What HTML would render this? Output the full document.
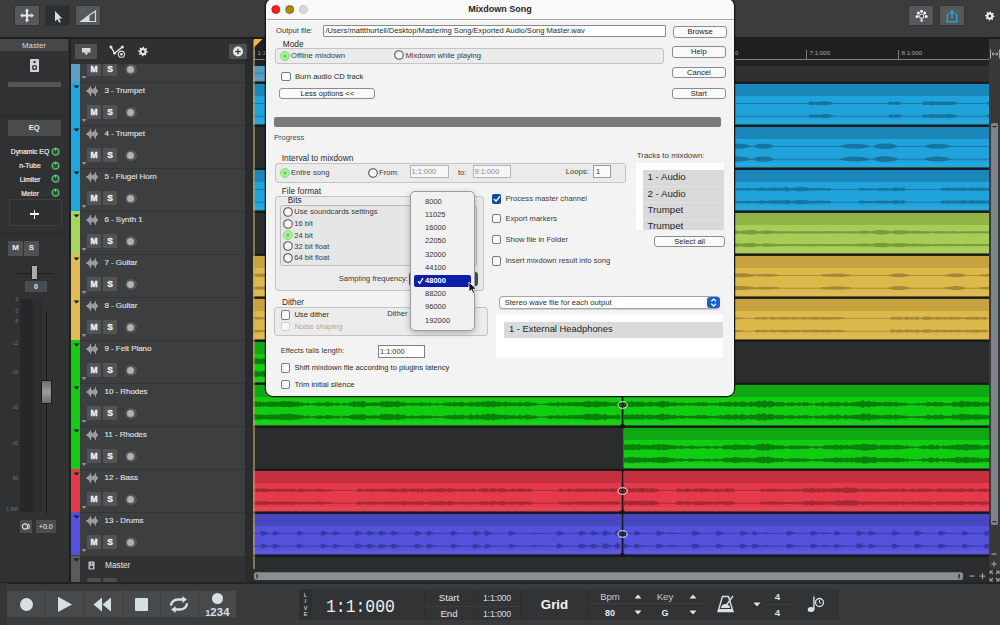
<!DOCTYPE html>
<html><head><meta charset="utf-8"><style>
*{margin:0;padding:0;box-sizing:border-box}
html,body{width:1000px;height:625px;overflow:hidden}
body{background:#2c2d2f;font-family:'Liberation Sans', sans-serif;position:relative}
.a{position:absolute}
</style></head><body>
<svg class="a" style="left:0;top:0" width="1000" height="625" viewBox="0 0 1000 625"><rect x="253" y="38" width="736" height="534" fill="#2b2c2e"/><rect x="253" y="66" width="736" height="16.5" fill="#2f3032"/><rect x="250" y="40.8" width="270" height="40.7" rx="1.8" fill="#4f9cc0"/><path d="M250 42.6 Q250 40.8 251.8 40.8 L518.2 40.8 Q520 40.8 520 42.6 L520 52.9 L250 52.9 Z" fill="#4f95b8"/><rect x="250" y="77" width="270" height="3.5" fill="#ffffff" opacity="0.05"/><rect x="250" y="59.9" width="270" height="1" fill="#3d7e9e" opacity="0.85"/><path d="M250 60.4 252 60.4 254 60.4 256 60.4 258 60.4 260 60.4 262 60.4 264 60.4 266 60.4 268 60.4 270 60.4 272 60.4 274 60.4 276 60.4 278 60.4 280 60.4 282 60.4 284 60.4 286 60.4 288 60.4 290 60.4 292 60.4 294 60.4 296 60.4 298 60.4 300 60.4 302 60.4 304 60.4 306 60.4 308 60.4 310 60.4 312 60.4 314 60.4 316 60.4 318 60.4 320 60.4 322 60.4 324 60.4 326 60.4 328 60.4 330 60.4 332 60.4 334 60.4 336 60.4 338 60.4 340 60.4 342 60.4 344 60.4 346 60.4 348 60.4 350 60.4 352 60.4 354 60.4 356 60.4 358 60.4 360 60.4 362 60.4 364 60.4 366 60.4 368 60.4 370 60.4 372 60.4 374 60.4 376 60.4 378 60.4 380 60.4 382 60.4 384 60.4 386 60.4 388 60.4 390 60.4 392 60.4 394 60.4 396 60.4 398 60.4 400 60.4 402 60.4 404 60.4 406 60.4 408 60.4 410 60.4 412 58.6 414 58.8 416 59.4 418 58.6 420 58.7 422 59.2 424 58.5 426 59.1 428 58.7 430 58.6 432 58.6 434 59.5 436 58.9 438 58.6 440 58.4 442 58.8 444 59.3 446 59.3 448 60.4 450 60.4 452 60.4 454 60.4 456 60.4 458 60.4 460 60.4 462 60.4 464 60.4 466 60.4 468 60.4 470 60.4 472 60.4 474 60.4 476 60.4 478 60.4 480 60.4 482 59.0 484 59.1 486 59.5 488 59.6 490 58.7 492 59.1 494 59.3 496 58.7 498 59.4 500 59.0 502 59.2 504 58.8 506 59.0 508 59.3 510 59.0 512 59.3 514 58.9 516 59.5 518 59.1 518 61.5 516 61.2 514 61.7 512 61.3 510 61.6 508 61.3 506 61.6 504 61.8 502 61.4 500 61.6 498 61.2 496 61.9 494 61.3 492 61.5 490 61.9 488 61.1 486 61.2 484 61.5 482 61.6 480 60.4 478 60.4 476 60.4 474 60.4 472 60.4 470 60.4 468 60.4 466 60.4 464 60.4 462 60.4 460 60.4 458 60.4 456 60.4 454 60.4 452 60.4 450 60.4 448 60.4 446 61.3 444 61.3 442 61.8 440 62.1 438 62.0 436 61.7 434 61.2 432 62.0 430 61.9 428 61.9 426 61.5 424 62.1 422 61.5 420 61.9 418 62.0 416 61.3 414 61.8 412 61.9 410 60.4 408 60.4 406 60.4 404 60.4 402 60.4 400 60.4 398 60.4 396 60.4 394 60.4 392 60.4 390 60.4 388 60.4 386 60.4 384 60.4 382 60.4 380 60.4 378 60.4 376 60.4 374 60.4 372 60.4 370 60.4 368 60.4 366 60.4 364 60.4 362 60.4 360 60.4 358 60.4 356 60.4 354 60.4 352 60.4 350 60.4 348 60.4 346 60.4 344 60.4 342 60.4 340 60.4 338 60.4 336 60.4 334 60.4 332 60.4 330 60.4 328 60.4 326 60.4 324 60.4 322 60.4 320 60.4 318 60.4 316 60.4 314 60.4 312 60.4 310 60.4 308 60.4 306 60.4 304 60.4 302 60.4 300 60.4 298 60.4 296 60.4 294 60.4 292 60.4 290 60.4 288 60.4 286 60.4 284 60.4 282 60.4 280 60.4 278 60.4 276 60.4 274 60.4 272 60.4 270 60.4 268 60.4 266 60.4 264 60.4 262 60.4 260 60.4 258 60.4 256 60.4 254 60.4 252 60.4 250 60.4Z" fill="#3d7e9e"/><rect x="250" y="72.7" width="270" height="1" fill="#3d7e9e" opacity="0.85"/><path d="M250 73.2 252 73.2 254 73.2 256 73.2 258 73.2 260 73.2 262 73.2 264 73.2 266 73.2 268 73.2 270 73.2 272 73.2 274 73.2 276 73.2 278 73.2 280 73.2 282 73.2 284 73.2 286 73.2 288 73.2 290 73.2 292 73.2 294 73.2 296 73.2 298 73.2 300 73.2 302 73.2 304 73.2 306 73.2 308 73.2 310 73.2 312 73.2 314 73.2 316 73.2 318 73.2 320 73.2 322 73.2 324 73.2 326 73.2 328 73.2 330 73.2 332 73.2 334 73.2 336 73.2 338 73.2 340 73.2 342 73.2 344 73.2 346 73.2 348 73.2 350 73.2 352 73.2 354 73.2 356 73.2 358 73.2 360 73.2 362 73.2 364 73.2 366 73.2 368 73.2 370 73.2 372 73.2 374 73.2 376 73.2 378 73.2 380 73.2 382 73.2 384 73.2 386 73.2 388 73.2 390 73.2 392 73.2 394 73.2 396 73.2 398 73.2 400 73.2 402 73.2 404 73.2 406 73.2 408 73.2 410 73.2 412 71.5 414 71.5 416 72.2 418 71.2 420 71.6 422 71.9 424 71.3 426 71.9 428 71.5 430 71.5 432 71.2 434 72.3 436 71.6 438 71.3 440 71.3 442 71.6 444 72.1 446 72.1 448 73.2 450 73.2 452 73.2 454 73.2 456 73.2 458 73.2 460 73.2 462 73.2 464 73.2 466 73.2 468 73.2 470 73.2 472 73.2 474 73.2 476 73.2 478 73.2 480 73.2 482 71.8 484 71.9 486 72.3 488 72.3 490 71.4 492 72.0 494 72.1 496 71.5 498 72.3 500 71.8 502 71.9 504 71.6 506 71.8 508 72.1 510 71.9 512 72.1 514 71.8 516 72.3 518 71.9 518 74.3 516 73.9 514 74.4 512 74.1 510 74.3 508 74.1 506 74.4 504 74.5 502 74.3 500 74.4 498 74.0 496 74.6 494 74.1 492 74.2 490 74.7 488 74.0 486 74.0 484 74.3 482 74.4 480 73.2 478 73.2 476 73.2 474 73.2 472 73.2 470 73.2 468 73.2 466 73.2 464 73.2 462 73.2 460 73.2 458 73.2 456 73.2 454 73.2 452 73.2 450 73.2 448 73.2 446 74.1 444 74.1 442 74.6 440 74.8 438 74.8 436 74.5 434 74.0 432 74.9 430 74.6 428 74.7 426 74.3 424 74.8 422 74.3 420 74.5 418 74.9 416 74.1 414 74.7 412 74.7 410 73.2 408 73.2 406 73.2 404 73.2 402 73.2 400 73.2 398 73.2 396 73.2 394 73.2 392 73.2 390 73.2 388 73.2 386 73.2 384 73.2 382 73.2 380 73.2 378 73.2 376 73.2 374 73.2 372 73.2 370 73.2 368 73.2 366 73.2 364 73.2 362 73.2 360 73.2 358 73.2 356 73.2 354 73.2 352 73.2 350 73.2 348 73.2 346 73.2 344 73.2 342 73.2 340 73.2 338 73.2 336 73.2 334 73.2 332 73.2 330 73.2 328 73.2 326 73.2 324 73.2 322 73.2 320 73.2 318 73.2 316 73.2 314 73.2 312 73.2 310 73.2 308 73.2 306 73.2 304 73.2 302 73.2 300 73.2 298 73.2 296 73.2 294 73.2 292 73.2 290 73.2 288 73.2 286 73.2 284 73.2 282 73.2 280 73.2 278 73.2 276 73.2 274 73.2 272 73.2 270 73.2 268 73.2 266 73.2 264 73.2 262 73.2 260 73.2 258 73.2 256 73.2 254 73.2 252 73.2 250 73.2Z" fill="#3d7e9e"/><rect x="250" y="83.8" width="743" height="40.7" rx="1.8" fill="#1fa3da"/><path d="M250 85.6 Q250 83.8 251.8 83.8 L991.2 83.8 Q993 83.8 993 85.6 L993 95.9 L250 95.9 Z" fill="#1a86b9"/><rect x="250" y="120" width="743" height="3.5" fill="#ffffff" opacity="0.05"/><rect x="250" y="102.9" width="743" height="1" fill="#1773a0" opacity="0.85"/><path d="M250 103.4 252 103.4 254 103.4 256 103.4 258 103.4 260 103.4 262 103.4 264 103.4 266 103.4 268 103.4 270 103.4 272 103.4 274 103.4 276 103.4 278 103.4 280 103.4 282 103.4 284 103.4 286 103.4 288 103.4 290 103.4 292 103.4 294 103.4 296 103.4 298 103.4 300 103.4 302 103.4 304 103.4 306 103.4 308 103.4 310 103.4 312 103.4 314 103.4 316 103.4 318 103.4 320 103.4 322 103.4 324 103.4 326 103.4 328 103.4 330 103.4 332 103.4 334 103.4 336 103.4 338 103.4 340 103.4 342 103.4 344 103.4 346 103.4 348 103.4 350 103.4 352 103.4 354 102.1 356 102.2 358 102.3 360 102.5 362 102.2 364 102.0 366 101.8 368 102.5 370 102.3 372 101.9 374 102.0 376 102.6 378 102.3 380 102.1 382 102.0 384 102.2 386 101.8 388 102.2 390 101.5 392 101.6 394 102.0 396 102.3 398 101.5 400 101.4 402 101.5 404 101.3 406 102.0 408 101.9 410 101.6 412 101.6 414 102.0 416 101.6 418 103.4 420 103.4 422 103.4 424 103.4 426 103.4 428 103.4 430 103.4 432 103.4 434 103.4 436 103.4 438 103.4 440 103.4 442 103.4 444 103.4 446 103.4 448 103.4 450 103.4 452 103.4 454 103.4 456 103.4 458 103.4 460 103.4 462 101.7 464 101.6 466 102.0 468 102.3 470 101.9 472 101.7 474 102.0 476 101.9 478 101.6 480 103.4 482 103.4 484 103.4 486 103.4 488 103.4 490 103.4 492 103.4 494 103.4 496 103.4 498 103.4 500 103.4 502 103.4 504 103.4 506 103.4 508 103.4 510 103.4 512 103.4 514 103.4 516 103.4 518 103.4 520 103.4 522 103.4 524 103.4 526 103.4 528 103.4 530 103.4 532 103.4 534 103.4 536 103.4 538 103.4 540 103.4 542 103.4 544 103.4 546 103.4 548 103.4 550 103.4 552 100.8 554 101.3 556 101.9 558 101.0 560 101.1 562 101.4 564 100.9 566 101.0 568 101.5 570 101.4 572 101.3 574 101.7 576 102.1 578 101.5 580 101.2 582 101.6 584 101.6 586 102.1 588 103.4 590 103.4 592 103.4 594 103.4 596 103.4 598 103.4 600 103.4 602 103.4 604 103.4 606 103.4 608 103.4 610 103.4 612 103.4 614 103.4 616 103.4 618 103.4 620 103.4 622 103.4 624 101.4 626 101.6 628 102.0 630 102.1 632 101.1 634 101.0 636 102.0 638 101.5 640 102.1 642 101.3 644 102.1 646 102.3 648 102.6 650 102.0 652 102.0 654 101.9 656 102.0 658 102.1 660 102.3 662 102.1 664 102.3 666 102.1 668 102.5 670 102.1 672 102.1 674 102.0 676 102.0 678 102.4 680 101.7 682 101.7 684 102.2 686 102.5 688 101.9 690 102.0 692 101.8 694 101.8 696 102.3 698 103.4 700 103.4 702 103.4 704 103.4 706 103.4 708 103.4 710 103.4 712 103.4 714 103.4 716 103.4 718 103.4 720 103.4 722 103.4 724 103.4 726 103.4 728 103.4 730 103.4 732 103.4 734 103.4 736 103.4 738 103.4 740 103.4 742 103.4 744 103.4 746 103.4 748 103.4 750 103.4 752 103.4 754 103.4 756 103.4 758 103.4 760 103.4 762 103.4 764 103.4 766 103.4 768 103.4 770 103.4 772 103.4 774 103.4 776 103.4 778 103.4 780 103.4 782 103.4 784 103.4 786 103.4 788 103.4 790 103.4 792 103.4 794 103.4 796 103.4 798 103.4 800 103.4 802 103.4 804 103.4 806 103.4 808 103.4 810 101.5 812 101.5 814 102.2 816 101.5 818 101.9 820 101.8 822 101.3 824 101.3 826 101.4 828 101.3 830 102.0 832 102.2 834 103.4 836 103.4 838 103.4 840 103.4 842 103.4 844 103.4 846 103.4 848 103.4 850 103.4 852 103.4 854 103.4 856 103.4 858 103.4 860 103.4 862 103.4 864 103.4 866 103.4 868 103.4 870 103.4 872 103.4 874 103.4 876 103.4 878 103.4 880 103.4 882 103.4 884 103.4 886 103.4 888 103.4 890 101.4 892 102.0 894 102.3 896 101.4 898 101.8 900 101.7 902 103.4 904 103.4 906 103.4 908 103.4 910 103.4 912 103.4 914 103.4 916 103.4 918 103.4 920 103.4 922 103.4 924 101.2 926 101.6 928 102.0 930 101.3 932 101.3 934 101.6 936 101.9 938 101.2 940 101.6 942 101.7 944 101.5 946 101.9 948 101.0 950 101.7 952 101.2 954 102.0 956 101.9 958 103.4 960 103.4 962 103.4 964 103.4 966 103.4 968 103.4 970 103.4 972 103.4 974 103.4 976 103.4 978 103.4 980 103.4 982 103.4 984 103.4 986 103.4 988 101.7 990 102.1 992 102.3 992 104.3 990 104.5 988 104.8 986 103.4 984 103.4 982 103.4 980 103.4 978 103.4 976 103.4 974 103.4 972 103.4 970 103.4 968 103.4 966 103.4 964 103.4 962 103.4 960 103.4 958 103.4 956 104.6 954 104.6 952 105.2 950 104.9 948 105.4 946 104.7 944 105.0 942 104.8 940 105.0 938 105.3 936 104.6 934 105.0 932 105.2 930 105.2 928 104.6 926 104.9 924 105.3 922 103.4 920 103.4 918 103.4 916 103.4 914 103.4 912 103.4 910 103.4 908 103.4 906 103.4 904 103.4 902 103.4 900 104.8 898 104.8 896 105.1 894 104.4 892 104.6 890 105.1 888 103.4 886 103.4 884 103.4 882 103.4 880 103.4 878 103.4 876 103.4 874 103.4 872 103.4 870 103.4 868 103.4 866 103.4 864 103.4 862 103.4 860 103.4 858 103.4 856 103.4 854 103.4 852 103.4 850 103.4 848 103.4 846 103.4 844 103.4 842 103.4 840 103.4 838 103.4 836 103.4 834 103.4 832 104.4 830 104.6 828 105.2 826 105.1 824 105.2 822 105.2 820 104.8 818 104.7 816 105.0 814 104.4 812 105.0 810 105.0 808 103.4 806 103.4 804 103.4 802 103.4 800 103.4 798 103.4 796 103.4 794 103.4 792 103.4 790 103.4 788 103.4 786 103.4 784 103.4 782 103.4 780 103.4 778 103.4 776 103.4 774 103.4 772 103.4 770 103.4 768 103.4 766 103.4 764 103.4 762 103.4 760 103.4 758 103.4 756 103.4 754 103.4 752 103.4 750 103.4 748 103.4 746 103.4 744 103.4 742 103.4 740 103.4 738 103.4 736 103.4 734 103.4 732 103.4 730 103.4 728 103.4 726 103.4 724 103.4 722 103.4 720 103.4 718 103.4 716 103.4 714 103.4 712 103.4 710 103.4 708 103.4 706 103.4 704 103.4 702 103.4 700 103.4 698 103.4 696 104.4 694 104.8 692 104.7 690 104.5 688 104.6 686 104.2 684 104.4 682 104.8 680 104.8 678 104.2 676 104.6 674 104.6 672 104.5 670 104.5 668 104.1 666 104.5 664 104.3 662 104.5 660 104.3 658 104.5 656 104.6 654 104.6 652 104.6 650 104.6 648 104.1 646 104.4 644 104.5 642 105.2 640 104.5 638 105.0 636 104.6 634 105.4 632 105.4 630 104.5 628 104.6 626 105.0 624 105.1 622 103.4 620 103.4 618 103.4 616 103.4 614 103.4 612 103.4 610 103.4 608 103.4 606 103.4 604 103.4 602 103.4 600 103.4 598 103.4 596 103.4 594 103.4 592 103.4 590 103.4 588 103.4 586 104.5 584 104.9 582 104.9 580 105.3 578 105.0 576 104.5 574 104.9 572 105.1 570 105.1 568 105.0 566 105.4 564 105.5 562 105.1 560 105.3 558 105.4 556 104.7 554 105.2 552 105.6 550 103.4 548 103.4 546 103.4 544 103.4 542 103.4 540 103.4 538 103.4 536 103.4 534 103.4 532 103.4 530 103.4 528 103.4 526 103.4 524 103.4 522 103.4 520 103.4 518 103.4 516 103.4 514 103.4 512 103.4 510 103.4 508 103.4 506 103.4 504 103.4 502 103.4 500 103.4 498 103.4 496 103.4 494 103.4 492 103.4 490 103.4 488 103.4 486 103.4 484 103.4 482 103.4 480 103.4 478 104.9 476 104.7 474 104.6 472 104.9 470 104.7 468 104.3 466 104.6 464 104.9 462 104.9 460 103.4 458 103.4 456 103.4 454 103.4 452 103.4 450 103.4 448 103.4 446 103.4 444 103.4 442 103.4 440 103.4 438 103.4 436 103.4 434 103.4 432 103.4 430 103.4 428 103.4 426 103.4 424 103.4 422 103.4 420 103.4 418 103.4 416 104.9 414 104.6 412 104.9 410 105.0 408 104.7 406 104.6 404 105.2 402 105.0 400 105.1 398 105.0 396 104.3 394 104.6 392 104.9 390 105.0 388 104.4 386 104.7 384 104.4 382 104.6 380 104.5 378 104.3 376 104.1 374 104.6 372 104.7 370 104.3 368 104.1 366 104.8 364 104.6 362 104.4 360 104.1 358 104.3 356 104.4 354 104.5 352 103.4 350 103.4 348 103.4 346 103.4 344 103.4 342 103.4 340 103.4 338 103.4 336 103.4 334 103.4 332 103.4 330 103.4 328 103.4 326 103.4 324 103.4 322 103.4 320 103.4 318 103.4 316 103.4 314 103.4 312 103.4 310 103.4 308 103.4 306 103.4 304 103.4 302 103.4 300 103.4 298 103.4 296 103.4 294 103.4 292 103.4 290 103.4 288 103.4 286 103.4 284 103.4 282 103.4 280 103.4 278 103.4 276 103.4 274 103.4 272 103.4 270 103.4 268 103.4 266 103.4 264 103.4 262 103.4 260 103.4 258 103.4 256 103.4 254 103.4 252 103.4 250 103.4Z" fill="#1773a0"/><rect x="250" y="115.7" width="743" height="1" fill="#1773a0" opacity="0.85"/><path d="M250 116.2 252 116.2 254 116.2 256 116.2 258 116.2 260 116.2 262 116.2 264 116.2 266 116.2 268 116.2 270 116.2 272 116.2 274 116.2 276 116.2 278 116.2 280 116.2 282 116.2 284 116.2 286 116.2 288 116.2 290 116.2 292 116.2 294 116.2 296 116.2 298 116.2 300 116.2 302 116.2 304 116.2 306 116.2 308 116.2 310 116.2 312 116.2 314 116.2 316 116.2 318 116.2 320 116.2 322 116.2 324 116.2 326 116.2 328 116.2 330 116.2 332 116.2 334 116.2 336 116.2 338 116.2 340 116.2 342 116.2 344 116.2 346 116.2 348 116.2 350 116.2 352 116.2 354 114.9 356 115.0 358 115.1 360 115.3 362 115.1 364 114.7 366 114.6 368 115.4 370 115.1 372 114.7 374 114.8 376 115.3 378 115.0 380 114.9 382 114.7 384 114.9 386 114.5 388 115.0 390 114.2 392 114.3 394 114.7 396 115.1 398 114.2 400 114.1 402 114.3 404 114.3 406 114.8 408 114.7 410 114.4 412 114.5 414 114.7 416 114.3 418 116.2 420 116.2 422 116.2 424 116.2 426 116.2 428 116.2 430 116.2 432 116.2 434 116.2 436 116.2 438 116.2 440 116.2 442 116.2 444 116.2 446 116.2 448 116.2 450 116.2 452 116.2 454 116.2 456 116.2 458 116.2 460 116.2 462 114.5 464 114.3 466 114.8 468 115.1 470 114.8 472 114.5 474 114.7 476 114.7 478 114.4 480 116.2 482 116.2 484 116.2 486 116.2 488 116.2 490 116.2 492 116.2 494 116.2 496 116.2 498 116.2 500 116.2 502 116.2 504 116.2 506 116.2 508 116.2 510 116.2 512 116.2 514 116.2 516 116.2 518 116.2 520 116.2 522 116.2 524 116.2 526 116.2 528 116.2 530 116.2 532 116.2 534 116.2 536 116.2 538 116.2 540 116.2 542 116.2 544 116.2 546 116.2 548 116.2 550 116.2 552 113.8 554 114.1 556 114.7 558 113.8 560 113.9 562 114.2 564 113.7 566 114.0 568 114.5 570 114.2 572 114.1 574 114.6 576 114.9 578 114.4 580 113.9 582 114.3 584 114.4 586 115.0 588 116.2 590 116.2 592 116.2 594 116.2 596 116.2 598 116.2 600 116.2 602 116.2 604 116.2 606 116.2 608 116.2 610 116.2 612 116.2 614 116.2 616 116.2 618 116.2 620 116.2 622 116.2 624 114.1 626 114.4 628 114.8 630 115.0 632 113.9 634 113.8 636 114.9 638 114.2 640 114.8 642 114.2 644 115.0 646 115.0 648 115.4 650 114.9 652 114.8 654 114.7 656 114.8 658 114.9 660 115.1 662 114.9 664 115.1 666 115.0 668 115.3 670 114.9 672 114.9 674 114.9 676 114.9 678 115.2 680 114.5 682 114.6 684 114.9 686 115.2 688 114.8 690 114.9 692 114.8 694 114.5 696 115.1 698 116.2 700 116.2 702 116.2 704 116.2 706 116.2 708 116.2 710 116.2 712 116.2 714 116.2 716 116.2 718 116.2 720 116.2 722 116.2 724 116.2 726 116.2 728 116.2 730 116.2 732 116.2 734 116.2 736 116.2 738 116.2 740 116.2 742 116.2 744 116.2 746 116.2 748 116.2 750 116.2 752 116.2 754 116.2 756 116.2 758 116.2 760 116.2 762 116.2 764 116.2 766 116.2 768 116.2 770 116.2 772 116.2 774 116.2 776 116.2 778 116.2 780 116.2 782 116.2 784 116.2 786 116.2 788 116.2 790 116.2 792 116.2 794 116.2 796 116.2 798 116.2 800 116.2 802 116.2 804 116.2 806 116.2 808 116.2 810 114.3 812 114.4 814 114.9 816 114.2 818 114.7 820 114.7 822 114.3 824 114.1 826 114.2 828 114.1 830 114.8 832 115.1 834 116.2 836 116.2 838 116.2 840 116.2 842 116.2 844 116.2 846 116.2 848 116.2 850 116.2 852 116.2 854 116.2 856 116.2 858 116.2 860 116.2 862 116.2 864 116.2 866 116.2 868 116.2 870 116.2 872 116.2 874 116.2 876 116.2 878 116.2 880 116.2 882 116.2 884 116.2 886 116.2 888 116.2 890 114.2 892 114.7 894 115.0 896 114.2 898 114.6 900 114.6 902 116.2 904 116.2 906 116.2 908 116.2 910 116.2 912 116.2 914 116.2 916 116.2 918 116.2 920 116.2 922 116.2 924 114.1 926 114.4 928 114.8 930 114.2 932 114.1 934 114.3 936 114.7 938 114.1 940 114.4 942 114.5 944 114.4 946 114.6 948 113.8 950 114.4 952 114.0 954 114.8 956 114.7 958 116.2 960 116.2 962 116.2 964 116.2 966 116.2 968 116.2 970 116.2 972 116.2 974 116.2 976 116.2 978 116.2 980 116.2 982 116.2 984 116.2 986 116.2 988 114.6 990 114.9 992 115.2 992 117.1 990 117.3 988 117.5 986 116.2 984 116.2 982 116.2 980 116.2 978 116.2 976 116.2 974 116.2 972 116.2 970 116.2 968 116.2 966 116.2 964 116.2 962 116.2 960 116.2 958 116.2 956 117.5 954 117.4 952 118.1 950 117.7 948 118.2 946 117.6 944 117.7 942 117.7 940 117.7 938 118.0 936 117.4 934 117.8 932 118.0 930 117.9 928 117.4 926 117.7 924 118.0 922 116.2 920 116.2 918 116.2 916 116.2 914 116.2 912 116.2 910 116.2 908 116.2 906 116.2 904 116.2 902 116.2 900 117.6 898 117.6 896 117.9 894 117.2 892 117.5 890 117.9 888 116.2 886 116.2 884 116.2 882 116.2 880 116.2 878 116.2 876 116.2 874 116.2 872 116.2 870 116.2 868 116.2 866 116.2 864 116.2 862 116.2 860 116.2 858 116.2 856 116.2 854 116.2 852 116.2 850 116.2 848 116.2 846 116.2 844 116.2 842 116.2 840 116.2 838 116.2 836 116.2 834 116.2 832 117.1 830 117.4 828 118.0 826 117.9 824 118.0 822 117.8 820 117.5 818 117.5 816 117.9 814 117.3 812 117.7 810 117.8 808 116.2 806 116.2 804 116.2 802 116.2 800 116.2 798 116.2 796 116.2 794 116.2 792 116.2 790 116.2 788 116.2 786 116.2 784 116.2 782 116.2 780 116.2 778 116.2 776 116.2 774 116.2 772 116.2 770 116.2 768 116.2 766 116.2 764 116.2 762 116.2 760 116.2 758 116.2 756 116.2 754 116.2 752 116.2 750 116.2 748 116.2 746 116.2 744 116.2 742 116.2 740 116.2 738 116.2 736 116.2 734 116.2 732 116.2 730 116.2 728 116.2 726 116.2 724 116.2 722 116.2 720 116.2 718 116.2 716 116.2 714 116.2 712 116.2 710 116.2 708 116.2 706 116.2 704 116.2 702 116.2 700 116.2 698 116.2 696 117.2 694 117.7 692 117.4 690 117.3 688 117.4 686 117.0 684 117.3 682 117.5 680 117.7 678 117.0 676 117.3 674 117.3 672 117.3 670 117.3 668 117.0 666 117.2 664 117.1 662 117.3 660 117.2 658 117.3 656 117.4 654 117.4 652 117.4 650 117.3 648 116.9 646 117.2 644 117.2 642 117.9 640 117.4 638 117.9 636 117.3 634 118.3 632 118.2 630 117.2 628 117.4 626 117.8 624 118.0 622 116.2 620 116.2 618 116.2 616 116.2 614 116.2 612 116.2 610 116.2 608 116.2 606 116.2 604 116.2 602 116.2 600 116.2 598 116.2 596 116.2 594 116.2 592 116.2 590 116.2 588 116.2 586 117.2 584 117.7 582 117.8 580 118.1 578 117.8 576 117.3 574 117.6 572 118.0 570 117.9 568 117.7 566 118.1 564 118.3 562 117.9 560 118.1 558 118.2 556 117.5 554 118.0 552 118.3 550 116.2 548 116.2 546 116.2 544 116.2 542 116.2 540 116.2 538 116.2 536 116.2 534 116.2 532 116.2 530 116.2 528 116.2 526 116.2 524 116.2 522 116.2 520 116.2 518 116.2 516 116.2 514 116.2 512 116.2 510 116.2 508 116.2 506 116.2 504 116.2 502 116.2 500 116.2 498 116.2 496 116.2 494 116.2 492 116.2 490 116.2 488 116.2 486 116.2 484 116.2 482 116.2 480 116.2 478 117.7 476 117.5 474 117.5 472 117.6 470 117.4 468 117.1 466 117.4 464 117.8 462 117.6 460 116.2 458 116.2 456 116.2 454 116.2 452 116.2 450 116.2 448 116.2 446 116.2 444 116.2 442 116.2 440 116.2 438 116.2 436 116.2 434 116.2 432 116.2 430 116.2 428 116.2 426 116.2 424 116.2 422 116.2 420 116.2 418 116.2 416 117.8 414 117.5 412 117.7 410 117.7 408 117.5 406 117.4 404 117.9 402 117.8 400 118.0 398 117.9 396 117.1 394 117.5 392 117.8 390 117.9 388 117.2 386 117.6 384 117.3 382 117.4 380 117.3 378 117.2 376 116.9 374 117.4 372 117.5 370 117.1 368 116.9 366 117.6 364 117.5 362 117.2 360 116.9 358 117.2 356 117.2 354 117.3 352 116.2 350 116.2 348 116.2 346 116.2 344 116.2 342 116.2 340 116.2 338 116.2 336 116.2 334 116.2 332 116.2 330 116.2 328 116.2 326 116.2 324 116.2 322 116.2 320 116.2 318 116.2 316 116.2 314 116.2 312 116.2 310 116.2 308 116.2 306 116.2 304 116.2 302 116.2 300 116.2 298 116.2 296 116.2 294 116.2 292 116.2 290 116.2 288 116.2 286 116.2 284 116.2 282 116.2 280 116.2 278 116.2 276 116.2 274 116.2 272 116.2 270 116.2 268 116.2 266 116.2 264 116.2 262 116.2 260 116.2 258 116.2 256 116.2 254 116.2 252 116.2 250 116.2Z" fill="#1773a0"/><rect x="300" y="126.8" width="693" height="40.7" rx="1.8" fill="#1fa3da"/><path d="M300 128.6 Q300 126.8 301.8 126.8 L991.2 126.8 Q993 126.8 993 128.6 L993 138.9 L300 138.9 Z" fill="#1a86b9"/><rect x="300" y="163" width="693" height="3.5" fill="#ffffff" opacity="0.05"/><rect x="300" y="145.9" width="693" height="1" fill="#1773a0" opacity="0.85"/><path d="M300 146.4 302 146.4 304 146.4 306 146.4 308 146.4 310 146.4 312 146.4 314 146.4 316 146.4 318 146.4 320 146.4 322 146.4 324 146.4 326 146.4 328 146.4 330 146.4 332 145.4 334 144.9 336 144.5 338 144.4 340 144.0 342 143.9 344 143.8 346 144.1 348 144.1 350 144.2 352 144.5 354 144.9 356 145.4 358 146.4 360 145.6 362 144.9 364 144.4 366 144.1 368 143.9 370 143.6 372 143.6 374 143.4 376 143.7 378 143.8 380 144.1 382 144.4 384 144.9 386 145.6 388 146.4 390 145.4 392 144.9 394 144.5 396 144.3 398 143.9 400 143.9 402 143.9 404 143.9 406 143.9 408 144.0 410 144.4 412 144.8 414 145.2 416 145.7 418 145.2 420 144.6 422 144.3 424 143.9 426 143.9 428 143.8 430 143.7 432 143.6 434 143.9 436 144.1 438 144.7 440 145.2 442 146.4 444 146.4 446 145.5 448 144.9 450 144.7 452 144.4 454 144.1 456 143.9 458 143.8 460 143.9 462 143.9 464 143.9 466 144.1 468 144.3 470 144.5 472 144.8 474 145.2 476 145.8 478 146.4 480 146.4 482 146.4 484 146.4 486 146.4 488 146.4 490 146.4 492 146.4 494 146.4 496 146.4 498 146.4 500 146.4 502 146.4 504 146.4 506 146.4 508 146.4 510 146.4 512 146.4 514 146.4 516 146.4 518 146.4 520 146.4 522 146.4 524 146.4 526 146.4 528 146.4 530 146.4 532 146.4 534 146.4 536 146.4 538 146.4 540 146.4 542 146.4 544 146.4 546 145.7 548 145.0 550 144.5 552 144.2 554 143.9 556 144.0 558 143.9 560 144.2 562 144.5 564 144.9 566 145.7 568 146.4 570 145.6 572 144.9 574 144.4 576 143.9 578 143.7 580 143.6 582 143.8 584 143.6 586 144.0 588 144.1 590 144.6 592 145.1 594 146.4 596 146.4 598 146.4 600 146.4 602 146.4 604 146.4 606 146.4 608 146.4 610 146.4 612 146.4 614 146.4 616 146.4 618 146.4 620 145.4 622 144.9 624 144.5 626 144.2 628 144.0 630 143.9 632 143.8 634 143.6 636 143.8 638 143.8 640 143.7 642 143.9 644 144.2 646 144.6 648 145.0 650 145.4 652 146.4 654 146.4 656 146.4 658 146.4 660 146.4 662 146.4 664 146.4 666 146.4 668 146.4 670 146.4 672 146.4 674 146.4 676 146.4 678 146.4 680 146.4 682 146.4 684 146.4 686 146.4 688 145.2 690 144.8 692 144.3 694 144.1 696 143.8 698 143.8 700 143.8 702 143.9 704 144.0 706 144.1 708 144.5 710 145.0 712 145.6 714 146.4 716 146.4 718 146.4 720 145.3 722 144.7 724 144.4 726 144.0 728 143.9 730 143.7 732 143.4 734 143.5 736 143.6 738 143.7 740 143.6 742 143.9 744 144.1 746 144.5 748 145.0 750 145.7 752 146.4 754 145.5 756 144.7 758 144.2 760 144.0 762 143.7 764 143.8 766 143.8 768 143.9 770 144.5 772 145.0 774 146.4 776 146.4 778 146.4 780 146.4 782 146.4 784 146.4 786 146.4 788 146.4 790 146.4 792 146.4 794 146.4 796 146.4 798 146.4 800 146.4 802 146.4 804 146.4 806 146.4 808 146.4 810 146.4 812 146.4 814 146.4 816 146.4 818 146.4 820 146.4 822 146.4 824 146.4 826 146.4 828 146.4 830 146.4 832 146.4 834 146.4 836 146.4 838 146.4 840 146.4 842 145.4 844 144.9 846 144.6 848 144.2 850 144.0 852 144.0 854 143.8 856 143.8 858 143.9 860 144.0 862 144.2 864 144.5 866 144.9 868 145.3 870 146.4 872 146.4 874 145.6 876 144.7 878 144.3 880 143.8 882 143.7 884 143.5 886 143.5 888 143.5 890 143.6 892 144.0 894 144.5 896 145.1 898 146.4 900 146.4 902 146.4 904 146.4 906 146.4 908 146.4 910 146.4 912 146.4 914 146.4 916 146.4 918 146.4 920 146.4 922 146.4 924 146.4 926 145.3 928 144.8 930 144.5 932 144.1 934 143.8 936 143.8 938 143.7 940 143.8 942 144.0 944 144.3 946 144.6 948 145.1 950 145.7 952 146.4 954 146.4 956 146.4 958 146.4 960 146.4 962 146.4 964 146.4 966 146.4 968 146.4 970 146.4 972 146.4 974 146.4 976 146.4 978 146.4 980 146.4 982 146.4 984 146.4 986 146.4 988 146.4 990 146.4 992 146.4 992 146.4 990 146.4 988 146.4 986 146.4 984 146.4 982 146.4 980 146.4 978 146.4 976 146.4 974 146.4 972 146.4 970 146.4 968 146.4 966 146.4 964 146.4 962 146.4 960 146.4 958 146.4 956 146.4 954 146.4 952 146.4 950 147.0 948 147.5 946 148.0 944 148.2 942 148.4 940 148.6 938 148.7 936 148.6 934 148.6 932 148.4 930 148.0 928 147.7 926 147.3 924 146.4 922 146.4 920 146.4 918 146.4 916 146.4 914 146.4 912 146.4 910 146.4 908 146.4 906 146.4 904 146.4 902 146.4 900 146.4 898 146.4 896 147.5 894 148.0 892 148.4 890 148.8 888 148.9 886 148.9 884 148.9 882 148.7 880 148.6 878 148.2 876 147.9 874 147.1 872 146.4 870 146.4 868 147.3 866 147.7 864 148.0 862 148.3 860 148.4 858 148.5 856 148.6 854 148.6 852 148.4 850 148.5 848 148.2 846 148.0 844 147.7 842 147.2 840 146.4 838 146.4 836 146.4 834 146.4 832 146.4 830 146.4 828 146.4 826 146.4 824 146.4 822 146.4 820 146.4 818 146.4 816 146.4 814 146.4 812 146.4 810 146.4 808 146.4 806 146.4 804 146.4 802 146.4 800 146.4 798 146.4 796 146.4 794 146.4 792 146.4 790 146.4 788 146.4 786 146.4 784 146.4 782 146.4 780 146.4 778 146.4 776 146.4 774 146.4 772 147.6 770 148.0 768 148.5 766 148.6 764 148.6 762 148.7 760 148.5 758 148.3 756 147.8 754 147.2 752 146.4 750 147.0 748 147.6 746 148.0 744 148.3 742 148.5 740 148.8 738 148.7 736 148.8 734 148.9 732 148.9 730 148.7 728 148.6 726 148.5 724 148.1 722 147.9 720 147.3 718 146.4 716 146.4 714 146.4 712 147.0 710 147.6 708 148.0 706 148.3 704 148.5 702 148.6 700 148.6 698 148.6 696 148.6 694 148.4 692 148.2 690 147.8 688 147.4 686 146.4 684 146.4 682 146.4 680 146.4 678 146.4 676 146.4 674 146.4 672 146.4 670 146.4 668 146.4 666 146.4 664 146.4 662 146.4 660 146.4 658 146.4 656 146.4 654 146.4 652 146.4 650 147.2 648 147.6 646 147.9 644 148.3 642 148.5 640 148.7 638 148.6 636 148.6 634 148.8 632 148.6 630 148.5 628 148.4 626 148.2 624 148.0 622 147.7 620 147.2 618 146.4 616 146.4 614 146.4 612 146.4 610 146.4 608 146.4 606 146.4 604 146.4 602 146.4 600 146.4 598 146.4 596 146.4 594 146.4 592 147.5 590 148.0 588 148.3 586 148.4 584 148.8 582 148.6 580 148.8 578 148.7 576 148.5 574 148.1 572 147.7 570 147.1 568 146.4 566 147.0 564 147.7 562 148.0 560 148.3 558 148.5 556 148.5 554 148.5 552 148.3 550 148.0 548 147.6 546 147.0 544 146.4 542 146.4 540 146.4 538 146.4 536 146.4 534 146.4 532 146.4 530 146.4 528 146.4 526 146.4 524 146.4 522 146.4 520 146.4 518 146.4 516 146.4 514 146.4 512 146.4 510 146.4 508 146.4 506 146.4 504 146.4 502 146.4 500 146.4 498 146.4 496 146.4 494 146.4 492 146.4 490 146.4 488 146.4 486 146.4 484 146.4 482 146.4 480 146.4 478 146.4 476 146.9 474 147.4 472 147.7 470 148.1 468 148.2 466 148.3 464 148.6 462 148.5 460 148.5 458 148.6 456 148.5 454 148.3 452 148.1 450 147.9 448 147.6 446 147.2 444 146.4 442 146.4 440 147.4 438 147.8 436 148.3 434 148.5 432 148.8 430 148.7 428 148.6 426 148.5 424 148.5 422 148.2 420 147.9 418 147.4 416 147.0 414 147.5 412 147.8 410 148.1 408 148.4 406 148.5 404 148.5 402 148.5 400 148.5 398 148.5 396 148.2 394 148.1 392 147.6 390 147.3 388 146.4 386 147.1 384 147.7 382 148.1 380 148.3 378 148.6 376 148.7 374 148.9 372 148.8 370 148.8 368 148.6 366 148.4 364 148.1 362 147.6 360 147.1 358 146.4 356 147.3 354 147.6 352 148.0 350 148.2 348 148.4 346 148.4 344 148.6 342 148.6 340 148.5 338 148.1 336 148.0 334 147.6 332 147.3 330 146.4 328 146.4 326 146.4 324 146.4 322 146.4 320 146.4 318 146.4 316 146.4 314 146.4 312 146.4 310 146.4 308 146.4 306 146.4 304 146.4 302 146.4 300 146.4Z" fill="#1773a0"/><rect x="300" y="158.7" width="693" height="1" fill="#1773a0" opacity="0.85"/><path d="M300 159.2 302 159.2 304 159.2 306 159.2 308 159.2 310 159.2 312 159.2 314 159.2 316 159.2 318 159.2 320 159.2 322 159.2 324 159.2 326 159.2 328 159.2 330 159.2 332 158.1 334 157.7 336 157.3 338 157.0 340 156.8 342 156.7 344 156.9 346 156.9 348 156.8 350 156.9 352 157.3 354 157.7 356 158.2 358 159.2 360 158.4 362 157.6 364 157.2 366 156.8 368 156.5 370 156.4 372 156.3 374 156.3 376 156.5 378 156.4 380 156.9 382 157.3 384 157.7 386 158.4 388 159.2 390 158.2 392 157.7 394 157.3 396 157.1 398 156.8 400 156.8 402 156.6 404 156.8 406 156.9 408 157.0 410 157.2 412 157.5 414 157.9 416 158.5 418 158.0 420 157.5 422 157.0 424 156.8 426 156.6 428 156.5 430 156.3 432 156.6 434 156.8 436 156.9 438 157.3 440 158.0 442 159.2 444 159.2 446 158.2 448 157.8 450 157.4 452 157.2 454 157.0 456 156.8 458 156.7 460 156.7 462 156.6 464 156.9 466 156.9 468 157.1 470 157.4 472 157.5 474 158.1 476 158.6 478 159.2 480 159.2 482 159.2 484 159.2 486 159.2 488 159.2 490 159.2 492 159.2 494 159.2 496 159.2 498 159.2 500 159.2 502 159.2 504 159.2 506 159.2 508 159.2 510 159.2 512 159.2 514 159.2 516 159.2 518 159.2 520 159.2 522 159.2 524 159.2 526 159.2 528 159.2 530 159.2 532 159.2 534 159.2 536 159.2 538 159.2 540 159.2 542 159.2 544 159.2 546 158.5 548 157.7 550 157.2 552 156.9 554 156.8 556 156.8 558 156.8 560 156.9 562 157.3 564 157.7 566 158.4 568 159.2 570 158.4 572 157.6 574 157.2 576 156.9 578 156.5 580 156.3 582 156.6 584 156.4 586 156.7 588 157.1 590 157.4 592 158.0 594 159.2 596 159.2 598 159.2 600 159.2 602 159.2 604 159.2 606 159.2 608 159.2 610 159.2 612 159.2 614 159.2 616 159.2 618 159.2 620 158.2 622 157.7 624 157.3 626 157.0 628 156.8 630 156.7 632 156.4 634 156.5 636 156.5 638 156.5 640 156.6 642 156.8 644 156.9 646 157.4 648 157.6 650 158.2 652 159.2 654 159.2 656 159.2 658 159.2 660 159.2 662 159.2 664 159.2 666 159.2 668 159.2 670 159.2 672 159.2 674 159.2 676 159.2 678 159.2 680 159.2 682 159.2 684 159.2 686 159.2 688 158.1 690 157.5 692 157.2 694 156.8 696 156.7 698 156.5 700 156.5 702 156.6 704 156.8 706 157.0 708 157.3 710 157.7 712 158.4 714 159.2 716 159.2 718 159.2 720 158.1 722 157.6 724 157.1 726 156.8 728 156.6 730 156.3 732 156.3 734 156.3 736 156.3 738 156.2 740 156.5 742 156.7 744 157.0 746 157.3 748 157.8 750 158.5 752 159.2 754 158.3 756 157.5 758 156.9 760 156.6 762 156.4 764 156.5 766 156.5 768 156.8 770 157.2 772 157.8 774 159.2 776 159.2 778 159.2 780 159.2 782 159.2 784 159.2 786 159.2 788 159.2 790 159.2 792 159.2 794 159.2 796 159.2 798 159.2 800 159.2 802 159.2 804 159.2 806 159.2 808 159.2 810 159.2 812 159.2 814 159.2 816 159.2 818 159.2 820 159.2 822 159.2 824 159.2 826 159.2 828 159.2 830 159.2 832 159.2 834 159.2 836 159.2 838 159.2 840 159.2 842 158.2 844 157.7 846 157.4 848 157.1 850 156.9 852 156.6 854 156.7 856 156.6 858 156.7 860 156.8 862 157.0 864 157.4 866 157.7 868 158.2 870 159.2 872 159.2 874 158.3 876 157.6 878 156.9 880 156.6 882 156.5 884 156.2 886 156.2 888 156.2 890 156.4 892 156.9 894 157.3 896 157.9 898 159.2 900 159.2 902 159.2 904 159.2 906 159.2 908 159.2 910 159.2 912 159.2 914 159.2 916 159.2 918 159.2 920 159.2 922 159.2 924 159.2 926 158.1 928 157.5 930 157.2 932 156.9 934 156.7 936 156.7 938 156.6 940 156.5 942 156.9 944 157.0 946 157.3 948 157.8 950 158.5 952 159.2 954 159.2 956 159.2 958 159.2 960 159.2 962 159.2 964 159.2 966 159.2 968 159.2 970 159.2 972 159.2 974 159.2 976 159.2 978 159.2 980 159.2 982 159.2 984 159.2 986 159.2 988 159.2 990 159.2 992 159.2 992 159.2 990 159.2 988 159.2 986 159.2 984 159.2 982 159.2 980 159.2 978 159.2 976 159.2 974 159.2 972 159.2 970 159.2 968 159.2 966 159.2 964 159.2 962 159.2 960 159.2 958 159.2 956 159.2 954 159.2 952 159.2 950 159.8 948 160.4 946 160.8 944 161.0 942 161.2 940 161.5 938 161.4 936 161.3 934 161.3 932 161.1 930 160.9 928 160.6 926 160.1 924 159.2 922 159.2 920 159.2 918 159.2 916 159.2 914 159.2 912 159.2 910 159.2 908 159.2 906 159.2 904 159.2 902 159.2 900 159.2 898 159.2 896 160.3 894 160.8 892 161.2 890 161.5 888 161.7 886 161.7 884 161.8 882 161.5 880 161.5 878 161.1 876 160.6 874 160.0 872 159.2 870 159.2 868 160.0 866 160.5 864 160.8 862 161.0 860 161.2 858 161.4 856 161.4 854 161.3 852 161.4 850 161.1 848 160.9 846 160.8 844 160.5 842 160.1 840 159.2 838 159.2 836 159.2 834 159.2 832 159.2 830 159.2 828 159.2 826 159.2 824 159.2 822 159.2 820 159.2 818 159.2 816 159.2 814 159.2 812 159.2 810 159.2 808 159.2 806 159.2 804 159.2 802 159.2 800 159.2 798 159.2 796 159.2 794 159.2 792 159.2 790 159.2 788 159.2 786 159.2 784 159.2 782 159.2 780 159.2 778 159.2 776 159.2 774 159.2 772 160.4 770 160.9 768 161.3 766 161.5 764 161.5 762 161.6 760 161.4 758 161.1 756 160.7 754 159.9 752 159.2 750 159.8 748 160.4 746 160.8 744 161.1 742 161.3 740 161.5 738 161.7 736 161.7 734 161.7 732 161.7 730 161.7 728 161.4 726 161.3 724 161.0 722 160.6 720 160.2 718 159.2 716 159.2 714 159.2 712 159.9 710 160.4 708 160.8 706 161.1 704 161.2 702 161.4 700 161.5 698 161.5 696 161.3 694 161.2 692 160.9 690 160.6 688 160.2 686 159.2 684 159.2 682 159.2 680 159.2 678 159.2 676 159.2 674 159.2 672 159.2 670 159.2 668 159.2 666 159.2 664 159.2 662 159.2 660 159.2 658 159.2 656 159.2 654 159.2 652 159.2 650 160.1 648 160.5 646 160.8 644 161.1 642 161.2 640 161.4 638 161.5 636 161.5 634 161.5 632 161.6 630 161.4 628 161.2 626 161.1 624 160.8 622 160.5 620 160.1 618 159.2 616 159.2 614 159.2 612 159.2 610 159.2 608 159.2 606 159.2 604 159.2 602 159.2 600 159.2 598 159.2 596 159.2 594 159.2 592 160.2 590 160.7 588 161.0 586 161.3 584 161.6 582 161.4 580 161.6 578 161.5 576 161.2 574 160.9 572 160.6 570 159.9 568 159.2 566 159.9 564 160.5 562 160.8 560 161.1 558 161.2 556 161.2 554 161.3 552 161.2 550 160.9 548 160.4 546 159.8 544 159.2 542 159.2 540 159.2 538 159.2 536 159.2 534 159.2 532 159.2 530 159.2 528 159.2 526 159.2 524 159.2 522 159.2 520 159.2 518 159.2 516 159.2 514 159.2 512 159.2 510 159.2 508 159.2 506 159.2 504 159.2 502 159.2 500 159.2 498 159.2 496 159.2 494 159.2 492 159.2 490 159.2 488 159.2 486 159.2 484 159.2 482 159.2 480 159.2 478 159.2 476 159.7 474 160.2 472 160.6 470 160.7 468 161.0 466 161.2 464 161.2 462 161.4 460 161.3 458 161.3 456 161.2 454 161.1 452 160.9 450 160.7 448 160.4 446 160.0 444 159.2 442 159.2 440 160.2 438 160.8 436 161.1 434 161.3 432 161.4 430 161.6 428 161.5 426 161.4 424 161.2 422 161.1 420 160.6 418 160.2 416 159.8 414 160.3 412 160.7 410 160.9 408 161.1 406 161.2 404 161.2 402 161.4 400 161.2 398 161.2 396 161.0 394 160.8 392 160.5 390 160.0 388 159.2 386 159.9 384 160.5 382 160.9 380 161.2 378 161.5 376 161.5 374 161.6 372 161.7 370 161.6 368 161.5 366 161.2 364 160.9 362 160.5 360 159.8 358 159.2 356 160.1 354 160.5 352 160.9 350 161.1 348 161.2 346 161.2 344 161.2 342 161.3 340 161.2 338 161.0 336 160.8 334 160.5 332 160.1 330 159.2 328 159.2 326 159.2 324 159.2 322 159.2 320 159.2 318 159.2 316 159.2 314 159.2 312 159.2 310 159.2 308 159.2 306 159.2 304 159.2 302 159.2 300 159.2Z" fill="#1773a0"/><rect x="250" y="169.8" width="743" height="40.7" rx="1.8" fill="#1fa3da"/><path d="M250 171.6 Q250 169.8 251.8 169.8 L991.2 169.8 Q993 169.8 993 171.6 L993 181.9 L250 181.9 Z" fill="#1a86b9"/><rect x="250" y="206" width="743" height="3.5" fill="#ffffff" opacity="0.05"/><rect x="250" y="188.9" width="743" height="1" fill="#1773a0" opacity="0.85"/><path d="M250 189.4 252 189.4 254 189.4 256 189.4 258 189.4 260 189.4 262 189.4 264 189.4 266 189.4 268 189.4 270 189.4 272 189.4 274 189.4 276 189.4 278 189.4 280 189.4 282 189.4 284 189.4 286 189.4 288 189.4 290 189.4 292 189.4 294 189.4 296 189.4 298 189.4 300 189.4 302 189.4 304 189.4 306 189.4 308 189.4 310 189.4 312 189.4 314 189.4 316 187.6 318 187.9 320 188.1 322 188.5 324 188.4 326 188.2 328 187.9 330 187.9 332 188.1 334 187.8 336 188.0 338 188.3 340 188.4 342 188.4 344 189.4 346 189.4 348 189.4 350 189.4 352 189.4 354 189.4 356 187.5 358 187.7 360 188.2 362 188.4 364 187.7 366 187.8 368 188.1 370 188.3 372 187.5 374 187.3 376 187.2 378 187.7 380 188.1 382 187.6 384 187.2 386 187.9 388 187.2 390 187.2 392 187.1 394 187.2 396 187.6 398 187.7 400 187.3 402 187.4 404 187.9 406 188.2 408 188.4 410 187.6 412 187.6 414 187.4 416 187.7 418 188.1 420 187.7 422 187.8 424 188.4 426 187.8 428 187.9 430 187.6 432 187.5 434 188.1 436 189.4 438 189.4 440 189.4 442 189.4 444 189.4 446 189.4 448 189.4 450 189.4 452 189.4 454 189.4 456 189.4 458 189.4 460 189.4 462 189.4 464 189.4 466 189.4 468 189.4 470 189.4 472 189.4 474 189.4 476 189.4 478 189.4 480 189.4 482 189.4 484 189.4 486 189.4 488 189.4 490 189.4 492 189.4 494 189.4 496 189.4 498 189.4 500 189.4 502 189.4 504 189.4 506 189.4 508 189.4 510 187.3 512 187.7 514 188.1 516 187.3 518 187.2 520 187.7 522 188.2 524 188.2 526 187.4 528 187.6 530 187.7 532 187.9 534 187.9 536 187.6 538 187.3 540 188.3 542 189.4 544 189.4 546 189.4 548 189.4 550 189.4 552 189.4 554 189.4 556 189.4 558 189.4 560 189.4 562 189.4 564 189.4 566 189.4 568 189.4 570 189.4 572 189.4 574 189.4 576 189.4 578 189.4 580 189.4 582 189.4 584 189.4 586 189.4 588 189.4 590 189.4 592 187.1 594 187.5 596 188.0 598 187.3 600 187.5 602 187.6 604 187.3 606 187.1 608 187.3 610 187.8 612 188.4 614 187.2 616 187.5 618 188.3 620 189.4 622 189.4 624 189.4 626 189.4 628 189.4 630 189.4 632 189.4 634 189.4 636 189.4 638 189.4 640 189.4 642 189.4 644 189.4 646 189.4 648 189.4 650 189.4 652 188.0 654 188.1 656 188.3 658 188.0 660 187.7 662 188.0 664 187.8 666 187.8 668 188.3 670 187.8 672 188.1 674 188.3 676 188.5 678 187.8 680 188.1 682 187.2 684 187.4 686 187.8 688 188.1 690 187.7 692 187.3 694 188.1 696 188.1 698 187.2 700 187.7 702 189.4 704 189.4 706 189.4 708 189.4 710 189.4 712 189.4 714 189.4 716 189.4 718 189.4 720 189.4 722 189.4 724 189.4 726 189.4 728 188.0 730 188.2 732 188.3 734 188.6 736 188.6 738 188.1 740 188.3 742 187.9 744 188.5 746 188.2 748 188.0 750 188.4 752 188.3 754 188.5 756 188.3 758 188.1 760 188.0 762 187.6 764 187.9 766 188.2 768 188.3 770 187.5 772 188.1 774 187.3 776 187.7 778 187.8 780 187.7 782 187.7 784 188.1 786 186.8 788 187.3 790 187.9 792 188.2 794 187.7 796 187.5 798 187.2 800 187.2 802 186.9 804 187.4 806 187.2 808 187.9 810 187.9 812 187.9 814 188.4 816 187.6 818 188.3 820 188.1 822 187.9 824 188.0 826 188.4 828 187.9 830 188.2 832 189.4 834 189.4 836 189.4 838 189.4 840 189.4 842 189.4 844 189.4 846 189.4 848 189.4 850 189.4 852 189.4 854 189.4 856 189.4 858 189.4 860 187.8 862 187.9 864 188.2 866 188.4 868 188.3 870 188.4 872 188.4 874 188.4 876 188.5 878 187.9 880 187.9 882 187.7 884 188.2 886 187.9 888 188.2 890 188.3 892 188.4 894 187.3 896 187.4 898 187.8 900 188.3 902 187.5 904 187.6 906 189.4 908 189.4 910 189.4 912 189.4 914 189.4 916 189.4 918 189.4 920 189.4 922 189.4 924 189.4 926 189.4 928 189.4 930 189.4 932 189.4 934 189.4 936 189.4 938 189.4 940 189.4 942 187.8 944 188.0 946 188.0 948 187.8 950 187.8 952 188.2 954 187.7 956 187.8 958 188.1 960 187.8 962 187.8 964 187.4 966 187.8 968 188.3 970 187.7 972 187.4 974 187.9 976 187.8 978 187.8 980 187.5 982 187.6 984 187.7 986 188.2 988 187.8 990 188.0 992 188.2 992 190.4 990 190.6 988 190.8 986 190.4 984 190.9 982 191.0 980 191.0 978 190.7 976 190.8 974 190.6 972 191.1 970 190.9 968 190.3 966 190.8 964 191.1 962 190.7 960 190.7 958 190.5 956 190.8 954 190.9 952 190.4 950 190.8 948 190.8 946 190.6 944 190.6 942 190.8 940 189.4 938 189.4 936 189.4 934 189.4 932 189.4 930 189.4 928 189.4 926 189.4 924 189.4 922 189.4 920 189.4 918 189.4 916 189.4 914 189.4 912 189.4 910 189.4 908 189.4 906 189.4 904 190.9 902 191.0 900 190.4 898 190.8 896 191.1 894 191.2 892 190.3 890 190.4 888 190.4 886 190.7 884 190.4 882 190.8 880 190.7 878 190.7 876 190.1 874 190.2 872 190.3 870 190.3 868 190.4 866 190.2 864 190.4 862 190.7 860 190.8 858 189.4 856 189.4 854 189.4 852 189.4 850 189.4 848 189.4 846 189.4 844 189.4 842 189.4 840 189.4 838 189.4 836 189.4 834 189.4 832 189.4 830 190.4 828 190.7 826 190.3 824 190.6 822 190.6 820 190.5 818 190.3 816 190.9 814 190.2 812 190.7 810 190.6 808 190.6 806 191.2 804 191.1 802 191.6 800 191.3 798 191.3 796 191.0 794 190.8 792 190.4 790 190.7 788 191.2 786 191.6 784 190.5 782 190.8 780 190.9 778 190.8 776 190.9 774 191.2 772 190.5 770 191.0 768 190.4 766 190.4 764 190.7 762 191.0 760 190.6 758 190.5 756 190.3 754 190.1 752 190.3 750 190.3 748 190.6 746 190.4 744 190.2 742 190.7 740 190.3 738 190.5 736 190.1 734 190.1 732 190.3 730 190.5 728 190.6 726 189.4 724 189.4 722 189.4 720 189.4 718 189.4 716 189.4 714 189.4 712 189.4 710 189.4 708 189.4 706 189.4 704 189.4 702 189.4 700 190.8 698 191.3 696 190.5 694 190.5 692 191.1 690 190.9 688 190.5 686 190.8 684 191.1 682 191.3 680 190.5 678 190.8 676 190.2 674 190.3 672 190.5 670 190.8 668 190.4 666 190.7 664 190.8 662 190.6 660 190.8 658 190.6 656 190.4 654 190.5 652 190.6 650 189.4 648 189.4 646 189.4 644 189.4 642 189.4 640 189.4 638 189.4 636 189.4 634 189.4 632 189.4 630 189.4 628 189.4 626 189.4 624 189.4 622 189.4 620 189.4 618 190.3 616 191.0 614 191.2 612 190.3 610 190.7 608 191.2 606 191.4 604 191.2 602 190.9 600 191.1 598 191.2 596 190.6 594 191.0 592 191.4 590 189.4 588 189.4 586 189.4 584 189.4 582 189.4 580 189.4 578 189.4 576 189.4 574 189.4 572 189.4 570 189.4 568 189.4 566 189.4 564 189.4 562 189.4 560 189.4 558 189.4 556 189.4 554 189.4 552 189.4 550 189.4 548 189.4 546 189.4 544 189.4 542 189.4 540 190.3 538 191.2 536 191.0 534 190.7 532 190.7 530 190.8 528 190.9 526 191.1 524 190.4 522 190.4 520 190.9 518 191.3 516 191.2 514 190.5 512 190.9 510 191.2 508 189.4 506 189.4 504 189.4 502 189.4 500 189.4 498 189.4 496 189.4 494 189.4 492 189.4 490 189.4 488 189.4 486 189.4 484 189.4 482 189.4 480 189.4 478 189.4 476 189.4 474 189.4 472 189.4 470 189.4 468 189.4 466 189.4 464 189.4 462 189.4 460 189.4 458 189.4 456 189.4 454 189.4 452 189.4 450 189.4 448 189.4 446 189.4 444 189.4 442 189.4 440 189.4 438 189.4 436 189.4 434 190.5 432 191.0 430 190.9 428 190.7 426 190.7 424 190.2 422 190.8 420 190.9 418 190.5 416 190.8 414 191.1 412 191.0 410 190.9 408 190.3 406 190.4 404 190.7 402 191.1 400 191.2 398 190.9 396 190.9 394 191.3 392 191.4 390 191.2 388 191.3 386 190.7 384 191.3 382 190.9 380 190.5 378 190.9 376 191.2 374 191.2 372 191.0 370 190.3 368 190.5 366 190.7 364 190.8 362 190.2 360 190.4 358 190.8 356 191.0 354 189.4 352 189.4 350 189.4 348 189.4 346 189.4 344 189.4 342 190.3 340 190.2 338 190.4 336 190.6 334 190.8 332 190.5 330 190.7 328 190.6 326 190.5 324 190.2 322 190.1 320 190.5 318 190.7 316 191.0 314 189.4 312 189.4 310 189.4 308 189.4 306 189.4 304 189.4 302 189.4 300 189.4 298 189.4 296 189.4 294 189.4 292 189.4 290 189.4 288 189.4 286 189.4 284 189.4 282 189.4 280 189.4 278 189.4 276 189.4 274 189.4 272 189.4 270 189.4 268 189.4 266 189.4 264 189.4 262 189.4 260 189.4 258 189.4 256 189.4 254 189.4 252 189.4 250 189.4Z" fill="#1773a0"/><rect x="250" y="201.7" width="743" height="1" fill="#1773a0" opacity="0.85"/><path d="M250 202.2 252 202.2 254 202.2 256 202.2 258 202.2 260 202.2 262 202.2 264 202.2 266 202.2 268 202.2 270 202.2 272 202.2 274 202.2 276 202.2 278 202.2 280 202.2 282 202.2 284 202.2 286 202.2 288 202.2 290 202.2 292 202.2 294 202.2 296 202.2 298 202.2 300 202.2 302 202.2 304 202.2 306 202.2 308 202.2 310 202.2 312 202.2 314 202.2 316 200.4 318 200.6 320 201.0 322 201.3 324 201.2 326 200.8 328 200.7 330 200.7 332 200.9 334 200.7 336 200.8 338 201.1 340 201.2 342 201.2 344 202.2 346 202.2 348 202.2 350 202.2 352 202.2 354 202.2 356 200.3 358 200.5 360 201.0 362 201.1 364 200.5 366 200.6 368 201.0 370 201.1 372 200.3 374 200.1 376 200.1 378 200.5 380 201.0 382 200.6 384 200.2 386 200.8 388 200.2 390 199.9 392 199.8 394 199.9 396 200.4 398 200.5 400 200.1 402 200.3 404 200.6 406 200.9 408 201.1 410 200.5 412 200.5 414 200.3 416 200.4 418 200.8 420 200.4 422 200.7 424 201.3 426 200.6 428 200.6 430 200.4 432 200.4 434 201.0 436 202.2 438 202.2 440 202.2 442 202.2 444 202.2 446 202.2 448 202.2 450 202.2 452 202.2 454 202.2 456 202.2 458 202.2 460 202.2 462 202.2 464 202.2 466 202.2 468 202.2 470 202.2 472 202.2 474 202.2 476 202.2 478 202.2 480 202.2 482 202.2 484 202.2 486 202.2 488 202.2 490 202.2 492 202.2 494 202.2 496 202.2 498 202.2 500 202.2 502 202.2 504 202.2 506 202.2 508 202.2 510 200.1 512 200.4 514 200.9 516 200.0 518 199.9 520 200.5 522 201.1 524 201.1 526 200.1 528 200.4 530 200.5 532 200.6 534 200.6 536 200.4 538 200.2 540 201.2 542 202.2 544 202.2 546 202.2 548 202.2 550 202.2 552 202.2 554 202.2 556 202.2 558 202.2 560 202.2 562 202.2 564 202.2 566 202.2 568 202.2 570 202.2 572 202.2 574 202.2 576 202.2 578 202.2 580 202.2 582 202.2 584 202.2 586 202.2 588 202.2 590 202.2 592 200.0 594 200.3 596 200.8 598 200.1 600 200.3 602 200.4 604 200.2 606 199.9 608 200.2 610 200.7 612 201.1 614 200.2 616 200.3 618 201.1 620 202.2 622 202.2 624 202.2 626 202.2 628 202.2 630 202.2 632 202.2 634 202.2 636 202.2 638 202.2 640 202.2 642 202.2 644 202.2 646 202.2 648 202.2 650 202.2 652 200.8 654 200.9 656 201.0 658 200.7 660 200.6 662 200.7 664 200.6 666 200.6 668 201.0 670 200.6 672 200.8 674 201.1 676 201.2 678 200.7 680 200.9 682 200.0 684 200.2 686 200.6 688 200.9 690 200.4 692 200.1 694 201.0 696 201.0 698 200.0 700 200.6 702 202.2 704 202.2 706 202.2 708 202.2 710 202.2 712 202.2 714 202.2 716 202.2 718 202.2 720 202.2 722 202.2 724 202.2 726 202.2 728 200.8 730 200.9 732 201.1 734 201.4 736 201.4 738 200.9 740 201.2 742 200.7 744 201.3 746 201.0 748 200.8 750 201.1 752 201.1 754 201.3 756 201.0 758 201.0 760 200.7 762 200.4 764 200.7 766 201.0 768 201.1 770 200.3 772 200.9 774 200.2 776 200.5 778 200.6 780 200.4 782 200.5 784 200.8 786 199.7 788 200.1 790 200.7 792 201.0 794 200.6 796 200.3 798 200.0 800 200.0 802 199.7 804 200.2 806 200.1 808 200.7 810 200.7 812 200.8 814 201.2 816 200.5 818 201.1 820 200.8 822 200.6 824 200.8 826 201.2 828 200.7 830 201.1 832 202.2 834 202.2 836 202.2 838 202.2 840 202.2 842 202.2 844 202.2 846 202.2 848 202.2 850 202.2 852 202.2 854 202.2 856 202.2 858 202.2 860 200.6 862 200.6 864 201.0 866 201.2 868 201.0 870 201.2 872 201.2 874 201.2 876 201.3 878 200.6 880 200.7 882 200.6 884 201.1 886 200.7 888 201.0 890 201.0 892 201.2 894 200.2 896 200.4 898 200.6 900 201.0 902 200.3 904 200.5 906 202.2 908 202.2 910 202.2 912 202.2 914 202.2 916 202.2 918 202.2 920 202.2 922 202.2 924 202.2 926 202.2 928 202.2 930 202.2 932 202.2 934 202.2 936 202.2 938 202.2 940 202.2 942 200.6 944 200.7 946 200.8 948 200.5 950 200.6 952 201.0 954 200.5 956 200.6 958 200.9 960 200.6 962 200.6 964 200.3 966 200.6 968 201.1 970 200.5 972 200.2 974 200.8 976 200.4 978 200.6 980 200.3 982 200.4 984 200.6 986 200.9 988 200.6 990 200.8 992 201.1 992 203.2 990 203.4 988 203.5 986 203.3 984 203.6 982 203.8 980 203.8 978 203.6 976 203.7 974 203.4 972 203.9 970 203.7 968 203.1 966 203.6 964 203.9 962 203.6 960 203.5 958 203.3 956 203.5 954 203.7 952 203.2 950 203.6 948 203.7 946 203.4 944 203.5 942 203.6 940 202.2 938 202.2 936 202.2 934 202.2 932 202.2 930 202.2 928 202.2 926 202.2 924 202.2 922 202.2 920 202.2 918 202.2 916 202.2 914 202.2 912 202.2 910 202.2 908 202.2 906 202.2 904 203.7 902 203.8 900 203.2 898 203.6 896 203.7 894 203.9 892 203.0 890 203.2 888 203.2 886 203.5 884 203.2 882 203.6 880 203.5 878 203.5 876 202.9 874 203.0 872 203.0 870 203.1 868 203.2 866 203.1 864 203.2 862 203.6 860 203.5 858 202.2 856 202.2 854 202.2 852 202.2 850 202.2 848 202.2 846 202.2 844 202.2 842 202.2 840 202.2 838 202.2 836 202.2 834 202.2 832 202.2 830 203.2 828 203.5 826 203.0 824 203.4 822 203.6 820 203.3 818 203.2 816 203.7 814 203.1 812 203.4 810 203.5 808 203.5 806 204.0 804 203.9 802 204.3 800 204.0 798 204.1 796 203.8 794 203.6 792 203.3 790 203.5 788 204.0 786 204.3 784 203.4 782 203.7 780 203.7 778 203.6 776 203.7 774 203.9 772 203.3 770 203.9 768 203.1 766 203.3 764 203.5 762 203.7 760 203.4 758 203.2 756 203.2 754 203.0 752 203.1 750 203.1 748 203.4 746 203.2 744 202.9 742 203.4 740 203.1 738 203.3 736 202.9 734 202.9 732 203.2 730 203.3 728 203.4 726 202.2 724 202.2 722 202.2 720 202.2 718 202.2 716 202.2 714 202.2 712 202.2 710 202.2 708 202.2 706 202.2 704 202.2 702 202.2 700 203.5 698 204.1 696 203.2 694 203.3 692 204.0 690 203.7 688 203.3 686 203.6 684 203.9 682 204.1 680 203.3 678 203.5 676 203.0 674 203.1 672 203.4 670 203.6 668 203.2 666 203.6 664 203.6 662 203.5 660 203.6 658 203.5 656 203.2 654 203.3 652 203.4 650 202.2 648 202.2 646 202.2 644 202.2 642 202.2 640 202.2 638 202.2 636 202.2 634 202.2 632 202.2 630 202.2 628 202.2 626 202.2 624 202.2 622 202.2 620 202.2 618 203.2 616 203.8 614 203.9 612 203.1 610 203.5 608 203.9 606 204.1 604 203.9 602 203.7 600 203.8 598 203.9 596 203.4 594 203.8 592 204.1 590 202.2 588 202.2 586 202.2 584 202.2 582 202.2 580 202.2 578 202.2 576 202.2 574 202.2 572 202.2 570 202.2 568 202.2 566 202.2 564 202.2 562 202.2 560 202.2 558 202.2 556 202.2 554 202.2 552 202.2 550 202.2 548 202.2 546 202.2 544 202.2 542 202.2 540 203.1 538 203.9 536 203.8 534 203.6 532 203.6 530 203.7 528 203.7 526 204.0 524 203.2 522 203.2 520 203.7 518 204.1 516 204.1 514 203.3 512 203.7 510 204.0 508 202.2 506 202.2 504 202.2 502 202.2 500 202.2 498 202.2 496 202.2 494 202.2 492 202.2 490 202.2 488 202.2 486 202.2 484 202.2 482 202.2 480 202.2 478 202.2 476 202.2 474 202.2 472 202.2 470 202.2 468 202.2 466 202.2 464 202.2 462 202.2 460 202.2 458 202.2 456 202.2 454 202.2 452 202.2 450 202.2 448 202.2 446 202.2 444 202.2 442 202.2 440 202.2 438 202.2 436 202.2 434 203.2 432 203.7 430 203.7 428 203.5 426 203.6 424 203.0 422 203.5 420 203.7 418 203.4 416 203.7 414 203.9 412 203.7 410 203.7 408 203.1 406 203.3 404 203.5 402 203.8 400 204.0 398 203.6 396 203.7 394 204.1 392 204.2 390 204.2 388 203.9 386 203.4 384 203.9 382 203.6 380 203.2 378 203.7 376 204.0 374 204.0 372 203.8 370 203.2 368 203.3 366 203.6 364 203.6 362 203.1 360 203.2 358 203.6 356 203.8 354 202.2 352 202.2 350 202.2 348 202.2 346 202.2 344 202.2 342 203.1 340 203.0 338 203.2 336 203.4 334 203.5 332 203.3 330 203.5 328 203.5 326 203.4 324 203.0 322 203.0 320 203.2 318 203.5 316 203.7 314 202.2 312 202.2 310 202.2 308 202.2 306 202.2 304 202.2 302 202.2 300 202.2 298 202.2 296 202.2 294 202.2 292 202.2 290 202.2 288 202.2 286 202.2 284 202.2 282 202.2 280 202.2 278 202.2 276 202.2 274 202.2 272 202.2 270 202.2 268 202.2 266 202.2 264 202.2 262 202.2 260 202.2 258 202.2 256 202.2 254 202.2 252 202.2 250 202.2Z" fill="#1773a0"/><rect x="420" y="212.8" width="573" height="40.7" rx="1.8" fill="#a6cd56"/><path d="M420 214.6 Q420 212.8 421.8 212.8 L991.2 212.8 Q993 212.8 993 214.6 L993 224.9 L420 224.9 Z" fill="#92b449"/><rect x="420" y="249" width="573" height="3.5" fill="#ffffff" opacity="0.05"/><rect x="420" y="231.9" width="573" height="1" fill="#7b9a3e" opacity="0.85"/><path d="M420 231.1 422 231.2 424 231.2 426 230.9 428 230.8 430 230.8 432 230.6 434 230.9 436 231.0 438 231.2 440 231.0 442 230.7 444 230.5 446 230.1 448 229.9 450 230.0 452 230.5 454 230.5 456 230.7 458 231.0 460 230.8 462 230.4 464 230.1 466 230.2 468 230.2 470 230.4 472 230.8 474 231.1 476 231.3 478 231.0 480 230.9 482 230.7 484 230.7 486 230.9 488 231.0 490 231.3 492 231.3 494 231.3 496 231.3 498 231.5 500 231.2 502 231.5 504 231.4 506 231.3 508 231.2 510 231.1 512 231.4 514 231.2 516 231.2 518 231.3 520 231.4 522 231.3 524 231.1 526 231.1 528 231.2 530 231.2 532 231.4 534 231.1 536 231.2 538 231.4 540 231.4 542 231.2 544 231.2 546 231.5 548 231.4 550 231.3 552 231.1 554 231.3 556 231.1 558 231.3 560 231.2 562 231.2 564 231.1 566 231.2 568 231.1 570 231.3 572 231.2 574 230.9 576 230.9 578 230.8 580 230.3 582 230.3 584 230.4 586 230.7 588 231.0 590 230.8 592 230.9 594 230.5 596 230.3 598 230.0 600 230.1 602 230.2 604 230.5 606 230.7 608 231.0 610 230.7 612 230.4 614 230.4 616 230.5 618 230.2 620 230.4 622 230.8 624 230.8 626 231.3 628 231.2 630 230.9 632 231.2 634 231.0 636 231.4 638 231.3 640 231.1 642 231.2 644 231.2 646 231.3 648 231.5 650 231.5 652 231.5 654 231.3 656 231.2 658 231.3 660 231.6 662 231.3 664 231.2 666 231.4 668 231.2 670 231.1 672 231.4 674 231.3 676 231.1 678 231.2 680 231.2 682 231.3 684 231.3 686 231.3 688 231.5 690 231.2 692 231.4 694 231.3 696 231.4 698 231.5 700 231.2 702 231.2 704 231.1 706 231.2 708 231.3 710 231.1 712 231.1 714 231.1 716 231.0 718 231.2 720 231.1 722 231.0 724 230.8 726 230.4 728 230.5 730 230.3 732 230.4 734 230.3 736 230.3 738 230.7 740 231.0 742 230.9 744 230.5 746 230.4 748 229.9 750 230.0 752 230.0 754 230.3 756 230.8 758 231.2 760 231.2 762 231.1 764 230.6 766 230.5 768 230.6 770 230.6 772 231.0 774 230.9 776 231.2 778 231.2 780 231.2 782 231.3 784 231.3 786 231.4 788 231.3 790 231.4 792 231.2 794 231.5 796 231.2 798 231.3 800 231.2 802 231.4 804 231.1 806 231.2 808 231.2 810 231.2 812 231.2 814 231.3 816 231.2 818 231.2 820 231.2 822 231.4 824 231.2 826 231.1 828 231.1 830 231.2 832 231.3 834 231.2 836 231.2 838 231.2 840 231.3 842 231.5 844 231.3 846 231.3 848 231.2 850 231.2 852 231.2 854 231.4 856 231.1 858 231.4 860 231.1 862 230.7 864 230.7 866 230.7 868 230.9 870 231.2 872 231.3 874 230.8 876 230.5 878 230.1 880 230.0 882 230.1 884 230.2 886 230.2 888 230.8 890 231.1 892 231.2 894 230.7 896 230.1 898 230.3 900 230.3 902 230.2 904 230.5 906 230.6 908 230.9 910 231.1 912 231.0 914 230.6 916 230.8 918 231.1 920 231.0 922 230.9 924 231.2 926 231.2 928 231.2 930 231.4 932 231.5 934 231.4 936 231.1 938 231.2 940 231.1 942 231.3 944 231.3 946 231.4 948 231.3 950 231.2 952 231.3 954 231.1 956 231.3 958 231.4 960 231.4 962 231.3 964 231.4 966 231.3 968 231.2 970 231.2 972 231.5 974 231.2 976 231.1 978 231.4 980 231.1 982 231.5 984 231.3 986 231.5 988 231.3 990 231.3 992 231.2 992 233.4 990 233.4 988 233.3 986 233.2 984 233.3 982 233.1 980 233.5 978 233.2 976 233.5 974 233.4 972 233.2 970 233.4 968 233.4 966 233.4 964 233.3 962 233.3 960 233.3 958 233.3 956 233.4 954 233.5 952 233.3 950 233.4 948 233.3 946 233.2 944 233.4 942 233.3 940 233.5 938 233.5 936 233.5 934 233.3 932 233.1 930 233.3 928 233.4 926 233.4 924 233.4 922 233.7 920 233.6 918 233.5 916 233.8 914 233.9 912 233.6 910 233.5 908 233.7 906 234.0 904 234.0 902 234.2 900 234.2 898 234.2 896 234.4 894 233.8 892 233.4 890 233.5 888 233.8 886 234.3 884 234.3 882 234.4 880 234.4 878 234.3 876 234.0 874 233.7 872 233.3 870 233.4 868 233.7 866 233.8 864 233.8 862 233.8 860 233.5 858 233.3 856 233.5 854 233.3 852 233.4 850 233.4 848 233.4 846 233.3 844 233.4 842 233.2 840 233.3 838 233.4 836 233.4 834 233.5 832 233.3 830 233.5 828 233.5 826 233.5 824 233.4 822 233.3 820 233.5 818 233.4 816 233.4 814 233.3 812 233.5 810 233.4 808 233.4 806 233.4 804 233.5 802 233.2 800 233.4 798 233.4 796 233.4 794 233.2 792 233.4 790 233.3 788 233.4 786 233.3 784 233.4 782 233.4 780 233.4 778 233.4 776 233.4 774 233.7 772 233.6 770 234.0 768 233.9 766 234.1 764 234.0 762 233.5 760 233.4 758 233.4 756 233.7 754 234.2 752 234.4 750 234.4 748 234.5 746 234.1 744 234.0 742 233.7 740 233.6 738 233.8 736 234.2 734 234.2 732 234.1 730 234.2 728 234.0 726 234.1 724 233.7 722 233.6 720 233.5 718 233.4 716 233.6 714 233.5 712 233.5 710 233.5 708 233.3 706 233.4 704 233.5 702 233.4 700 233.5 698 233.1 696 233.3 694 233.4 692 233.2 690 233.4 688 233.2 686 233.4 684 233.4 682 233.4 680 233.4 678 233.5 676 233.5 674 233.3 672 233.3 670 233.5 668 233.4 666 233.3 664 233.4 662 233.3 660 233.1 658 233.4 656 233.4 654 233.3 652 233.2 650 233.2 648 233.1 646 233.3 644 233.4 642 233.4 640 233.5 638 233.4 636 233.2 634 233.6 632 233.5 630 233.7 628 233.4 626 233.4 624 233.8 622 233.8 620 234.1 618 234.2 616 234.0 614 234.1 612 234.1 610 233.9 608 233.6 606 233.8 604 234.0 602 234.2 600 234.4 598 234.4 596 234.2 594 234.0 592 233.7 590 233.8 588 233.6 586 233.9 584 234.1 582 234.2 580 234.2 578 233.8 576 233.7 574 233.6 572 233.4 570 233.4 568 233.5 566 233.4 564 233.5 562 233.4 560 233.4 558 233.3 556 233.5 554 233.4 552 233.5 550 233.4 548 233.3 546 233.2 544 233.4 542 233.4 540 233.2 538 233.3 536 233.4 534 233.5 532 233.2 530 233.5 528 233.4 526 233.5 524 233.5 522 233.3 520 233.3 518 233.3 516 233.5 514 233.4 512 233.3 510 233.5 508 233.4 506 233.4 504 233.3 502 233.2 500 233.4 498 233.2 496 233.3 494 233.4 492 233.4 490 233.3 488 233.6 486 233.7 484 233.9 482 233.8 480 233.7 478 233.6 476 233.4 474 233.5 472 233.7 470 234.1 468 234.3 466 234.3 464 234.3 462 234.1 460 233.8 458 233.6 456 233.8 454 234.0 452 234.0 450 234.5 448 234.5 446 234.3 444 234.1 442 233.8 440 233.6 438 233.5 436 233.6 434 233.7 432 233.9 430 233.8 428 233.7 426 233.7 424 233.4 422 233.4 420 233.5Z" fill="#7b9a3e"/><rect x="420" y="244.7" width="573" height="1" fill="#7b9a3e" opacity="0.85"/><path d="M420 243.9 422 244.0 424 244.0 426 243.7 428 243.7 430 243.6 432 243.5 434 243.7 436 243.7 438 243.9 440 243.8 442 243.5 444 243.3 446 242.8 448 242.8 450 242.8 452 243.3 454 243.3 456 243.6 458 243.7 460 243.6 462 243.3 464 242.8 466 242.8 468 243.0 470 243.1 472 243.5 474 243.9 476 244.0 478 243.8 480 243.7 482 243.6 484 243.5 486 243.6 488 243.8 490 244.1 492 244.1 494 244.1 496 244.1 498 244.3 500 244.0 502 244.2 504 244.1 506 244.0 508 244.0 510 243.9 512 244.1 514 244.1 516 244.0 518 244.1 520 244.2 522 244.1 524 243.9 526 243.9 528 244.0 530 244.0 532 244.3 534 243.9 536 244.0 538 244.1 540 244.2 542 243.9 544 244.0 546 244.3 548 244.1 550 244.1 552 243.9 554 244.0 556 244.0 558 244.1 560 243.9 562 244.1 564 244.0 566 243.9 568 243.9 570 244.0 572 244.0 574 243.8 576 243.7 578 243.7 580 243.1 582 243.1 584 243.3 586 243.5 588 243.9 590 243.6 592 243.7 594 243.3 596 242.9 598 243.0 600 243.0 602 243.0 604 243.4 606 243.6 608 243.9 610 243.5 612 243.3 614 243.3 616 243.2 618 243.2 620 243.2 622 243.6 624 243.6 626 244.0 628 244.0 630 243.7 632 244.0 634 243.8 636 244.1 638 244.1 640 244.0 642 244.0 644 244.1 646 244.1 648 244.3 650 244.2 652 244.2 654 244.1 656 244.0 658 244.0 660 244.3 662 244.2 664 244.0 666 244.1 668 243.9 670 244.0 672 244.2 674 244.1 676 244.0 678 243.9 680 244.1 682 244.1 684 244.1 686 244.0 688 244.2 690 244.1 692 244.2 694 244.1 696 244.2 698 244.3 700 243.9 702 243.9 704 244.0 706 244.1 708 244.1 710 244.0 712 243.8 714 243.8 716 243.8 718 244.1 720 243.9 722 243.7 724 243.6 726 243.2 728 243.2 730 243.0 732 243.0 734 243.1 736 243.1 738 243.6 740 243.8 742 243.7 744 243.4 746 243.1 748 242.9 750 242.9 752 242.8 754 243.0 756 243.7 758 243.9 760 244.0 762 243.9 764 243.4 766 243.3 768 243.5 770 243.4 772 243.7 774 243.8 776 244.0 778 244.0 780 244.1 782 244.1 784 244.1 786 244.2 788 244.0 790 244.2 792 244.0 794 244.3 796 243.9 798 244.1 800 244.1 802 244.2 804 243.9 806 244.0 808 244.0 810 244.0 812 243.9 814 244.1 816 244.0 818 243.9 820 243.9 822 244.1 824 244.0 826 243.9 828 243.9 830 243.9 832 244.1 834 244.0 836 244.0 838 244.0 840 244.0 842 244.3 844 244.0 846 244.1 848 244.0 850 244.0 852 244.0 854 244.2 856 243.8 858 244.1 860 243.8 862 243.7 864 243.6 866 243.6 868 243.7 870 243.9 872 244.1 874 243.6 876 243.2 878 243.1 880 243.0 882 242.8 884 242.8 886 242.9 888 243.5 890 243.8 892 244.0 894 243.4 896 242.9 898 243.0 900 243.0 902 242.9 904 243.3 906 243.4 908 243.8 910 243.9 912 243.7 914 243.6 916 243.6 918 243.9 920 243.8 922 243.8 924 244.0 926 244.0 928 244.0 930 244.1 932 244.4 934 244.2 936 243.9 938 244.1 940 243.9 942 244.1 944 244.1 946 244.2 948 244.1 950 244.0 952 244.2 954 244.0 956 244.0 958 244.2 960 244.1 962 244.2 964 244.1 966 244.1 968 244.1 970 244.0 972 244.3 974 244.1 976 243.9 978 244.2 980 243.9 982 244.3 984 244.1 986 244.3 988 244.1 990 244.1 992 244.0 992 246.2 990 246.1 988 246.2 986 246.0 984 246.1 982 245.9 980 246.3 978 246.1 976 246.3 974 246.1 972 246.0 970 246.2 968 246.2 966 246.2 964 246.1 962 246.1 960 246.1 958 246.0 956 246.2 954 246.3 952 246.1 950 246.2 948 246.2 946 246.0 944 246.2 942 246.1 940 246.3 938 246.2 936 246.3 934 246.1 932 245.9 930 246.2 928 246.2 926 246.2 924 246.2 922 246.4 920 246.4 918 246.3 916 246.6 914 246.6 912 246.5 910 246.3 908 246.4 906 246.8 904 246.8 902 247.2 900 247.0 898 247.0 896 247.1 894 246.7 892 246.2 890 246.4 888 246.7 886 247.2 884 247.3 882 247.2 880 247.1 878 247.0 876 246.9 874 246.6 872 246.2 870 246.3 868 246.5 866 246.6 864 246.6 862 246.5 860 246.4 858 246.1 856 246.4 854 246.0 852 246.3 850 246.3 848 246.2 846 246.1 844 246.2 842 246.0 840 246.2 838 246.2 836 246.2 834 246.2 832 246.1 830 246.3 828 246.3 826 246.3 824 246.2 822 246.1 820 246.3 818 246.3 816 246.2 814 246.2 812 246.3 810 246.2 808 246.2 806 246.2 804 246.3 802 246.0 800 246.2 798 246.1 796 246.3 794 246.0 792 246.2 790 246.1 788 246.2 786 246.1 784 246.1 782 246.2 780 246.2 778 246.2 776 246.2 774 246.4 772 246.4 770 246.7 768 246.7 766 246.8 764 246.7 762 246.3 760 246.2 758 246.3 756 246.5 754 247.0 752 247.2 750 247.1 748 247.2 746 247.0 744 246.8 742 246.5 740 246.3 738 246.6 736 247.0 734 247.0 732 247.0 730 247.1 728 246.9 726 246.9 724 246.6 722 246.5 720 246.3 718 246.1 716 246.4 714 246.4 712 246.4 710 246.2 708 246.2 706 246.2 704 246.2 702 246.3 700 246.3 698 245.9 696 246.0 694 246.2 692 246.1 690 246.2 688 246.0 686 246.2 684 246.2 682 246.1 680 246.2 678 246.3 676 246.2 674 246.1 672 246.1 670 246.2 668 246.3 666 246.1 664 246.2 662 246.1 660 246.0 658 246.2 656 246.2 654 246.1 652 246.0 650 246.0 648 245.9 646 246.1 644 246.1 642 246.2 640 246.2 638 246.1 636 246.1 634 246.4 632 246.2 630 246.4 628 246.3 626 246.2 624 246.5 622 246.5 620 246.9 618 246.9 616 246.9 614 246.8 612 246.8 610 246.7 608 246.3 606 246.6 604 246.7 602 247.1 600 247.1 598 247.1 596 247.1 594 246.8 592 246.5 590 246.6 588 246.3 586 246.7 584 246.8 582 247.0 580 246.9 578 246.5 576 246.4 574 246.4 572 246.2 570 246.2 568 246.3 566 246.3 564 246.2 562 246.1 560 246.3 558 246.2 556 246.2 554 246.2 552 246.3 550 246.1 548 246.1 546 246.0 544 246.2 542 246.3 540 246.1 538 246.1 536 246.3 534 246.3 532 246.0 530 246.2 528 246.2 526 246.3 524 246.3 522 246.1 520 246.0 518 246.1 516 246.3 514 246.1 512 246.1 510 246.3 508 246.2 506 246.2 504 246.1 502 246.0 500 246.2 498 246.0 496 246.2 494 246.1 492 246.1 490 246.1 488 246.4 486 246.6 484 246.6 482 246.6 480 246.5 478 246.4 476 246.2 474 246.3 472 246.6 470 247.0 468 247.0 466 247.3 464 247.2 462 246.9 460 246.6 458 246.5 456 246.5 454 246.8 452 246.8 450 247.3 448 247.2 446 247.3 444 246.9 442 246.7 440 246.4 438 246.3 436 246.4 434 246.5 432 246.7 430 246.6 428 246.5 426 246.5 424 246.2 422 246.2 420 246.3Z" fill="#7b9a3e"/><rect x="250" y="255.8" width="743" height="40.7" rx="1.8" fill="#ddb84b"/><path d="M250 257.6 Q250 255.8 251.8 255.8 L991.2 255.8 Q993 255.8 993 257.6 L993 267.9 L250 267.9 Z" fill="#c7a23f"/><rect x="250" y="292" width="743" height="3.5" fill="#ffffff" opacity="0.05"/><rect x="250" y="274.9" width="743" height="1" fill="#a68839" opacity="0.85"/><path d="M250 274.5 252 274.2 254 274.2 256 274.1 258 273.8 260 273.8 262 273.5 264 273.7 266 273.7 268 273.7 270 273.4 272 273.6 274 273.5 276 273.7 278 273.7 280 273.8 282 273.9 284 274.2 286 274.3 288 274.4 290 273.7 292 273.4 294 273.5 296 273.5 298 273.4 300 273.4 302 273.8 304 274.3 306 275.4 308 275.4 310 275.4 312 275.4 314 275.4 316 275.4 318 275.4 320 275.4 322 275.4 324 275.4 326 275.4 328 275.4 330 275.4 332 275.4 334 275.4 336 275.4 338 275.4 340 275.4 342 275.4 344 275.4 346 275.4 348 275.4 350 275.4 352 275.4 354 275.4 356 275.4 358 275.4 360 275.4 362 275.4 364 275.4 366 275.4 368 275.4 370 275.4 372 275.4 374 275.4 376 275.4 378 275.4 380 275.4 382 275.4 384 275.4 386 275.4 388 275.4 390 275.4 392 275.4 394 275.4 396 275.4 398 275.4 400 275.4 402 275.4 404 275.4 406 275.4 408 275.4 410 275.4 412 275.4 414 275.4 416 275.4 418 275.4 420 275.4 422 275.4 424 275.4 426 275.4 428 275.4 430 275.4 432 275.4 434 275.4 436 275.4 438 275.4 440 275.4 442 275.4 444 275.4 446 274.4 448 274.0 450 273.8 452 273.8 454 273.6 456 273.9 458 274.1 460 274.3 462 275.4 464 275.4 466 275.4 468 275.4 470 275.4 472 275.4 474 275.4 476 275.4 478 275.4 480 275.4 482 275.4 484 275.4 486 275.4 488 275.4 490 275.4 492 275.4 494 275.4 496 275.4 498 275.4 500 275.4 502 275.4 504 275.4 506 275.4 508 275.4 510 274.5 512 274.1 514 273.9 516 273.7 518 273.7 520 273.6 522 274.0 524 274.3 526 275.4 528 275.4 530 275.4 532 275.4 534 275.4 536 275.4 538 275.4 540 275.4 542 275.4 544 275.4 546 275.4 548 275.4 550 275.4 552 275.4 554 275.4 556 275.4 558 275.4 560 275.4 562 275.4 564 275.4 566 275.4 568 275.4 570 275.4 572 275.4 574 275.4 576 275.4 578 275.4 580 275.4 582 275.4 584 275.4 586 275.4 588 275.4 590 275.4 592 275.4 594 275.4 596 275.4 598 275.4 600 275.4 602 275.4 604 275.4 606 275.4 608 275.4 610 275.4 612 274.7 614 274.3 616 274.2 618 274.1 620 273.9 622 273.7 624 273.8 626 273.9 628 273.7 630 274.0 632 274.3 634 274.2 636 274.6 638 274.6 640 274.5 642 274.4 644 274.3 646 274.2 648 274.0 650 274.0 652 273.9 654 274.0 656 273.9 658 274.1 660 274.2 662 274.1 664 274.4 666 274.4 668 274.6 670 275.4 672 275.4 674 275.4 676 275.4 678 275.4 680 275.4 682 275.4 684 275.4 686 275.4 688 275.4 690 275.4 692 275.4 694 275.4 696 275.4 698 275.4 700 275.4 702 275.4 704 274.7 706 274.4 708 274.1 710 274.2 712 273.9 714 274.0 716 274.0 718 274.1 720 274.3 722 274.4 724 274.6 726 274.1 728 274.1 730 273.8 732 273.8 734 273.6 736 273.6 738 273.4 740 273.2 742 273.3 744 273.2 746 273.2 748 273.8 750 273.9 752 273.9 754 274.2 756 274.5 758 274.2 760 274.1 762 274.2 764 274.1 766 274.0 768 273.8 770 274.1 772 274.0 774 274.3 776 274.4 778 274.6 780 275.4 782 275.4 784 275.4 786 275.4 788 275.4 790 275.4 792 275.4 794 275.4 796 275.4 798 275.4 800 275.4 802 275.4 804 275.4 806 275.4 808 275.4 810 275.4 812 275.4 814 275.4 816 275.4 818 275.4 820 275.4 822 274.3 824 274.1 826 274.2 828 273.9 830 273.7 832 273.7 834 273.6 836 273.7 838 273.6 840 273.7 842 273.6 844 273.9 846 274.1 848 274.4 850 274.4 852 275.4 854 275.4 856 275.4 858 275.4 860 275.4 862 275.4 864 275.4 866 275.4 868 275.4 870 275.4 872 275.4 874 275.4 876 275.4 878 275.4 880 275.4 882 275.4 884 275.4 886 275.4 888 275.4 890 274.4 892 274.0 894 273.6 896 273.4 898 273.3 900 273.4 902 273.3 904 273.7 906 274.0 908 274.2 910 275.4 912 275.4 914 275.4 916 275.4 918 275.4 920 275.4 922 275.4 924 275.4 926 275.4 928 275.4 930 275.4 932 275.4 934 275.4 936 275.4 938 275.4 940 275.4 942 275.4 944 275.4 946 274.4 948 274.2 950 274.0 952 273.6 954 273.3 956 273.4 958 273.3 960 273.7 962 273.8 964 274.1 966 275.4 968 275.4 970 275.4 972 275.4 974 275.4 976 275.4 978 275.4 980 274.5 982 274.5 984 274.3 986 274.2 988 274.0 990 274.0 992 274.1 992 276.5 990 276.6 988 276.6 986 276.4 984 276.4 982 276.2 980 276.2 978 275.4 976 275.4 974 275.4 972 275.4 970 275.4 968 275.4 966 275.4 964 276.5 962 276.8 960 276.9 958 277.2 956 277.1 954 277.1 952 276.9 950 276.6 948 276.4 946 276.3 944 275.4 942 275.4 940 275.4 938 275.4 936 275.4 934 275.4 932 275.4 930 275.4 928 275.4 926 275.4 924 275.4 922 275.4 920 275.4 918 275.4 916 275.4 914 275.4 912 275.4 910 275.4 908 276.4 906 276.6 904 276.9 902 277.2 900 277.1 898 277.1 896 277.1 894 276.9 892 276.6 890 276.3 888 275.4 886 275.4 884 275.4 882 275.4 880 275.4 878 275.4 876 275.4 874 275.4 872 275.4 870 275.4 868 275.4 866 275.4 864 275.4 862 275.4 860 275.4 858 275.4 856 275.4 854 275.4 852 275.4 850 276.3 848 276.3 846 276.5 844 276.7 842 276.9 840 276.8 838 276.9 836 276.8 834 277.0 832 276.8 830 276.8 828 276.7 826 276.4 824 276.5 822 276.3 820 275.4 818 275.4 816 275.4 814 275.4 812 275.4 810 275.4 808 275.4 806 275.4 804 275.4 802 275.4 800 275.4 798 275.4 796 275.4 794 275.4 792 275.4 790 275.4 788 275.4 786 275.4 784 275.4 782 275.4 780 275.4 778 276.1 776 276.3 774 276.3 772 276.5 770 276.5 768 276.8 766 276.6 764 276.5 762 276.5 760 276.5 758 276.4 756 276.1 754 276.4 752 276.7 750 276.7 748 276.8 746 277.3 744 277.3 742 277.2 740 277.2 738 277.1 736 276.9 734 277.0 732 276.8 730 276.7 728 276.5 726 276.5 724 276.1 722 276.3 720 276.4 718 276.5 716 276.6 714 276.6 712 276.6 710 276.4 708 276.5 706 276.3 704 276.0 702 275.4 700 275.4 698 275.4 696 275.4 694 275.4 692 275.4 690 275.4 688 275.4 686 275.4 684 275.4 682 275.4 680 275.4 678 275.4 676 275.4 674 275.4 672 275.4 670 275.4 668 276.1 666 276.3 664 276.3 662 276.5 660 276.5 658 276.5 656 276.7 654 276.6 652 276.7 650 276.6 648 276.6 646 276.4 644 276.3 642 276.2 640 276.1 638 276.1 636 276.1 634 276.4 632 276.4 630 276.6 628 276.9 626 276.7 624 276.8 622 276.8 620 276.7 618 276.5 616 276.4 614 276.3 612 276.0 610 275.4 608 275.4 606 275.4 604 275.4 602 275.4 600 275.4 598 275.4 596 275.4 594 275.4 592 275.4 590 275.4 588 275.4 586 275.4 584 275.4 582 275.4 580 275.4 578 275.4 576 275.4 574 275.4 572 275.4 570 275.4 568 275.4 566 275.4 564 275.4 562 275.4 560 275.4 558 275.4 556 275.4 554 275.4 552 275.4 550 275.4 548 275.4 546 275.4 544 275.4 542 275.4 540 275.4 538 275.4 536 275.4 534 275.4 532 275.4 530 275.4 528 275.4 526 275.4 524 276.3 522 276.6 520 276.9 518 276.8 516 276.8 514 276.6 512 276.5 510 276.2 508 275.4 506 275.4 504 275.4 502 275.4 500 275.4 498 275.4 496 275.4 494 275.4 492 275.4 490 275.4 488 275.4 486 275.4 484 275.4 482 275.4 480 275.4 478 275.4 476 275.4 474 275.4 472 275.4 470 275.4 468 275.4 466 275.4 464 275.4 462 275.4 460 276.3 458 276.5 456 276.6 454 276.9 452 276.8 450 276.8 448 276.6 446 276.3 444 275.4 442 275.4 440 275.4 438 275.4 436 275.4 434 275.4 432 275.4 430 275.4 428 275.4 426 275.4 424 275.4 422 275.4 420 275.4 418 275.4 416 275.4 414 275.4 412 275.4 410 275.4 408 275.4 406 275.4 404 275.4 402 275.4 400 275.4 398 275.4 396 275.4 394 275.4 392 275.4 390 275.4 388 275.4 386 275.4 384 275.4 382 275.4 380 275.4 378 275.4 376 275.4 374 275.4 372 275.4 370 275.4 368 275.4 366 275.4 364 275.4 362 275.4 360 275.4 358 275.4 356 275.4 354 275.4 352 275.4 350 275.4 348 275.4 346 275.4 344 275.4 342 275.4 340 275.4 338 275.4 336 275.4 334 275.4 332 275.4 330 275.4 328 275.4 326 275.4 324 275.4 322 275.4 320 275.4 318 275.4 316 275.4 314 275.4 312 275.4 310 275.4 308 275.4 306 275.4 304 276.3 302 276.7 300 277.1 298 277.1 296 277.0 294 277.0 292 277.1 290 276.8 288 276.3 286 276.3 284 276.4 282 276.6 280 276.8 278 276.9 276 276.8 274 277.0 272 276.9 270 277.1 268 276.8 266 276.8 264 276.8 262 277.0 260 276.8 258 276.7 256 276.5 254 276.5 252 276.4 250 276.2Z" fill="#a68839"/><rect x="250" y="287.7" width="743" height="1" fill="#a68839" opacity="0.85"/><path d="M250 287.3 252 287.1 254 287.0 256 286.9 258 286.6 260 286.6 262 286.4 264 286.5 266 286.5 268 286.5 270 286.2 272 286.4 274 286.2 276 286.5 278 286.4 280 286.5 282 286.7 284 287.0 286 287.1 288 287.1 290 286.6 292 286.3 294 286.3 296 286.2 298 286.3 300 286.3 302 286.6 304 287.0 306 288.2 308 288.2 310 288.2 312 288.2 314 288.2 316 288.2 318 288.2 320 288.2 322 288.2 324 288.2 326 288.2 328 288.2 330 288.2 332 288.2 334 288.2 336 288.2 338 288.2 340 288.2 342 288.2 344 288.2 346 288.2 348 288.2 350 288.2 352 288.2 354 288.2 356 288.2 358 288.2 360 288.2 362 288.2 364 288.2 366 288.2 368 288.2 370 288.2 372 288.2 374 288.2 376 288.2 378 288.2 380 288.2 382 288.2 384 288.2 386 288.2 388 288.2 390 288.2 392 288.2 394 288.2 396 288.2 398 288.2 400 288.2 402 288.2 404 288.2 406 288.2 408 288.2 410 288.2 412 288.2 414 288.2 416 288.2 418 288.2 420 288.2 422 288.2 424 288.2 426 288.2 428 288.2 430 288.2 432 288.2 434 288.2 436 288.2 438 288.2 440 288.2 442 288.2 444 288.2 446 287.2 448 286.7 450 286.5 452 286.5 454 286.4 456 286.7 458 286.8 460 287.1 462 288.2 464 288.2 466 288.2 468 288.2 470 288.2 472 288.2 474 288.2 476 288.2 478 288.2 480 288.2 482 288.2 484 288.2 486 288.2 488 288.2 490 288.2 492 288.2 494 288.2 496 288.2 498 288.2 500 288.2 502 288.2 504 288.2 506 288.2 508 288.2 510 287.3 512 286.8 514 286.6 516 286.4 518 286.4 520 286.4 522 286.8 524 287.1 526 288.2 528 288.2 530 288.2 532 288.2 534 288.2 536 288.2 538 288.2 540 288.2 542 288.2 544 288.2 546 288.2 548 288.2 550 288.2 552 288.2 554 288.2 556 288.2 558 288.2 560 288.2 562 288.2 564 288.2 566 288.2 568 288.2 570 288.2 572 288.2 574 288.2 576 288.2 578 288.2 580 288.2 582 288.2 584 288.2 586 288.2 588 288.2 590 288.2 592 288.2 594 288.2 596 288.2 598 288.2 600 288.2 602 288.2 604 288.2 606 288.2 608 288.2 610 288.2 612 287.5 614 287.2 616 287.1 618 287.0 620 286.7 622 286.5 624 286.7 626 286.7 628 286.5 630 286.8 632 287.0 634 287.1 636 287.3 638 287.4 640 287.3 642 287.2 644 287.1 646 287.0 648 286.8 650 286.8 652 286.8 654 286.8 656 286.8 658 286.9 660 286.9 662 286.9 664 287.2 666 287.1 668 287.3 670 288.2 672 288.2 674 288.2 676 288.2 678 288.2 680 288.2 682 288.2 684 288.2 686 288.2 688 288.2 690 288.2 692 288.2 694 288.2 696 288.2 698 288.2 700 288.2 702 288.2 704 287.5 706 287.2 708 287.0 710 287.1 712 286.9 714 286.8 716 286.7 718 286.8 720 287.0 722 287.2 724 287.4 726 287.0 728 287.0 730 286.6 732 286.7 734 286.4 736 286.3 738 286.1 740 286.1 742 286.1 744 286.0 746 286.2 748 286.6 750 286.6 752 286.7 754 287.1 756 287.4 758 287.1 760 286.9 762 287.0 764 286.8 766 286.8 768 286.7 770 287.0 772 286.8 774 287.2 776 287.1 778 287.4 780 288.2 782 288.2 784 288.2 786 288.2 788 288.2 790 288.2 792 288.2 794 288.2 796 288.2 798 288.2 800 288.2 802 288.2 804 288.2 806 288.2 808 288.2 810 288.2 812 288.2 814 288.2 816 288.2 818 288.2 820 288.2 822 287.1 824 287.0 826 287.0 828 286.8 830 286.7 832 286.5 834 286.4 836 286.5 838 286.3 840 286.4 842 286.4 844 286.8 846 287.0 848 287.1 850 287.2 852 288.2 854 288.2 856 288.2 858 288.2 860 288.2 862 288.2 864 288.2 866 288.2 868 288.2 870 288.2 872 288.2 874 288.2 876 288.2 878 288.2 880 288.2 882 288.2 884 288.2 886 288.2 888 288.2 890 287.2 892 286.7 894 286.4 896 286.1 898 286.1 900 286.2 902 286.1 904 286.5 906 286.7 908 287.0 910 288.2 912 288.2 914 288.2 916 288.2 918 288.2 920 288.2 922 288.2 924 288.2 926 288.2 928 288.2 930 288.2 932 288.2 934 288.2 936 288.2 938 288.2 940 288.2 942 288.2 944 288.2 946 287.1 948 287.1 950 286.7 952 286.4 954 286.1 956 286.1 958 286.1 960 286.5 962 286.6 964 287.0 966 288.2 968 288.2 970 288.2 972 288.2 974 288.2 976 288.2 978 288.2 980 287.3 982 287.3 984 287.0 986 287.0 988 286.9 990 286.8 992 287.0 992 289.2 990 289.4 988 289.3 986 289.2 984 289.2 982 289.0 980 288.9 978 288.2 976 288.2 974 288.2 972 288.2 970 288.2 968 288.2 966 288.2 964 289.2 962 289.6 960 289.7 958 290.0 956 290.0 954 289.9 952 289.7 950 289.5 948 289.2 946 289.1 944 288.2 942 288.2 940 288.2 938 288.2 936 288.2 934 288.2 932 288.2 930 288.2 928 288.2 926 288.2 924 288.2 922 288.2 920 288.2 918 288.2 916 288.2 914 288.2 912 288.2 910 288.2 908 289.2 906 289.5 904 289.6 902 290.0 900 289.9 898 290.0 896 290.0 894 289.7 892 289.5 890 289.1 888 288.2 886 288.2 884 288.2 882 288.2 880 288.2 878 288.2 876 288.2 874 288.2 872 288.2 870 288.2 868 288.2 866 288.2 864 288.2 862 288.2 860 288.2 858 288.2 856 288.2 854 288.2 852 288.2 850 289.1 848 289.1 846 289.2 844 289.4 842 289.7 840 289.7 838 289.8 836 289.7 834 289.8 832 289.6 830 289.5 828 289.4 826 289.2 824 289.2 822 289.2 820 288.2 818 288.2 816 288.2 814 288.2 812 288.2 810 288.2 808 288.2 806 288.2 804 288.2 802 288.2 800 288.2 798 288.2 796 288.2 794 288.2 792 288.2 790 288.2 788 288.2 786 288.2 784 288.2 782 288.2 780 288.2 778 288.9 776 289.1 774 289.1 772 289.4 770 289.2 768 289.5 766 289.4 764 289.4 762 289.2 760 289.3 758 289.1 756 288.9 754 289.2 752 289.4 750 289.6 748 289.6 746 289.9 744 290.1 742 290.0 740 290.0 738 289.9 736 289.8 734 289.8 732 289.5 730 289.5 728 289.2 726 289.2 724 288.9 722 289.1 720 289.2 718 289.4 716 289.5 714 289.4 712 289.3 710 289.2 708 289.2 706 289.1 704 288.8 702 288.2 700 288.2 698 288.2 696 288.2 694 288.2 692 288.2 690 288.2 688 288.2 686 288.2 684 288.2 682 288.2 680 288.2 678 288.2 676 288.2 674 288.2 672 288.2 670 288.2 668 288.9 666 289.1 664 289.0 662 289.3 660 289.3 658 289.3 656 289.4 654 289.4 652 289.4 650 289.4 648 289.4 646 289.2 644 289.1 642 289.1 640 288.9 638 288.9 636 289.0 634 289.2 632 289.2 630 289.4 628 289.7 626 289.5 624 289.5 622 289.7 620 289.5 618 289.3 616 289.2 614 289.1 612 288.8 610 288.2 608 288.2 606 288.2 604 288.2 602 288.2 600 288.2 598 288.2 596 288.2 594 288.2 592 288.2 590 288.2 588 288.2 586 288.2 584 288.2 582 288.2 580 288.2 578 288.2 576 288.2 574 288.2 572 288.2 570 288.2 568 288.2 566 288.2 564 288.2 562 288.2 560 288.2 558 288.2 556 288.2 554 288.2 552 288.2 550 288.2 548 288.2 546 288.2 544 288.2 542 288.2 540 288.2 538 288.2 536 288.2 534 288.2 532 288.2 530 288.2 528 288.2 526 288.2 524 289.1 522 289.3 520 289.7 518 289.7 516 289.7 514 289.6 512 289.4 510 289.0 508 288.2 506 288.2 504 288.2 502 288.2 500 288.2 498 288.2 496 288.2 494 288.2 492 288.2 490 288.2 488 288.2 486 288.2 484 288.2 482 288.2 480 288.2 478 288.2 476 288.2 474 288.2 472 288.2 470 288.2 468 288.2 466 288.2 464 288.2 462 288.2 460 289.1 458 289.4 456 289.4 454 289.7 452 289.6 450 289.7 448 289.5 446 289.0 444 288.2 442 288.2 440 288.2 438 288.2 436 288.2 434 288.2 432 288.2 430 288.2 428 288.2 426 288.2 424 288.2 422 288.2 420 288.2 418 288.2 416 288.2 414 288.2 412 288.2 410 288.2 408 288.2 406 288.2 404 288.2 402 288.2 400 288.2 398 288.2 396 288.2 394 288.2 392 288.2 390 288.2 388 288.2 386 288.2 384 288.2 382 288.2 380 288.2 378 288.2 376 288.2 374 288.2 372 288.2 370 288.2 368 288.2 366 288.2 364 288.2 362 288.2 360 288.2 358 288.2 356 288.2 354 288.2 352 288.2 350 288.2 348 288.2 346 288.2 344 288.2 342 288.2 340 288.2 338 288.2 336 288.2 334 288.2 332 288.2 330 288.2 328 288.2 326 288.2 324 288.2 322 288.2 320 288.2 318 288.2 316 288.2 314 288.2 312 288.2 310 288.2 308 288.2 306 288.2 304 289.2 302 289.6 300 289.8 298 289.8 296 289.9 294 289.8 292 289.8 290 289.6 288 289.1 286 289.2 284 289.2 282 289.4 280 289.6 278 289.7 276 289.7 274 289.9 272 289.7 270 289.9 268 289.6 266 289.6 264 289.6 262 289.8 260 289.5 258 289.5 256 289.3 254 289.2 252 289.1 250 289.0Z" fill="#a68839"/><rect x="250" y="298.8" width="743" height="40.7" rx="1.8" fill="#ddb84b"/><path d="M250 300.6 Q250 298.8 251.8 298.8 L991.2 298.8 Q993 298.8 993 300.6 L993 310.9 L250 310.9 Z" fill="#c7a23f"/><rect x="250" y="335" width="743" height="3.5" fill="#ffffff" opacity="0.05"/><rect x="250" y="317.9" width="743" height="1" fill="#a68839" opacity="0.85"/><path d="M250 316.9 252 317.2 254 317.5 256 317.0 258 317.2 260 317.2 262 317.5 264 317.6 266 317.3 268 317.4 270 317.5 272 317.7 274 317.6 276 317.2 278 317.0 280 317.5 282 317.6 284 317.2 286 317.0 288 317.1 290 317.3 292 317.6 294 317.0 296 317.4 298 317.3 300 317.1 302 317.0 304 317.0 306 317.1 308 317.5 310 317.5 312 317.3 314 317.2 316 317.1 318 317.5 320 317.5 322 318.4 324 318.4 326 318.4 328 318.4 330 318.4 332 318.4 334 318.4 336 318.4 338 318.4 340 318.4 342 318.4 344 318.4 346 318.4 348 317.0 350 317.4 352 317.5 354 317.7 356 317.4 358 317.4 360 317.4 362 317.1 364 317.1 366 317.2 368 317.5 370 317.7 372 317.4 374 317.3 376 317.7 378 317.2 380 317.7 382 317.1 384 317.3 386 317.2 388 317.3 390 317.5 392 317.2 394 317.4 396 317.0 398 317.3 400 317.6 402 317.2 404 317.2 406 317.4 408 317.2 410 317.3 412 317.2 414 317.2 416 316.4 418 316.9 420 317.3 422 316.8 424 316.8 426 317.1 428 316.9 430 317.4 432 317.0 434 316.8 436 317.0 438 317.2 440 316.8 442 316.8 444 317.0 446 316.9 448 316.9 450 317.4 452 316.6 454 316.9 456 318.4 458 318.4 460 318.4 462 318.4 464 318.4 466 318.4 468 318.4 470 318.4 472 318.4 474 318.4 476 318.4 478 318.4 480 318.4 482 318.4 484 318.4 486 318.4 488 318.4 490 316.7 492 316.8 494 317.1 496 317.3 498 316.8 500 317.2 502 316.9 504 316.5 506 316.8 508 316.7 510 317.4 512 318.4 514 318.4 516 318.4 518 318.4 520 318.4 522 318.4 524 318.4 526 318.4 528 318.4 530 318.4 532 318.4 534 318.4 536 318.4 538 318.4 540 318.4 542 318.4 544 318.4 546 318.4 548 317.1 550 317.3 552 317.6 554 317.2 556 317.4 558 317.5 560 317.6 562 317.7 564 317.1 566 317.1 568 317.4 570 317.8 572 317.5 574 317.2 576 317.6 578 317.3 580 316.8 582 317.3 584 317.5 586 317.0 588 316.9 590 317.3 592 317.4 594 317.0 596 316.9 598 316.8 600 317.3 602 317.4 604 317.1 606 317.5 608 317.7 610 317.7 612 317.3 614 317.2 616 317.2 618 317.3 620 317.6 622 317.3 624 317.5 626 317.2 628 317.2 630 317.5 632 317.5 634 317.4 636 317.2 638 317.2 640 317.6 642 316.6 644 317.1 646 317.2 648 316.8 650 316.7 652 317.1 654 316.8 656 316.9 658 316.9 660 316.6 662 317.1 664 317.3 666 316.8 668 316.7 670 316.5 672 317.4 674 317.0 676 317.0 678 317.1 680 317.3 682 317.6 684 317.6 686 317.2 688 316.8 690 318.4 692 318.4 694 318.4 696 318.4 698 318.4 700 318.4 702 318.4 704 318.4 706 318.4 708 318.4 710 318.4 712 318.4 714 318.4 716 318.4 718 318.4 720 318.4 722 318.4 724 316.9 726 317.3 728 317.6 730 316.9 732 317.2 734 317.4 736 317.3 738 317.4 740 317.6 742 317.4 744 318.4 746 318.4 748 318.4 750 318.4 752 318.4 754 318.4 756 317.0 758 317.0 760 317.2 762 317.6 764 316.9 766 317.2 768 317.5 770 317.5 772 316.8 774 316.9 776 317.4 778 317.5 780 317.1 782 317.2 784 316.9 786 316.9 788 317.2 790 317.5 792 317.1 794 317.1 796 317.2 798 317.2 800 317.6 802 317.3 804 317.1 806 317.0 808 317.5 810 317.0 812 317.3 814 316.8 816 316.9 818 317.1 820 317.4 822 316.9 824 317.2 826 316.9 828 316.9 830 317.2 832 317.1 834 317.3 836 317.2 838 317.1 840 317.0 842 317.6 844 317.3 846 318.4 848 318.4 850 318.4 852 318.4 854 318.4 856 318.4 858 318.4 860 318.4 862 318.4 864 318.4 866 318.4 868 318.4 870 318.4 872 318.4 874 318.4 876 318.4 878 318.4 880 318.4 882 318.4 884 318.4 886 318.4 888 318.4 890 318.4 892 316.7 894 317.1 896 317.3 898 316.6 900 316.8 902 317.2 904 317.4 906 316.6 908 316.8 910 317.3 912 316.8 914 317.4 916 316.6 918 316.7 920 317.4 922 317.4 924 316.5 926 316.8 928 316.5 930 316.8 932 317.2 934 317.5 936 317.0 938 316.8 940 317.0 942 317.3 944 317.0 946 317.2 948 317.4 950 316.8 952 317.2 954 317.1 956 317.0 958 316.9 960 317.1 962 317.5 964 317.3 966 317.2 968 316.9 970 317.2 972 316.9 974 317.0 976 316.8 978 316.9 980 317.3 982 317.3 984 316.9 986 316.9 988 318.4 990 318.4 992 318.4 992 318.4 990 318.4 988 318.4 986 319.7 984 319.7 982 319.3 980 319.3 978 319.7 976 319.8 974 319.6 972 319.6 970 319.4 968 319.7 966 319.4 964 319.3 962 319.1 960 319.5 958 319.7 956 319.6 954 319.5 952 319.4 950 319.8 948 319.2 946 319.4 944 319.6 942 319.3 940 319.6 938 319.7 936 319.6 934 319.2 932 319.5 930 319.8 928 320.0 926 319.8 924 320.1 922 319.2 920 319.3 918 319.8 916 319.9 914 319.3 912 319.8 910 319.3 908 319.8 906 319.9 904 319.3 902 319.4 900 319.7 898 319.9 896 319.3 894 319.5 892 319.9 890 318.4 888 318.4 886 318.4 884 318.4 882 318.4 880 318.4 878 318.4 876 318.4 874 318.4 872 318.4 870 318.4 868 318.4 866 318.4 864 318.4 862 318.4 860 318.4 858 318.4 856 318.4 854 318.4 852 318.4 850 318.4 848 318.4 846 318.4 844 319.3 842 319.1 840 319.6 838 319.5 836 319.4 834 319.3 832 319.5 830 319.4 828 319.7 826 319.7 824 319.4 822 319.7 820 319.2 818 319.5 816 319.7 814 319.7 812 319.3 810 319.6 808 319.2 806 319.6 804 319.5 802 319.4 800 319.1 798 319.4 796 319.4 794 319.5 792 319.5 790 319.1 788 319.5 786 319.6 784 319.6 782 319.4 780 319.5 778 319.1 776 319.2 774 319.7 772 319.7 770 319.1 768 319.1 766 319.4 764 319.7 762 319.1 760 319.4 758 319.6 756 319.6 754 318.4 752 318.4 750 318.4 748 318.4 746 318.4 744 318.4 742 319.3 740 319.1 738 319.3 736 319.3 734 319.2 732 319.4 730 319.6 728 319.1 726 319.3 724 319.7 722 318.4 720 318.4 718 318.4 716 318.4 714 318.4 712 318.4 710 318.4 708 318.4 706 318.4 704 318.4 702 318.4 700 318.4 698 318.4 696 318.4 694 318.4 692 318.4 690 318.4 688 319.7 686 319.4 684 319.1 682 319.1 680 319.4 678 319.5 676 319.6 674 319.6 672 319.3 670 320.0 668 319.9 666 319.8 664 319.3 662 319.5 660 319.9 658 319.6 656 319.7 654 319.8 652 319.5 650 319.8 648 319.8 646 319.4 644 319.5 642 320.0 640 319.0 638 319.4 636 319.4 634 319.3 632 319.1 630 319.2 628 319.4 626 319.4 624 319.2 622 319.4 620 319.1 618 319.3 616 319.4 614 319.4 612 319.4 610 319.0 608 319.0 606 319.2 604 319.5 602 319.3 600 319.3 598 319.7 596 319.7 594 319.6 592 319.3 590 319.3 588 319.7 586 319.6 584 319.2 582 319.4 580 319.8 578 319.3 576 319.1 574 319.5 572 319.2 570 318.9 568 319.3 566 319.5 564 319.5 562 319.0 560 319.1 558 319.2 556 319.2 554 319.5 552 319.1 550 319.3 548 319.5 546 318.4 544 318.4 542 318.4 540 318.4 538 318.4 536 318.4 534 318.4 532 318.4 530 318.4 528 318.4 526 318.4 524 318.4 522 318.4 520 318.4 518 318.4 516 318.4 514 318.4 512 318.4 510 319.2 508 319.8 506 319.8 504 320.0 502 319.7 500 319.4 498 319.8 496 319.3 494 319.5 492 319.8 490 319.9 488 318.4 486 318.4 484 318.4 482 318.4 480 318.4 478 318.4 476 318.4 474 318.4 472 318.4 470 318.4 468 318.4 466 318.4 464 318.4 462 318.4 460 318.4 458 318.4 456 318.4 454 319.7 452 320.0 450 319.2 448 319.7 446 319.7 444 319.6 442 319.7 440 319.7 438 319.4 436 319.6 434 319.7 432 319.6 430 319.2 428 319.7 426 319.5 424 319.7 422 319.8 420 319.3 418 319.7 416 320.1 414 319.4 412 319.4 410 319.3 408 319.4 406 319.2 404 319.4 402 319.4 400 319.1 398 319.4 396 319.6 394 319.2 392 319.4 390 319.2 388 319.4 386 319.4 384 319.4 382 319.5 380 319.0 378 319.4 376 319.0 374 319.3 372 319.3 370 319.0 368 319.1 366 319.4 364 319.5 362 319.5 360 319.2 358 319.2 356 319.3 354 319.0 352 319.2 350 319.3 348 319.6 346 318.4 344 318.4 342 318.4 340 318.4 338 318.4 336 318.4 334 318.4 332 318.4 330 318.4 328 318.4 326 318.4 324 318.4 322 318.4 320 319.2 318 319.2 316 319.5 314 319.4 312 319.4 310 319.1 308 319.2 306 319.5 304 319.6 302 319.6 300 319.5 298 319.3 296 319.3 294 319.6 292 319.0 290 319.3 288 319.5 286 319.6 284 319.4 282 319.1 280 319.1 278 319.6 276 319.5 274 319.1 272 319.0 270 319.2 268 319.3 266 319.4 264 319.0 262 319.2 260 319.4 258 319.4 256 319.6 254 319.1 252 319.4 250 319.7Z" fill="#a68839"/><rect x="250" y="330.7" width="743" height="1" fill="#a68839" opacity="0.85"/><path d="M250 329.6 252 330.1 254 330.3 256 329.8 258 329.9 260 330.0 262 330.2 264 330.4 266 330.0 268 330.2 270 330.4 272 330.5 274 330.4 276 329.9 278 329.9 280 330.4 282 330.4 284 330.1 286 329.8 288 329.9 290 330.2 292 330.4 294 329.8 296 330.1 298 330.2 300 329.9 302 329.8 304 329.8 306 329.9 308 330.3 310 330.4 312 330.0 314 330.1 316 329.9 318 330.3 320 330.2 322 331.2 324 331.2 326 331.2 328 331.2 330 331.2 332 331.2 334 331.2 336 331.2 338 331.2 340 331.2 342 331.2 344 331.2 346 331.2 348 329.8 350 330.2 352 330.2 354 330.5 356 330.1 358 330.2 360 330.3 362 329.9 364 329.9 366 330.0 368 330.4 370 330.5 372 330.1 374 330.1 376 330.5 378 330.0 380 330.5 382 329.9 384 330.1 386 330.1 388 330.1 390 330.3 392 330.0 394 330.2 396 329.8 398 330.1 400 330.3 402 330.0 404 329.9 406 330.2 408 330.1 410 330.2 412 330.0 414 330.0 416 329.4 418 329.8 420 330.1 422 329.6 424 329.6 426 329.9 428 329.7 430 330.2 432 329.8 434 329.6 436 329.8 438 330.0 440 329.7 442 329.6 444 329.7 446 329.7 448 329.7 450 330.1 452 329.3 454 329.6 456 331.2 458 331.2 460 331.2 462 331.2 464 331.2 466 331.2 468 331.2 470 331.2 472 331.2 474 331.2 476 331.2 478 331.2 480 331.2 482 331.2 484 331.2 486 331.2 488 331.2 490 329.4 492 329.6 494 329.9 496 330.1 498 329.6 500 330.0 502 329.7 504 329.3 506 329.6 508 329.4 510 330.2 512 331.2 514 331.2 516 331.2 518 331.2 520 331.2 522 331.2 524 331.2 526 331.2 528 331.2 530 331.2 532 331.2 534 331.2 536 331.2 538 331.2 540 331.2 542 331.2 544 331.2 546 331.2 548 330.0 550 330.2 552 330.3 554 330.0 556 330.2 558 330.3 560 330.3 562 330.5 564 330.0 566 329.9 568 330.2 570 330.5 572 330.3 574 330.0 576 330.4 578 330.1 580 329.5 582 330.0 584 330.3 586 329.8 588 329.7 590 330.1 592 330.1 594 329.8 596 329.7 598 329.6 600 330.1 602 330.2 604 329.9 606 330.3 608 330.5 610 330.5 612 330.1 614 330.1 616 330.0 618 330.2 620 330.4 622 330.0 624 330.3 626 330.0 628 330.1 630 330.3 632 330.4 634 330.2 636 330.1 638 330.1 640 330.4 642 329.5 644 329.8 646 329.9 648 329.6 650 329.5 652 329.9 654 329.5 656 329.7 658 329.7 660 329.5 662 329.8 664 330.2 666 329.6 668 329.6 670 329.3 672 330.1 674 329.7 676 329.7 678 329.9 680 330.0 682 330.4 684 330.3 686 330.0 688 329.6 690 331.2 692 331.2 694 331.2 696 331.2 698 331.2 700 331.2 702 331.2 704 331.2 706 331.2 708 331.2 710 331.2 712 331.2 714 331.2 716 331.2 718 331.2 720 331.2 722 331.2 724 329.7 726 330.1 728 330.3 730 329.8 732 330.0 734 330.3 736 330.1 738 330.2 740 330.4 742 330.2 744 331.2 746 331.2 748 331.2 750 331.2 752 331.2 754 331.2 756 329.8 758 329.8 760 330.1 762 330.4 764 329.8 766 330.1 768 330.4 770 330.3 772 329.6 774 329.7 776 330.2 778 330.3 780 329.9 782 330.0 784 329.8 786 329.7 788 329.9 790 330.3 792 330.0 794 330.0 796 330.1 798 330.0 800 330.4 802 330.1 804 329.8 806 329.8 808 330.3 810 329.8 812 330.1 814 329.7 816 329.7 818 329.9 820 330.2 822 329.6 824 330.0 826 329.7 828 329.8 830 329.9 832 329.9 834 330.1 836 330.0 838 329.9 840 329.8 842 330.4 844 330.2 846 331.2 848 331.2 850 331.2 852 331.2 854 331.2 856 331.2 858 331.2 860 331.2 862 331.2 864 331.2 866 331.2 868 331.2 870 331.2 872 331.2 874 331.2 876 331.2 878 331.2 880 331.2 882 331.2 884 331.2 886 331.2 888 331.2 890 331.2 892 329.3 894 329.9 896 330.2 898 329.5 900 329.6 902 330.0 904 330.2 906 329.3 908 329.6 910 330.1 912 329.6 914 330.2 916 329.5 918 329.5 920 330.2 922 330.2 924 329.2 926 329.7 928 329.4 930 329.6 932 329.9 934 330.3 936 329.8 938 329.6 940 329.9 942 330.1 944 329.8 946 330.0 948 330.2 950 329.6 952 330.0 954 330.0 956 329.9 958 329.6 960 329.9 962 330.4 964 330.1 966 330.0 968 329.7 970 330.0 972 329.7 974 329.7 976 329.4 978 329.8 980 330.1 982 330.2 984 329.7 986 329.7 988 331.2 990 331.2 992 331.2 992 331.2 990 331.2 988 331.2 986 332.5 984 332.5 982 332.1 980 332.1 978 332.4 976 332.7 974 332.5 972 332.5 970 332.2 968 332.5 966 332.2 964 332.1 962 331.9 960 332.3 958 332.5 956 332.3 954 332.3 952 332.2 950 332.5 948 332.0 946 332.3 944 332.4 942 332.1 940 332.3 938 332.6 936 332.4 934 332.0 932 332.3 930 332.5 928 332.8 926 332.5 924 332.9 922 332.1 920 332.1 918 332.7 916 332.7 914 332.0 912 332.6 910 332.1 908 332.5 906 332.8 904 332.1 902 332.2 900 332.6 898 332.7 896 332.1 894 332.3 892 332.8 890 331.2 888 331.2 886 331.2 884 331.2 882 331.2 880 331.2 878 331.2 876 331.2 874 331.2 872 331.2 870 331.2 868 331.2 866 331.2 864 331.2 862 331.2 860 331.2 858 331.2 856 331.2 854 331.2 852 331.2 850 331.2 848 331.2 846 331.2 844 332.1 842 331.9 840 332.4 838 332.3 836 332.2 834 332.1 832 332.3 830 332.3 828 332.4 826 332.5 824 332.2 822 332.5 820 332.0 818 332.3 816 332.4 814 332.5 812 332.1 810 332.4 808 332.0 806 332.4 804 332.4 802 332.1 800 331.9 798 332.2 796 332.2 794 332.2 792 332.3 790 332.0 788 332.3 786 332.5 784 332.4 782 332.2 780 332.3 778 331.9 776 332.0 774 332.5 772 332.5 770 332.0 768 331.9 766 332.2 764 332.4 762 331.9 760 332.1 758 332.4 756 332.4 754 331.2 752 331.2 750 331.2 748 331.2 746 331.2 744 331.2 742 332.1 740 331.9 738 332.1 736 332.2 734 332.0 732 332.2 730 332.4 728 331.9 726 332.2 724 332.5 722 331.2 720 331.2 718 331.2 716 331.2 714 331.2 712 331.2 710 331.2 708 331.2 706 331.2 704 331.2 702 331.2 700 331.2 698 331.2 696 331.2 694 331.2 692 331.2 690 331.2 688 332.6 686 332.2 684 331.9 682 331.9 680 332.2 678 332.3 676 332.4 674 332.5 672 332.1 670 332.8 668 332.6 666 332.5 664 332.1 662 332.4 660 332.6 658 332.5 656 332.5 654 332.7 652 332.3 650 332.6 648 332.6 646 332.3 644 332.4 642 332.7 640 331.8 638 332.1 636 332.1 634 332.1 632 331.9 630 332.0 628 332.2 626 332.2 624 331.9 622 332.2 620 331.9 618 332.1 616 332.3 614 332.1 612 332.1 610 331.8 608 331.8 606 332.0 604 332.3 602 332.1 600 332.1 598 332.6 596 332.4 594 332.4 592 332.1 590 332.1 588 332.5 586 332.4 584 332.0 582 332.2 580 332.6 578 332.1 576 331.9 574 332.2 572 332.0 570 331.8 568 332.1 566 332.3 564 332.2 562 331.8 560 331.9 558 331.9 556 332.0 554 332.2 552 331.9 550 332.1 548 332.2 546 331.2 544 331.2 542 331.2 540 331.2 538 331.2 536 331.2 534 331.2 532 331.2 530 331.2 528 331.2 526 331.2 524 331.2 522 331.2 520 331.2 518 331.2 516 331.2 514 331.2 512 331.2 510 332.1 508 332.7 506 332.6 504 332.8 502 332.5 500 332.2 498 332.5 496 332.1 494 332.3 492 332.6 490 332.7 488 331.2 486 331.2 484 331.2 482 331.2 480 331.2 478 331.2 476 331.2 474 331.2 472 331.2 470 331.2 468 331.2 466 331.2 464 331.2 462 331.2 460 331.2 458 331.2 456 331.2 454 332.5 452 332.8 450 332.1 448 332.5 446 332.4 444 332.5 442 332.6 440 332.5 438 332.2 436 332.4 434 332.6 432 332.4 430 332.0 428 332.5 426 332.3 424 332.6 422 332.6 420 332.2 418 332.4 416 332.8 414 332.3 412 332.3 410 332.1 408 332.1 406 332.1 404 332.3 402 332.2 400 331.9 398 332.1 396 332.4 394 332.0 392 332.2 390 332.0 388 332.2 386 332.2 384 332.1 382 332.3 380 331.8 378 332.2 376 331.8 374 332.1 372 332.2 370 331.8 368 331.9 366 332.2 364 332.3 362 332.3 360 332.0 358 332.1 356 332.1 354 331.8 352 332.0 350 332.0 348 332.4 346 331.2 344 331.2 342 331.2 340 331.2 338 331.2 336 331.2 334 331.2 332 331.2 330 331.2 328 331.2 326 331.2 324 331.2 322 331.2 320 332.0 318 332.0 316 332.3 314 332.2 312 332.2 310 331.9 308 332.0 306 332.3 304 332.4 302 332.4 300 332.3 298 332.1 296 332.1 294 332.4 292 331.9 290 332.1 288 332.3 286 332.4 284 332.2 282 331.9 280 331.9 278 332.3 276 332.3 274 331.8 272 331.8 270 331.9 268 332.1 266 332.2 264 331.8 262 332.0 260 332.2 258 332.3 256 332.4 254 332.0 252 332.2 250 332.5Z" fill="#a68839"/><rect x="250" y="341.8" width="390" height="40.7" rx="1.8" fill="#11cd11"/><path d="M250 343.6 Q250 341.8 251.8 341.8 L638.2 341.8 Q640 341.8 640 343.6 L640 353.9 L250 353.9 Z" fill="#10a810"/><rect x="250" y="378" width="390" height="3.5" fill="#ffffff" opacity="0.05"/><rect x="250" y="360.9" width="390" height="1" fill="#0a7e0a" opacity="0.85"/><path d="M250 359.5 252 359.0 254 358.6 256 357.7 258 359.1 260 358.4 262 358.5 264 358.2 266 359.0 268 358.4 270 359.1 272 358.3 274 359.8 276 358.6 278 359.4 280 359.4 282 358.6 284 358.8 286 358.7 288 358.2 290 358.0 292 358.0 294 357.9 296 358.0 298 359.2 300 360.0 302 359.9 304 359.4 306 359.2 308 359.8 310 360.5 312 359.4 314 359.5 316 360.0 318 359.9 320 360.0 322 359.3 324 358.9 326 359.7 328 359.3 330 358.9 332 360.7 334 360.9 336 360.0 338 360.0 340 360.4 342 359.7 344 359.6 346 359.5 348 359.9 350 359.8 352 359.3 354 358.5 356 358.0 358 359.3 360 358.2 362 358.2 364 358.5 366 359.0 368 359.6 370 359.0 372 359.5 374 359.1 376 359.2 378 359.3 380 359.0 382 358.5 384 357.9 386 357.5 388 358.2 390 358.5 392 358.5 394 358.8 396 359.0 398 359.3 400 359.2 402 358.7 404 360.0 406 358.8 408 359.3 410 360.0 412 359.1 414 360.2 416 359.8 418 360.1 420 358.9 422 359.1 424 359.3 426 359.3 428 359.1 430 360.4 432 359.3 434 360.8 436 360.9 438 360.9 440 360.7 442 360.2 444 359.8 446 359.4 448 359.5 450 359.4 452 359.2 454 358.6 456 359.6 458 359.8 460 359.3 462 359.7 464 358.9 466 359.0 468 359.0 470 360.1 472 359.3 474 358.6 476 360.0 478 358.7 480 358.8 482 358.3 484 359.1 486 359.0 488 357.8 490 357.2 492 358.8 494 357.5 496 358.5 498 359.1 500 358.7 502 359.0 504 359.3 506 358.7 508 359.4 510 359.5 512 360.0 514 358.8 516 359.7 518 358.9 520 358.6 522 359.5 524 358.7 526 359.3 528 359.2 530 360.2 532 359.5 534 359.9 536 359.7 538 360.0 540 360.1 542 360.1 544 359.9 546 360.0 548 360.4 550 359.3 552 359.9 554 359.1 556 359.1 558 358.7 560 359.0 562 359.1 564 359.1 566 359.1 568 359.3 570 360.1 572 359.2 574 359.3 576 358.7 578 359.6 580 359.6 582 359.0 584 359.0 586 358.7 588 357.6 590 358.1 592 357.3 594 357.7 596 358.3 598 358.3 600 358.8 602 358.4 604 359.5 606 359.0 608 359.5 610 360.0 612 359.3 614 358.6 616 358.3 618 358.3 620 358.6 622 358.2 624 359.5 626 358.1 628 359.0 630 359.8 632 359.8 634 360.2 636 359.4 638 360.8 638 361.9 636 363.1 634 362.4 632 362.8 630 362.8 628 363.4 626 364.2 624 363.0 622 364.1 620 363.8 618 364.1 616 364.0 614 363.8 612 363.2 610 362.6 608 363.0 606 363.4 604 363.0 602 364.0 600 363.6 598 364.0 596 364.0 594 364.5 592 364.8 590 364.2 588 364.6 586 363.7 584 363.4 582 363.4 580 362.9 578 363.0 576 363.7 574 363.2 572 363.3 570 362.5 568 363.1 566 363.3 564 363.4 562 363.4 560 363.4 558 363.7 556 363.3 554 363.4 552 362.7 550 363.2 548 362.3 546 362.6 544 362.7 542 362.5 540 362.5 538 362.6 536 362.9 534 362.7 532 363.0 530 362.5 528 363.3 526 363.2 524 363.7 522 363.0 520 363.8 518 363.5 516 362.9 514 363.6 512 362.6 510 363.0 508 363.1 506 363.7 504 363.2 502 363.4 500 363.7 498 363.3 496 363.9 494 364.7 492 363.6 490 365.0 488 364.5 486 363.4 484 363.3 482 364.0 480 363.6 478 363.7 476 362.5 474 363.8 472 363.1 470 362.5 468 363.5 466 363.4 464 363.5 462 362.8 460 363.2 458 362.7 456 362.9 454 363.8 452 363.3 450 363.1 448 363.0 446 363.1 444 362.8 442 362.4 440 362.0 438 361.8 436 361.8 434 361.9 432 363.2 430 362.2 428 363.4 426 363.2 424 363.2 422 363.4 420 363.5 418 362.5 416 362.7 414 362.4 412 363.4 410 362.6 408 363.2 406 363.6 404 362.6 402 363.7 400 363.3 398 363.2 396 363.4 394 363.6 392 363.9 390 363.8 388 364.1 386 364.7 384 364.4 382 363.8 380 363.4 378 363.2 376 363.3 374 363.3 372 363.0 370 363.4 368 362.9 366 363.5 364 363.8 362 364.1 360 364.1 358 363.2 356 364.3 354 363.9 352 363.2 350 362.8 348 362.7 346 363.0 344 362.9 342 362.9 340 362.2 338 362.6 336 362.6 334 361.9 332 362.0 330 363.5 328 363.2 326 362.8 324 363.5 322 363.2 320 362.6 318 362.6 316 362.6 314 363.0 312 363.1 310 362.1 308 362.8 306 363.3 304 363.1 302 362.7 300 362.6 298 363.3 296 364.3 294 364.4 292 364.3 290 364.3 288 364.1 286 363.7 284 363.6 282 363.8 280 363.1 278 363.1 276 363.8 274 362.8 272 364.0 270 363.4 268 364.0 266 363.4 264 364.1 262 363.8 260 364.0 258 363.4 256 364.5 254 363.8 252 363.5 250 363.0Z" fill="#0a7e0a"/><rect x="250" y="373.7" width="390" height="1" fill="#0a7e0a" opacity="0.85"/><path d="M250 372.2 252 371.7 254 371.4 256 370.5 258 372.0 260 371.4 262 371.3 264 370.8 266 371.7 268 371.1 270 372.0 272 371.1 274 372.6 276 371.4 278 372.2 280 372.2 282 371.2 284 371.6 286 371.5 288 371.2 290 370.7 292 370.6 294 370.7 296 370.9 298 371.9 300 372.8 302 372.7 304 372.2 306 372.0 308 372.5 310 373.4 312 372.1 314 372.3 316 372.7 318 372.8 320 372.9 322 372.1 324 371.5 326 372.7 328 372.1 330 371.7 332 373.5 334 373.6 336 372.9 338 372.8 340 373.2 342 372.6 344 372.4 346 372.4 348 372.6 350 372.6 352 372.0 354 371.2 356 371.0 358 372.2 360 371.0 362 371.1 364 371.6 366 371.8 368 372.4 370 372.0 372 372.3 374 372.0 376 372.1 378 372.2 380 371.9 382 371.3 384 370.9 386 370.4 388 371.0 390 371.4 392 371.4 394 371.4 396 371.7 398 371.9 400 371.9 402 371.4 404 372.7 406 371.7 408 372.1 410 372.9 412 371.9 414 373.0 416 372.7 418 372.9 420 371.6 422 372.0 424 372.0 426 372.2 428 371.8 430 373.3 432 372.2 434 373.6 436 373.7 438 373.7 440 373.6 442 373.0 444 372.6 446 372.2 448 372.2 450 372.2 452 371.8 454 371.3 456 372.2 458 372.5 460 372.2 462 372.4 464 371.5 466 372.0 468 371.8 470 372.9 472 372.2 474 371.4 476 372.8 478 371.7 480 371.8 482 371.0 484 371.9 486 371.8 488 370.7 490 370.2 492 371.7 494 370.4 496 371.1 498 371.8 500 371.5 502 371.7 504 372.2 506 371.6 508 372.1 510 372.4 512 372.8 514 371.6 516 372.4 518 371.7 520 371.2 522 372.2 524 371.4 526 372.0 528 371.9 530 373.0 532 372.4 534 372.7 536 372.5 538 372.9 540 372.9 542 372.9 544 372.7 546 372.8 548 373.2 550 372.0 552 372.6 554 371.8 556 371.9 558 371.5 560 371.8 562 372.0 564 371.7 566 371.8 568 372.1 570 372.9 572 372.0 574 372.2 576 371.7 578 372.3 580 372.4 582 371.8 584 371.8 586 371.7 588 370.6 590 370.8 592 370.2 594 370.6 596 371.1 598 370.8 600 371.6 602 371.2 604 372.3 606 371.8 608 372.2 610 372.7 612 372.2 614 371.4 616 371.1 618 371.1 620 371.5 622 371.0 624 372.2 626 370.9 628 371.9 630 372.6 632 372.5 634 373.1 636 372.0 638 373.5 638 374.8 636 376.1 634 375.2 632 375.6 630 375.6 628 376.1 626 377.0 624 375.9 622 376.9 620 376.5 618 376.8 616 376.8 614 376.6 612 375.9 610 375.5 608 375.9 606 376.2 604 375.8 602 376.7 600 376.4 598 377.1 596 376.8 594 377.3 592 377.6 590 377.1 588 377.3 586 376.4 584 376.2 582 376.3 580 375.7 578 375.8 576 376.4 574 375.9 572 376.1 570 375.3 568 376.0 566 376.2 564 376.3 562 376.1 560 376.2 558 376.5 556 376.1 554 376.2 552 375.5 550 376.1 548 375.1 546 375.4 544 375.5 542 375.3 540 375.3 538 375.3 536 375.7 534 375.5 532 375.8 530 375.2 528 376.2 526 376.1 524 376.6 522 375.9 520 376.7 518 376.3 516 375.7 514 376.4 512 375.4 510 375.8 508 376.0 506 376.4 504 375.9 502 376.3 500 376.5 498 376.2 496 376.8 494 377.4 492 376.4 490 377.6 488 377.2 486 376.3 484 376.2 482 377.0 480 376.3 478 376.3 476 375.4 474 376.6 472 375.9 470 375.3 468 376.2 466 376.1 464 376.5 462 375.7 460 375.9 458 375.6 456 375.9 454 376.6 452 376.2 450 375.9 448 375.9 446 375.9 444 375.6 442 375.2 440 374.7 438 374.6 436 374.6 434 374.7 432 375.9 430 375.0 428 376.2 426 375.9 424 376.0 422 376.1 420 376.4 418 375.3 416 375.5 414 375.2 412 376.1 410 375.3 408 376.0 406 376.3 404 375.5 402 376.6 400 376.2 398 376.1 396 376.3 394 376.6 392 376.5 390 376.6 388 377.0 386 377.5 384 377.0 382 376.7 380 376.2 378 375.9 376 376.0 374 376.1 372 375.8 370 376.1 368 375.8 366 376.2 364 376.4 362 376.8 360 376.9 358 375.9 356 377.0 354 376.7 352 376.1 350 375.6 348 375.6 346 375.8 344 375.7 342 375.5 340 375.0 338 375.4 336 375.3 334 374.7 332 374.8 330 376.3 328 375.9 326 375.5 324 376.5 322 376.0 320 375.3 318 375.4 316 375.5 314 375.8 312 376.0 310 374.9 308 375.6 306 376.1 304 375.9 302 375.5 300 375.4 298 376.1 296 377.0 294 377.2 292 377.2 290 377.2 288 376.8 286 376.5 284 376.4 282 376.7 280 375.9 278 375.9 276 376.6 274 375.5 272 376.9 270 376.1 268 376.8 266 376.3 264 377.1 262 376.6 260 376.6 258 376.1 256 377.3 254 376.5 252 376.3 250 375.9Z" fill="#0a7e0a"/><rect x="250" y="384.8" width="371.5" height="40.7" rx="1.8" fill="#11cd11"/><path d="M250 386.6 Q250 384.8 251.8 384.8 L619.7 384.8 Q621.5 384.8 621.5 386.6 L621.5 396.9 L250 396.9 Z" fill="#10a810"/><rect x="250" y="421" width="371.5" height="3.5" fill="#ffffff" opacity="0.05"/><rect x="250" y="403.9" width="371.5" height="1" fill="#0a7e0a" opacity="0.85"/><path d="M250 402.4 252 401.6 254 401.4 256 401.3 258 402.1 260 401.4 262 402.2 264 402.0 266 402.3 268 401.8 270 401.7 272 401.3 274 402.0 276 401.6 278 402.0 280 401.7 282 401.3 284 400.9 286 401.5 288 401.3 290 400.9 292 401.6 294 401.4 296 402.3 298 401.5 300 402.8 302 402.3 304 403.1 306 403.6 308 402.4 310 403.8 312 403.6 314 403.0 316 403.1 318 402.3 320 402.3 322 402.8 324 403.1 326 402.1 328 402.0 330 402.7 332 402.4 334 403.5 336 403.1 338 402.6 340 403.6 342 403.9 344 402.6 346 403.4 348 403.2 350 402.2 352 402.3 354 401.1 356 402.0 358 401.6 360 401.7 362 401.3 364 401.1 366 402.7 368 402.7 370 402.7 372 402.8 374 402.3 376 402.6 378 402.7 380 402.5 382 401.1 384 401.9 386 400.9 388 401.5 390 401.3 392 401.5 394 402.0 396 401.5 398 400.8 400 402.2 402 402.2 404 401.8 406 403.0 408 403.2 410 403.1 412 402.8 414 402.7 416 403.1 418 403.0 420 402.8 422 402.3 424 403.0 426 402.8 428 403.2 430 402.3 432 403.3 434 403.8 436 402.7 438 403.2 440 403.6 442 403.7 444 402.8 446 402.6 448 402.5 450 402.1 452 402.9 454 401.7 456 402.5 458 402.4 460 402.1 462 401.5 464 402.8 466 403.0 468 402.7 470 401.9 472 401.6 474 402.9 476 401.9 478 401.5 480 402.5 482 402.0 484 401.2 486 401.8 488 400.6 490 401.8 492 401.1 494 401.0 496 402.0 498 401.8 500 401.6 502 402.7 504 401.8 506 401.6 508 402.8 510 402.0 512 402.9 514 402.3 516 402.9 518 402.5 520 401.8 522 402.7 524 402.8 526 401.8 528 401.9 530 402.1 532 403.0 534 402.6 536 402.9 538 403.9 540 403.9 542 403.9 544 403.7 546 403.7 548 403.1 550 402.5 552 402.7 554 402.7 556 403.0 558 401.7 560 403.0 562 402.8 564 402.2 566 403.2 568 402.4 570 402.1 572 402.7 574 402.3 576 401.9 578 402.3 580 402.2 582 402.5 584 401.5 586 401.4 588 401.0 590 401.0 592 402.0 594 401.4 596 400.9 598 401.3 600 401.5 602 402.1 604 401.4 606 401.5 608 402.6 610 402.2 612 402.8 614 402.7 616 402.4 618 401.0 620 402.5 620 406.0 618 407.3 616 406.1 614 405.8 612 405.8 610 406.3 608 405.9 606 406.8 604 407.0 602 406.3 600 406.9 598 407.1 596 407.4 594 407.0 592 406.5 590 407.3 588 407.3 586 407.0 584 406.9 582 406.0 580 406.3 578 406.2 576 406.5 574 406.2 572 405.8 570 406.3 568 406.1 566 405.4 564 406.3 562 405.7 560 405.6 558 406.7 556 405.6 554 405.9 552 405.9 550 406.0 548 405.5 546 405.0 544 405.0 542 404.8 540 404.8 538 404.8 536 405.7 534 405.9 532 405.6 530 406.3 528 406.5 526 406.6 524 405.8 522 405.9 520 406.6 518 406.0 516 405.7 514 406.2 512 405.7 510 406.4 508 405.8 506 406.7 504 406.6 502 405.8 500 406.8 498 406.6 496 406.4 494 407.3 492 407.2 490 406.6 488 407.7 486 406.6 484 407.1 482 406.5 480 406.0 478 406.9 476 406.5 474 405.7 472 406.8 470 406.5 468 405.9 466 405.6 464 405.8 462 406.9 460 406.4 458 406.1 456 406.0 454 406.7 452 405.7 450 406.3 448 406.0 446 406.0 444 405.8 442 405.0 440 405.1 438 405.4 436 405.8 434 404.9 432 405.3 430 406.2 428 405.4 426 405.7 424 405.6 422 406.2 420 405.8 418 405.6 416 405.5 414 405.8 412 405.8 410 405.5 408 405.4 406 405.6 404 406.6 402 406.3 400 406.2 398 407.5 396 406.8 394 406.4 392 406.8 390 407.0 388 406.9 386 407.4 384 406.5 382 407.2 380 406.0 378 405.8 376 405.9 374 406.2 372 405.8 370 405.9 368 405.9 366 405.9 364 407.2 362 407.1 360 406.7 358 406.8 356 406.4 354 407.2 352 406.2 350 406.3 348 405.4 346 405.2 344 406.0 342 404.8 340 405.0 338 405.9 336 405.5 334 405.1 332 406.1 330 405.9 328 406.4 326 406.3 324 405.5 322 405.7 320 406.2 318 406.2 316 405.5 314 405.6 312 405.1 310 404.9 308 406.1 306 405.1 304 405.5 302 406.2 300 405.8 298 406.9 296 406.2 294 406.9 292 406.8 290 407.4 288 407.0 286 406.9 284 407.3 282 407.1 280 406.7 278 406.5 276 406.8 274 406.4 272 407.0 270 406.7 268 406.6 266 406.2 264 406.4 262 406.3 260 406.9 258 406.4 256 407.0 254 407.0 252 406.8 250 406.1Z" fill="#0a7e0a"/><rect x="250" y="416.7" width="371.5" height="1" fill="#0a7e0a" opacity="0.85"/><path d="M250 415.2 252 414.5 254 414.1 256 414.1 258 414.9 260 414.0 262 415.0 264 414.8 266 415.0 268 414.6 270 414.7 272 414.1 274 414.9 276 414.5 278 414.7 280 414.3 282 414.2 284 413.8 286 414.2 288 414.1 290 413.6 292 414.5 294 414.0 296 415.0 298 414.2 300 415.6 302 415.1 304 415.9 306 416.4 308 415.1 310 416.6 312 416.4 314 415.9 316 415.9 318 415.2 320 415.2 322 415.6 324 415.9 326 415.0 328 414.9 330 415.5 332 415.2 334 416.3 336 415.9 338 415.4 340 416.4 342 416.7 344 415.3 346 416.2 348 416.1 350 415.1 352 415.1 354 413.9 356 414.9 358 414.4 360 414.5 362 413.9 364 413.9 366 415.5 368 415.6 370 415.5 372 415.6 374 415.1 376 415.6 378 415.6 380 415.3 382 413.6 384 414.5 386 413.5 388 414.2 390 414.2 392 414.2 394 414.8 396 414.4 398 413.6 400 414.9 402 415.1 404 414.7 406 415.8 408 416.0 410 415.8 412 415.4 414 415.6 416 415.9 418 415.8 420 415.7 422 415.1 424 415.7 426 415.5 428 416.0 430 415.2 432 416.1 434 416.6 436 415.6 438 416.0 440 416.4 442 416.5 444 415.6 446 415.4 448 415.3 450 414.9 452 415.8 454 414.3 456 415.2 458 415.1 460 415.0 462 414.3 464 415.5 466 415.7 468 415.5 470 414.6 472 414.6 474 415.7 476 414.6 478 414.5 480 415.4 482 414.8 484 414.0 486 414.7 488 413.2 490 414.6 492 413.7 494 413.6 496 414.7 498 414.4 500 414.4 502 415.5 504 414.6 506 414.7 508 415.6 510 414.9 512 415.7 514 415.1 516 415.8 518 415.4 520 414.4 522 415.5 524 415.7 526 414.6 528 414.7 530 414.9 532 415.8 534 415.4 536 415.6 538 416.7 540 416.7 542 416.7 544 416.5 546 416.5 548 415.8 550 415.2 552 415.4 554 415.6 556 415.9 558 414.5 560 415.8 562 415.8 564 415.0 566 416.1 568 415.2 570 415.0 572 415.5 574 415.1 576 414.9 578 415.1 580 415.0 582 415.3 584 414.3 586 414.3 588 413.7 590 413.8 592 414.7 594 414.0 596 413.6 598 414.1 600 414.3 602 414.9 604 414.3 606 414.3 608 415.5 610 415.0 612 415.4 614 415.4 616 415.3 618 413.9 620 415.3 620 418.8 618 420.0 616 418.8 614 418.7 612 418.7 610 419.1 608 418.6 606 419.7 604 419.7 602 419.1 600 419.7 598 419.9 596 420.3 594 419.9 592 419.3 590 420.1 588 420.1 586 419.7 584 419.6 582 418.8 580 419.0 578 418.9 576 419.2 574 419.0 572 418.6 570 419.1 568 418.9 566 418.2 564 419.1 562 418.4 560 418.4 558 419.5 556 418.3 554 418.5 552 418.7 550 418.9 548 418.4 546 417.8 544 417.8 542 417.6 540 417.6 538 417.6 536 418.5 534 418.7 532 418.4 530 419.2 528 419.3 526 419.4 524 418.5 522 418.7 520 419.5 518 418.8 516 418.4 514 419.0 512 418.5 510 419.2 508 418.6 506 419.4 504 419.4 502 418.6 500 419.6 498 419.6 496 419.3 494 420.3 492 420.2 490 419.4 488 420.6 486 419.3 484 419.9 482 419.2 480 418.7 478 419.5 476 419.4 474 418.5 472 419.5 470 419.4 468 418.6 466 418.5 464 418.6 462 419.6 460 419.1 458 418.9 456 418.9 454 419.7 452 418.4 450 419.2 448 418.8 446 418.7 444 418.5 442 417.8 440 417.9 438 418.2 436 418.6 434 417.7 432 418.1 430 418.9 428 418.2 426 418.6 424 418.4 422 419.0 420 418.5 418 418.4 416 418.3 414 418.5 412 418.7 410 418.4 408 418.2 406 418.4 404 419.3 402 419.0 400 419.2 398 420.3 396 419.6 394 419.3 392 419.8 390 419.7 388 419.7 386 420.3 384 419.5 382 420.2 380 418.8 378 418.6 376 418.6 374 419.0 372 418.5 370 418.7 368 418.6 366 418.6 364 420.0 362 420.0 360 419.5 358 419.6 356 419.2 354 420.0 352 419.0 350 419.0 348 418.1 346 418.0 344 418.8 342 417.6 340 417.8 338 418.7 336 418.3 334 417.9 332 418.9 330 418.6 328 419.2 326 419.1 324 418.3 322 418.6 320 418.9 318 418.9 316 418.3 314 418.3 312 417.8 310 417.7 308 419.0 306 417.9 304 418.3 302 419.0 300 418.6 298 419.7 296 419.0 294 419.9 292 419.5 290 420.2 288 419.9 286 419.8 284 420.1 282 419.7 280 419.7 278 419.3 276 419.5 274 419.2 272 419.8 270 419.3 268 419.5 266 419.1 264 419.2 262 419.0 260 419.9 258 419.2 256 419.8 254 419.8 252 419.5 250 418.9Z" fill="#0a7e0a"/><rect x="623.5" y="384.8" width="369.5" height="40.7" rx="1.8" fill="#11cd11"/><path d="M623.5 386.6 Q623.5 384.8 625.3 384.8 L991.2 384.8 Q993 384.8 993 386.6 L993 396.9 L623.5 396.9 Z" fill="#10a810"/><rect x="623.5" y="421" width="369.5" height="3.5" fill="#ffffff" opacity="0.05"/><rect x="623.5" y="403.9" width="369.5" height="1" fill="#0a7e0a" opacity="0.85"/><path d="M623.5 401.9 625.5 402.4 627.5 401.3 629.5 402.1 631.5 401.1 633.5 401.9 635.5 402.3 637.5 401.3 639.5 401.9 641.5 401.5 643.5 401.7 645.5 402.9 647.5 402.2 649.5 401.7 651.5 401.8 653.5 402.6 655.5 402.4 657.5 402.0 659.5 401.8 661.5 400.9 663.5 400.7 665.5 402.1 667.5 401.0 669.5 402.5 671.5 402.4 673.5 402.3 675.5 401.9 677.5 403.3 679.5 402.8 681.5 402.7 683.5 402.4 685.5 403.3 687.5 403.3 689.5 402.6 691.5 403.3 693.5 402.8 695.5 403.1 697.5 402.5 699.5 402.3 701.5 402.8 703.5 402.0 705.5 402.3 707.5 402.7 709.5 403.4 711.5 402.8 713.5 403.4 715.5 402.7 717.5 403.4 719.5 402.2 721.5 402.2 723.5 402.9 725.5 401.6 727.5 402.3 729.5 401.2 731.5 402.4 733.5 402.1 735.5 401.0 737.5 402.4 739.5 402.1 741.5 401.4 743.5 401.6 745.5 402.0 747.5 402.6 749.5 402.1 751.5 401.3 753.5 402.4 755.5 401.7 757.5 401.3 759.5 400.6 761.5 401.8 763.5 400.4 765.5 400.5 767.5 402.1 769.5 400.8 771.5 401.0 773.5 401.9 775.5 402.8 777.5 401.7 779.5 402.3 781.5 401.9 783.5 402.0 785.5 403.5 787.5 402.6 789.5 402.7 791.5 402.0 793.5 402.6 795.5 403.0 797.5 403.1 799.5 402.2 801.5 403.3 803.5 402.0 805.5 402.6 807.5 402.3 809.5 403.4 811.5 403.1 813.5 403.9 815.5 402.9 817.5 402.6 819.5 403.2 821.5 402.6 823.5 402.1 825.5 403.2 827.5 402.7 829.5 402.3 831.5 401.7 833.5 402.5 835.5 402.6 837.5 401.5 839.5 402.4 841.5 402.8 843.5 403.1 845.5 401.9 847.5 402.5 849.5 402.9 851.5 402.2 853.5 402.2 855.5 402.3 857.5 401.8 859.5 401.9 861.5 400.7 863.5 400.4 865.5 401.9 867.5 401.2 869.5 400.6 871.5 402.4 873.5 401.3 875.5 401.9 877.5 402.4 879.5 402.1 881.5 402.6 883.5 402.4 885.5 402.0 887.5 402.3 889.5 401.8 891.5 402.2 893.5 402.8 895.5 401.7 897.5 402.2 899.5 402.9 901.5 402.5 903.5 402.9 905.5 402.8 907.5 403.7 909.5 403.4 911.5 403.9 913.5 403.5 915.5 403.6 917.5 402.9 919.5 403.2 921.5 403.4 923.5 403.1 925.5 403.3 927.5 401.8 929.5 402.1 931.5 402.8 933.5 402.5 935.5 401.6 937.5 402.6 939.5 402.0 941.5 401.9 943.5 402.7 945.5 402.9 947.5 403.0 949.5 403.2 951.5 403.1 953.5 401.4 955.5 402.1 957.5 402.1 959.5 401.8 961.5 400.6 963.5 401.4 965.5 401.8 967.5 401.3 969.5 401.7 971.5 402.3 973.5 401.8 975.5 401.6 977.5 401.4 979.5 401.9 981.5 402.6 983.5 401.4 985.5 402.3 987.5 402.6 989.5 401.6 991.5 402.7 991.5 405.8 989.5 406.8 987.5 405.9 985.5 406.2 983.5 407.0 981.5 405.9 979.5 406.5 977.5 406.9 975.5 406.8 973.5 406.6 971.5 406.2 969.5 406.7 967.5 407.0 965.5 406.6 963.5 406.9 961.5 407.6 959.5 406.6 957.5 406.4 955.5 406.4 953.5 406.9 951.5 405.5 949.5 405.4 947.5 405.6 945.5 405.7 943.5 405.8 941.5 406.5 939.5 406.4 937.5 406.0 935.5 406.8 933.5 406.0 931.5 405.8 929.5 406.3 927.5 406.6 925.5 405.4 923.5 405.5 921.5 405.2 919.5 405.4 917.5 405.7 915.5 405.1 913.5 405.2 911.5 404.8 909.5 405.3 907.5 405.0 905.5 405.8 903.5 405.6 901.5 406.0 899.5 405.7 897.5 406.3 895.5 406.7 893.5 405.7 891.5 406.3 889.5 406.6 887.5 406.2 885.5 406.5 883.5 406.1 881.5 405.9 879.5 406.3 877.5 406.1 875.5 406.5 873.5 407.0 871.5 406.1 869.5 407.6 867.5 407.1 865.5 406.5 863.5 407.8 861.5 407.5 859.5 406.6 857.5 406.6 855.5 406.2 853.5 406.2 851.5 406.2 849.5 405.7 847.5 406.0 845.5 406.5 843.5 405.5 841.5 405.8 839.5 406.1 837.5 406.9 835.5 405.9 833.5 406.0 831.5 406.7 829.5 406.2 827.5 405.8 825.5 405.4 823.5 406.4 821.5 405.9 819.5 405.4 817.5 405.9 815.5 405.7 813.5 404.8 811.5 405.5 809.5 405.3 807.5 406.2 805.5 405.9 803.5 406.5 801.5 405.3 799.5 406.3 797.5 405.5 795.5 405.5 793.5 405.9 791.5 406.4 789.5 405.9 787.5 406.0 785.5 405.2 783.5 406.4 781.5 406.5 779.5 406.2 777.5 406.7 775.5 405.7 773.5 406.5 771.5 407.3 769.5 407.4 767.5 406.4 765.5 407.7 763.5 407.8 761.5 406.6 759.5 407.7 757.5 407.1 755.5 406.7 753.5 406.1 751.5 407.0 749.5 406.4 747.5 405.9 745.5 406.4 743.5 406.8 741.5 407.0 739.5 406.3 737.5 406.1 735.5 407.3 733.5 406.3 731.5 406.1 729.5 407.1 727.5 406.2 725.5 406.8 723.5 405.7 721.5 406.3 719.5 406.2 717.5 405.3 715.5 405.8 713.5 405.3 711.5 405.8 709.5 405.2 707.5 405.9 705.5 406.1 703.5 406.4 701.5 405.8 699.5 406.2 697.5 406.0 695.5 405.5 693.5 405.7 691.5 405.3 689.5 405.9 687.5 405.3 685.5 405.3 683.5 406.1 681.5 405.8 679.5 405.8 677.5 405.3 675.5 406.5 673.5 406.2 671.5 406.1 669.5 406.0 667.5 407.3 665.5 406.3 663.5 407.6 661.5 407.4 659.5 406.6 657.5 406.4 655.5 406.1 653.5 405.9 651.5 406.6 649.5 406.7 647.5 406.2 645.5 405.7 643.5 406.7 641.5 406.9 639.5 406.5 637.5 407.0 635.5 406.2 633.5 406.6 631.5 407.2 629.5 406.4 627.5 407.0 625.5 406.1 623.5 406.5Z" fill="#0a7e0a"/><rect x="623.5" y="416.7" width="369.5" height="1" fill="#0a7e0a" opacity="0.85"/><path d="M623.5 414.8 625.5 415.1 627.5 414.3 629.5 414.9 631.5 414.2 633.5 414.8 635.5 415.0 637.5 414.1 639.5 414.7 641.5 414.3 643.5 414.5 645.5 415.6 647.5 415.1 649.5 414.6 651.5 414.6 653.5 415.3 655.5 415.3 657.5 414.8 659.5 414.6 661.5 413.6 663.5 413.7 665.5 415.0 667.5 413.9 669.5 415.3 671.5 415.2 673.5 415.0 675.5 414.7 677.5 416.1 679.5 415.6 681.5 415.3 683.5 415.2 685.5 416.2 687.5 416.1 689.5 415.3 691.5 416.0 693.5 415.6 695.5 415.9 697.5 415.2 699.5 415.1 701.5 415.5 703.5 414.9 705.5 415.2 707.5 415.5 709.5 416.2 711.5 415.6 713.5 416.2 715.5 415.5 717.5 416.1 719.5 415.1 721.5 415.1 723.5 415.8 725.5 414.5 727.5 415.0 729.5 413.9 731.5 415.2 733.5 414.9 735.5 413.7 737.5 415.1 739.5 415.0 741.5 414.0 743.5 414.3 745.5 414.7 747.5 415.4 749.5 415.0 751.5 413.9 753.5 415.2 755.5 414.5 757.5 414.1 759.5 413.3 761.5 414.6 763.5 413.1 765.5 413.4 767.5 414.9 769.5 413.9 771.5 413.8 773.5 414.7 775.5 415.6 777.5 414.4 779.5 415.1 781.5 414.7 783.5 414.9 785.5 416.3 787.5 415.3 789.5 415.5 791.5 414.7 793.5 415.4 795.5 415.8 797.5 415.9 799.5 415.0 801.5 416.1 803.5 414.8 805.5 415.5 807.5 415.1 809.5 416.1 811.5 415.8 813.5 416.7 815.5 415.6 817.5 415.4 819.5 416.0 821.5 415.3 823.5 415.1 825.5 416.0 827.5 415.5 829.5 415.1 831.5 414.5 833.5 415.4 835.5 415.3 837.5 414.0 839.5 415.3 841.5 415.6 843.5 415.9 845.5 414.6 847.5 415.3 849.5 415.7 851.5 415.1 853.5 415.1 855.5 415.0 857.5 414.6 859.5 414.9 861.5 413.8 863.5 413.2 865.5 414.5 867.5 413.8 869.5 413.6 871.5 415.2 873.5 414.3 875.5 414.8 877.5 415.2 879.5 414.9 881.5 415.5 883.5 415.3 885.5 414.8 887.5 415.2 889.5 414.6 891.5 415.1 893.5 415.7 895.5 414.2 897.5 415.0 899.5 415.6 901.5 415.3 903.5 415.7 905.5 415.5 907.5 416.5 909.5 416.1 911.5 416.7 913.5 416.3 915.5 416.4 917.5 415.6 919.5 416.0 921.5 416.2 923.5 415.8 925.5 416.0 927.5 414.6 929.5 414.9 931.5 415.7 933.5 415.2 935.5 414.6 937.5 415.3 939.5 414.9 941.5 414.6 943.5 415.5 945.5 415.7 947.5 415.8 949.5 416.0 951.5 415.8 953.5 414.1 955.5 414.9 957.5 414.9 959.5 414.4 961.5 413.5 963.5 414.2 965.5 414.6 967.5 414.2 969.5 414.6 971.5 415.1 973.5 414.5 975.5 414.3 977.5 414.3 979.5 414.6 981.5 415.3 983.5 414.4 985.5 415.0 987.5 415.3 989.5 414.5 991.5 415.5 991.5 418.6 989.5 419.5 987.5 418.8 985.5 419.1 983.5 419.6 981.5 418.8 979.5 419.4 977.5 419.6 975.5 419.7 973.5 419.5 971.5 419.0 969.5 419.4 967.5 419.7 965.5 419.4 963.5 419.8 961.5 420.3 959.5 419.5 957.5 419.2 955.5 419.1 953.5 419.8 951.5 418.4 949.5 418.2 947.5 418.4 945.5 418.5 943.5 418.7 941.5 419.4 939.5 419.1 937.5 418.8 935.5 419.4 933.5 418.9 931.5 418.5 929.5 419.2 927.5 419.4 925.5 418.2 923.5 418.4 921.5 418.0 919.5 418.2 917.5 418.5 915.5 417.9 913.5 418.0 911.5 417.6 909.5 418.1 907.5 417.8 905.5 418.7 903.5 418.5 901.5 418.8 899.5 418.5 897.5 419.1 895.5 419.8 893.5 418.5 891.5 419.0 889.5 419.4 887.5 418.9 885.5 419.2 883.5 418.8 881.5 418.6 879.5 419.1 877.5 418.9 875.5 419.2 873.5 419.7 871.5 418.9 869.5 420.3 867.5 420.1 865.5 419.5 863.5 420.6 861.5 420.1 859.5 419.2 857.5 419.4 855.5 419.1 853.5 419.0 851.5 419.0 849.5 418.5 847.5 418.8 845.5 419.4 843.5 418.3 841.5 418.5 839.5 418.8 837.5 419.9 835.5 418.8 833.5 418.8 831.5 419.5 829.5 419.0 827.5 418.7 825.5 418.2 823.5 419.0 821.5 418.8 819.5 418.2 817.5 418.7 815.5 418.6 813.5 417.6 811.5 418.4 809.5 418.1 807.5 419.0 805.5 418.6 803.5 419.2 801.5 418.1 799.5 419.1 797.5 418.3 795.5 418.4 793.5 418.7 791.5 419.3 789.5 418.7 787.5 418.8 785.5 418.0 783.5 419.1 781.5 419.3 779.5 419.0 777.5 419.6 775.5 418.6 773.5 419.3 771.5 420.1 769.5 420.0 767.5 419.1 765.5 420.4 763.5 420.6 761.5 419.4 759.5 420.5 757.5 419.8 755.5 419.5 753.5 418.9 751.5 420.0 749.5 419.1 747.5 418.8 745.5 419.4 743.5 419.7 741.5 419.9 739.5 419.1 737.5 419.0 735.5 420.1 733.5 419.2 731.5 418.9 729.5 420.0 727.5 419.0 725.5 419.5 723.5 418.4 721.5 419.0 719.5 419.0 717.5 418.1 715.5 418.6 713.5 418.1 711.5 418.6 709.5 418.0 707.5 418.7 705.5 418.9 703.5 419.1 701.5 418.6 699.5 419.0 697.5 418.9 695.5 418.3 693.5 418.6 691.5 418.2 689.5 418.8 687.5 418.1 685.5 418.1 683.5 418.9 681.5 418.8 679.5 418.6 677.5 418.1 675.5 419.3 673.5 419.0 671.5 418.9 669.5 418.8 667.5 420.0 665.5 419.0 663.5 420.2 661.5 420.2 659.5 419.4 657.5 419.2 655.5 418.8 653.5 418.8 651.5 419.4 649.5 419.4 647.5 419.0 645.5 418.6 643.5 419.5 641.5 419.7 639.5 419.3 637.5 419.8 635.5 419.1 633.5 419.2 631.5 419.8 629.5 419.1 627.5 419.7 625.5 418.9 623.5 419.3Z" fill="#0a7e0a"/><rect x="623.5" y="427.8" width="369.5" height="40.7" rx="1.8" fill="#11cd11"/><path d="M623.5 429.6 Q623.5 427.8 625.3 427.8 L991.2 427.8 Q993 427.8 993 429.6 L993 439.9 L623.5 439.9 Z" fill="#10a810"/><rect x="623.5" y="464" width="369.5" height="3.5" fill="#ffffff" opacity="0.05"/><rect x="623.5" y="446.9" width="369.5" height="1" fill="#0a7e0a" opacity="0.85"/><path d="M623.5 445.0 625.5 444.3 627.5 445.0 629.5 443.9 631.5 444.7 633.5 443.7 635.5 445.0 637.5 444.2 639.5 444.3 641.5 445.6 643.5 444.8 645.5 444.8 647.5 445.3 649.5 445.0 651.5 445.4 653.5 444.2 655.5 445.1 657.5 444.3 659.5 444.0 661.5 444.8 663.5 444.0 665.5 444.5 667.5 444.9 669.5 445.1 671.5 445.5 673.5 445.3 675.5 445.6 677.5 446.3 679.5 445.5 681.5 445.3 683.5 446.2 685.5 446.3 687.5 446.3 689.5 445.8 691.5 445.2 693.5 446.1 695.5 446.3 697.5 446.2 699.5 446.2 701.5 446.3 703.5 446.5 705.5 445.8 707.5 446.2 709.5 445.6 711.5 446.9 713.5 446.2 715.5 445.5 717.5 446.2 719.5 446.6 721.5 446.4 723.5 445.2 725.5 445.1 727.5 444.8 729.5 445.2 731.5 445.4 733.5 444.4 735.5 444.2 737.5 444.9 739.5 444.6 741.5 445.2 743.5 445.0 745.5 445.0 747.5 444.6 749.5 445.2 751.5 445.5 753.5 445.6 755.5 445.2 757.5 444.4 759.5 444.1 761.5 444.0 763.5 443.3 765.5 444.6 767.5 443.6 769.5 444.0 771.5 444.9 773.5 444.5 775.5 445.8 777.5 444.8 779.5 445.7 781.5 445.0 783.5 445.8 785.5 446.2 787.5 446.2 789.5 445.8 791.5 445.2 793.5 445.4 795.5 445.3 797.5 445.4 799.5 445.7 801.5 446.2 803.5 445.2 805.5 446.0 807.5 445.6 809.5 446.1 811.5 446.5 813.5 446.6 815.5 445.7 817.5 445.9 819.5 446.4 821.5 446.5 823.5 445.8 825.5 444.9 827.5 445.6 829.5 445.3 831.5 445.3 833.5 445.4 835.5 444.3 837.5 444.9 839.5 445.2 841.5 444.5 843.5 445.6 845.5 445.3 847.5 444.8 849.5 445.8 851.5 444.5 853.5 445.5 855.5 444.6 857.5 444.4 859.5 444.7 861.5 444.2 863.5 443.4 865.5 443.9 867.5 443.9 869.5 444.5 871.5 444.7 873.5 444.3 875.5 444.3 877.5 445.4 879.5 445.6 881.5 445.0 883.5 445.0 885.5 444.8 887.5 444.9 889.5 445.3 891.5 445.7 893.5 444.9 895.5 444.9 897.5 444.8 899.5 445.1 901.5 445.8 903.5 445.3 905.5 446.4 907.5 445.1 909.5 446.9 911.5 446.2 913.5 446.6 915.5 446.9 917.5 446.7 919.5 446.3 921.5 446.3 923.5 445.1 925.5 445.9 927.5 445.8 929.5 445.1 931.5 444.6 933.5 445.2 935.5 445.8 937.5 444.7 939.5 446.3 941.5 446.4 943.5 445.1 945.5 446.3 947.5 445.3 949.5 445.9 951.5 445.1 953.5 445.3 955.5 445.0 957.5 444.0 959.5 444.7 961.5 444.7 963.5 444.8 965.5 443.8 967.5 444.2 969.5 444.5 971.5 445.1 973.5 444.2 975.5 445.0 977.5 444.3 979.5 445.6 981.5 445.0 983.5 445.9 985.5 444.9 987.5 445.1 989.5 445.2 991.5 444.7 991.5 449.7 989.5 449.3 987.5 449.3 985.5 449.5 983.5 448.6 981.5 449.4 979.5 448.9 977.5 450.0 975.5 449.4 973.5 450.1 971.5 449.4 969.5 449.9 967.5 450.2 965.5 450.5 963.5 449.6 961.5 449.7 959.5 449.7 957.5 450.3 955.5 449.5 953.5 449.2 951.5 449.4 949.5 448.7 947.5 449.2 945.5 448.4 943.5 449.3 941.5 448.3 939.5 448.4 937.5 449.7 935.5 448.7 933.5 449.3 931.5 449.8 929.5 449.3 927.5 448.8 925.5 448.7 923.5 449.4 921.5 448.4 919.5 448.4 917.5 448.0 915.5 447.8 913.5 448.1 911.5 448.4 909.5 447.8 907.5 449.3 905.5 448.2 903.5 449.2 901.5 448.7 899.5 449.4 897.5 449.6 895.5 449.5 893.5 449.5 891.5 448.8 889.5 449.2 887.5 449.5 885.5 449.6 883.5 449.4 881.5 449.5 879.5 448.9 877.5 449.1 875.5 450.1 873.5 450.0 871.5 449.7 869.5 449.9 867.5 450.4 865.5 450.4 863.5 450.8 861.5 450.1 859.5 449.7 857.5 450.0 855.5 449.7 853.5 449.0 851.5 449.8 849.5 448.8 847.5 449.6 845.5 449.2 843.5 448.9 841.5 449.9 839.5 449.2 837.5 449.5 835.5 450.0 833.5 449.1 831.5 449.2 829.5 449.2 827.5 448.9 825.5 449.5 823.5 448.8 821.5 448.1 819.5 448.3 817.5 448.7 815.5 448.8 813.5 448.1 811.5 448.1 809.5 448.5 807.5 448.9 805.5 448.6 803.5 449.3 801.5 448.4 799.5 448.9 797.5 449.1 795.5 449.2 793.5 449.1 791.5 449.3 789.5 448.7 787.5 448.4 785.5 448.4 783.5 448.7 781.5 449.4 779.5 448.9 777.5 449.6 775.5 448.8 773.5 449.9 771.5 449.5 769.5 450.3 767.5 450.6 765.5 449.8 763.5 450.9 761.5 450.3 759.5 450.2 757.5 450.0 755.5 449.2 753.5 449.0 751.5 449.0 749.5 449.3 747.5 449.8 745.5 449.4 743.5 449.4 741.5 449.2 739.5 449.8 737.5 449.6 735.5 450.1 733.5 450.0 731.5 449.1 729.5 449.2 727.5 449.6 725.5 449.3 723.5 449.3 721.5 448.3 719.5 448.1 717.5 448.4 715.5 449.0 713.5 448.4 711.5 447.8 709.5 448.9 707.5 448.4 705.5 448.7 703.5 448.1 701.5 448.3 699.5 448.4 697.5 448.4 695.5 448.4 693.5 448.5 691.5 449.2 689.5 448.8 687.5 448.3 685.5 448.4 683.5 448.4 681.5 449.2 679.5 449.0 677.5 448.3 675.5 448.9 673.5 449.2 671.5 449.0 669.5 449.3 667.5 449.5 665.5 449.9 663.5 450.3 661.5 449.6 659.5 450.3 657.5 450.0 655.5 449.3 653.5 450.1 651.5 449.1 649.5 449.5 647.5 449.2 645.5 449.6 643.5 449.6 641.5 449.0 639.5 450.0 637.5 450.1 635.5 449.4 633.5 450.5 631.5 449.7 629.5 450.3 627.5 449.4 625.5 450.1 623.5 449.4Z" fill="#0a7e0a"/><rect x="623.5" y="459.7" width="369.5" height="1" fill="#0a7e0a" opacity="0.85"/><path d="M623.5 457.9 625.5 457.2 627.5 457.8 629.5 456.7 631.5 457.3 633.5 456.5 635.5 457.7 637.5 457.2 639.5 457.0 641.5 458.5 643.5 457.6 645.5 457.5 647.5 458.2 649.5 457.8 651.5 458.2 653.5 457.1 655.5 457.9 657.5 457.3 659.5 456.9 661.5 457.6 663.5 456.6 665.5 457.3 667.5 457.5 669.5 457.9 671.5 458.3 673.5 458.1 675.5 458.5 677.5 459.1 679.5 458.3 681.5 458.2 683.5 459.0 685.5 459.1 687.5 459.1 689.5 458.5 691.5 458.0 693.5 458.9 695.5 459.0 697.5 459.0 699.5 459.0 701.5 459.1 703.5 459.3 705.5 458.7 707.5 459.0 709.5 458.5 711.5 459.7 713.5 459.0 715.5 458.3 717.5 459.0 719.5 459.4 721.5 459.2 723.5 458.1 725.5 457.8 727.5 457.6 729.5 458.2 731.5 458.1 733.5 457.2 735.5 456.8 737.5 457.6 739.5 457.3 741.5 457.9 743.5 458.0 745.5 457.7 747.5 457.6 749.5 458.0 751.5 458.2 753.5 458.5 755.5 457.8 757.5 457.5 759.5 456.8 761.5 456.9 763.5 456.2 765.5 457.4 767.5 456.3 769.5 456.7 771.5 457.8 773.5 457.4 775.5 458.5 777.5 457.8 779.5 458.5 781.5 457.8 783.5 458.5 785.5 459.1 787.5 458.9 789.5 458.7 791.5 457.9 793.5 458.2 795.5 458.2 797.5 458.1 799.5 458.4 801.5 458.9 803.5 457.9 805.5 458.7 807.5 458.4 809.5 458.9 811.5 459.4 813.5 459.4 815.5 458.6 817.5 458.8 819.5 459.1 821.5 459.3 823.5 458.6 825.5 457.7 827.5 458.4 829.5 458.2 831.5 458.2 833.5 458.1 835.5 457.3 837.5 457.6 839.5 458.0 841.5 457.4 843.5 458.3 845.5 458.1 847.5 457.4 849.5 458.6 851.5 457.3 853.5 458.3 855.5 457.5 857.5 457.0 859.5 457.5 861.5 457.2 863.5 456.3 865.5 456.7 867.5 456.5 869.5 457.4 871.5 457.5 873.5 456.9 875.5 457.1 877.5 458.2 879.5 458.5 881.5 457.7 883.5 458.0 885.5 457.5 887.5 457.9 889.5 458.2 891.5 458.5 893.5 457.8 895.5 457.8 897.5 457.6 899.5 457.9 901.5 458.6 903.5 458.1 905.5 459.2 907.5 457.9 909.5 459.7 911.5 459.1 913.5 459.4 915.5 459.7 917.5 459.4 919.5 459.1 921.5 459.2 923.5 457.8 925.5 458.7 927.5 458.6 929.5 457.8 931.5 457.3 933.5 457.9 935.5 458.7 937.5 457.2 939.5 459.0 941.5 459.1 943.5 457.9 945.5 459.0 947.5 458.1 949.5 458.6 951.5 457.9 953.5 458.0 955.5 457.7 957.5 456.5 959.5 457.3 961.5 457.5 963.5 457.7 965.5 456.6 967.5 457.0 969.5 457.4 971.5 457.8 973.5 457.0 975.5 457.9 977.5 457.0 979.5 458.4 981.5 457.9 983.5 458.8 985.5 457.7 987.5 457.9 989.5 458.1 991.5 457.5 991.5 462.5 989.5 462.0 987.5 462.1 985.5 462.3 983.5 461.4 981.5 462.2 979.5 461.8 977.5 462.9 975.5 462.2 973.5 462.9 971.5 462.2 969.5 462.6 967.5 463.0 965.5 463.2 963.5 462.4 961.5 462.5 959.5 462.6 957.5 463.3 955.5 462.3 953.5 462.1 951.5 462.1 949.5 461.6 947.5 462.0 945.5 461.2 943.5 462.2 941.5 461.1 939.5 461.2 937.5 462.7 935.5 461.5 933.5 462.1 931.5 462.7 929.5 462.2 927.5 461.6 925.5 461.5 923.5 462.2 921.5 461.1 919.5 461.1 917.5 460.9 915.5 460.6 913.5 460.9 911.5 461.2 909.5 460.6 907.5 462.2 905.5 461.1 903.5 462.0 901.5 461.6 899.5 462.2 897.5 462.4 895.5 462.2 893.5 462.3 891.5 461.6 889.5 461.9 887.5 462.2 885.5 462.5 883.5 462.1 881.5 462.3 879.5 461.7 877.5 461.9 875.5 462.8 873.5 463.0 871.5 462.5 869.5 462.5 867.5 463.3 865.5 463.2 863.5 463.5 861.5 462.8 859.5 462.5 857.5 462.9 855.5 462.5 853.5 461.8 851.5 462.7 849.5 461.6 847.5 462.6 845.5 462.0 843.5 461.8 841.5 462.6 839.5 462.1 837.5 462.4 835.5 462.7 833.5 462.0 831.5 461.9 829.5 461.9 827.5 461.7 825.5 462.3 823.5 461.5 821.5 461.0 819.5 461.2 817.5 461.4 815.5 461.6 813.5 460.9 811.5 460.9 809.5 461.3 807.5 461.7 805.5 461.5 803.5 462.1 801.5 461.3 799.5 461.8 797.5 462.0 795.5 461.9 793.5 461.9 791.5 462.2 789.5 461.5 787.5 461.3 785.5 461.1 783.5 461.6 781.5 462.2 779.5 461.7 777.5 462.3 775.5 461.6 773.5 462.6 771.5 462.3 769.5 463.2 767.5 463.5 765.5 462.6 763.5 463.6 761.5 463.0 759.5 463.1 757.5 462.5 755.5 462.2 753.5 461.7 751.5 461.9 749.5 462.0 747.5 462.4 745.5 462.3 743.5 462.1 741.5 462.2 739.5 462.6 737.5 462.4 735.5 463.1 733.5 462.8 731.5 462.0 729.5 461.9 727.5 462.4 725.5 462.2 723.5 462.0 721.5 461.0 719.5 460.9 717.5 461.3 715.5 461.8 713.5 461.2 711.5 460.6 709.5 461.7 707.5 461.2 705.5 461.5 703.5 461.0 701.5 461.1 699.5 461.2 697.5 461.2 695.5 461.2 693.5 461.3 691.5 462.0 689.5 461.7 687.5 461.1 685.5 461.1 683.5 461.2 681.5 461.9 679.5 461.8 677.5 461.1 675.5 461.6 673.5 462.0 671.5 461.8 669.5 462.2 667.5 462.5 665.5 462.7 663.5 463.3 661.5 462.4 659.5 463.0 657.5 462.6 655.5 462.2 653.5 462.8 651.5 461.9 649.5 462.3 647.5 461.9 645.5 462.5 643.5 462.4 641.5 461.7 639.5 462.9 637.5 462.8 635.5 462.3 633.5 463.3 631.5 462.7 629.5 463.2 627.5 462.2 625.5 462.8 623.5 462.2Z" fill="#0a7e0a"/><rect x="250" y="470.8" width="371.5" height="40.7" rx="1.8" fill="#e43a4b"/><path d="M250 472.6 Q250 470.8 251.8 470.8 L619.7 470.8 Q621.5 470.8 621.5 472.6 L621.5 482.9 L250 482.9 Z" fill="#c52f3e"/><rect x="250" y="507" width="371.5" height="3.5" fill="#ffffff" opacity="0.05"/><rect x="250" y="489.9" width="371.5" height="1" fill="#a42838" opacity="0.85"/><path d="M250 488.4 252 489.0 254 489.2 256 488.4 258 488.6 260 488.8 262 488.6 264 488.3 266 488.4 268 489.0 270 488.9 272 489.3 274 488.7 276 488.9 278 488.6 280 489.0 282 488.4 284 489.2 286 488.7 288 488.8 290 489.2 292 488.6 294 488.7 296 489.2 298 489.4 300 488.6 302 488.6 304 489.3 306 489.4 308 489.0 310 488.9 312 489.0 314 489.3 316 488.9 318 488.8 320 488.7 322 488.9 324 489.5 326 489.4 328 489.4 330 489.2 332 490.4 334 490.4 336 490.4 338 490.4 340 490.4 342 490.4 344 490.4 346 490.4 348 490.4 350 490.4 352 490.4 354 490.4 356 490.4 358 488.5 360 488.7 362 489.1 364 489.4 366 488.4 368 488.9 370 489.0 372 488.7 374 488.8 376 489.0 378 489.0 380 489.0 382 489.2 384 488.8 386 489.0 388 488.7 390 488.6 392 488.7 394 488.7 396 488.6 398 489.2 400 488.9 402 488.7 404 488.0 406 488.6 408 489.0 410 489.1 412 488.6 414 488.4 416 489.0 418 488.3 420 488.9 422 488.0 424 489.1 426 489.2 428 488.9 430 488.4 432 488.9 434 488.6 436 488.4 438 488.4 440 488.2 442 488.3 444 488.6 446 489.1 448 488.4 450 488.2 452 488.6 454 488.7 456 489.2 458 489.3 460 488.9 462 489.0 464 488.7 466 489.2 468 489.1 470 488.9 472 489.1 474 488.4 476 489.4 478 489.4 480 488.7 482 488.8 484 488.2 486 488.3 488 488.8 490 489.2 492 487.9 494 488.4 496 488.8 498 489.1 500 488.2 502 488.2 504 488.6 506 488.9 508 489.2 510 489.4 512 488.5 514 489.0 516 489.2 518 488.6 520 488.5 522 488.6 524 488.5 526 489.2 528 488.7 530 488.6 532 489.1 534 490.4 536 490.4 538 490.4 540 490.4 542 490.4 544 490.4 546 490.4 548 490.4 550 490.4 552 490.4 554 490.4 556 490.4 558 490.4 560 488.5 562 488.8 564 489.2 566 489.4 568 488.7 570 488.6 572 489.1 574 489.4 576 488.6 578 488.4 580 488.7 582 488.7 584 488.5 586 488.8 588 488.4 590 488.7 592 489.0 594 488.4 596 488.4 598 488.9 600 488.8 602 489.1 604 488.6 606 488.9 608 488.7 610 489.1 612 488.1 614 488.7 616 488.5 618 488.7 620 489.2 620 491.4 618 491.8 616 492.0 614 491.9 612 492.3 610 491.5 608 491.8 606 491.7 604 491.9 602 491.5 600 491.7 598 491.6 596 492.1 594 492.1 592 491.6 590 491.8 588 492.1 586 491.7 584 492.0 582 491.8 580 491.9 578 492.1 576 491.9 574 491.3 572 491.5 570 491.9 568 491.9 566 491.2 564 491.4 562 491.8 560 492.0 558 490.4 556 490.4 554 490.4 552 490.4 550 490.4 548 490.4 546 490.4 544 490.4 542 490.4 540 490.4 538 490.4 536 490.4 534 490.4 532 491.5 530 491.9 528 491.8 526 491.4 524 492.0 522 492.0 520 492.0 518 492.0 516 491.4 514 491.6 512 492.0 510 491.3 508 491.4 506 491.7 504 492.0 502 492.2 500 492.3 498 491.5 496 491.8 494 492.1 492 492.5 490 491.4 488 491.8 486 492.2 484 492.3 482 491.7 480 491.8 478 491.3 476 491.3 474 492.1 472 491.5 470 491.7 468 491.5 466 491.4 464 491.8 462 491.6 460 491.7 458 491.3 456 491.5 454 491.8 452 491.9 450 492.3 448 492.1 446 491.5 444 492.0 442 492.2 440 492.3 438 492.1 436 492.1 434 492.0 432 491.6 430 492.1 428 491.7 426 491.4 424 491.5 422 492.4 420 491.7 418 492.2 416 491.6 414 492.1 412 492.0 410 491.5 408 491.6 406 492.0 404 492.4 402 491.9 400 491.7 398 491.4 396 491.9 394 491.8 392 491.9 390 491.9 388 491.8 386 491.6 384 491.7 382 491.4 380 491.6 378 491.6 376 491.6 374 491.8 372 491.9 370 491.6 368 491.6 366 492.1 364 491.3 362 491.5 360 491.8 358 492.0 356 490.4 354 490.4 352 490.4 350 490.4 348 490.4 346 490.4 344 490.4 342 490.4 340 490.4 338 490.4 336 490.4 334 490.4 332 490.4 330 491.4 328 491.3 326 491.2 324 491.2 322 491.7 320 491.8 318 491.7 316 491.7 314 491.3 312 491.6 310 491.6 308 491.6 306 491.3 304 491.4 302 491.9 300 491.9 298 491.3 296 491.4 294 491.8 292 491.9 290 491.4 288 491.7 286 491.8 284 491.4 282 492.1 280 491.6 278 491.9 276 491.7 274 491.8 272 491.3 270 491.7 268 491.6 266 492.1 264 492.2 262 491.9 260 491.8 258 492.0 256 492.1 254 491.4 252 491.6 250 492.1Z" fill="#a42838"/><rect x="250" y="502.7" width="371.5" height="1" fill="#a42838" opacity="0.85"/><path d="M250 501.3 252 501.7 254 502.0 256 501.1 258 501.2 260 501.6 262 501.4 264 501.0 266 501.3 268 501.7 270 501.7 272 502.1 274 501.4 276 501.7 278 501.4 280 501.8 282 501.2 284 502.1 286 501.4 288 501.5 290 502.1 292 501.2 294 501.5 296 502.1 298 502.2 300 501.5 302 501.5 304 502.2 306 502.2 308 501.8 310 501.7 312 501.9 314 502.2 316 501.7 318 501.5 320 501.5 322 501.7 324 502.3 326 502.3 328 502.2 330 501.9 332 503.2 334 503.2 336 503.2 338 503.2 340 503.2 342 503.2 344 503.2 346 503.2 348 503.2 350 503.2 352 503.2 354 503.2 356 503.2 358 501.4 360 501.4 362 501.9 364 502.2 366 501.4 368 501.7 370 501.8 372 501.5 374 501.6 376 501.8 378 501.8 380 501.9 382 502.0 384 501.7 386 501.8 388 501.4 390 501.5 392 501.4 394 501.5 396 501.4 398 502.0 400 501.7 402 501.4 404 500.7 406 501.3 408 501.8 410 501.9 412 501.4 414 501.3 416 501.8 418 501.1 420 501.7 422 500.8 424 501.9 426 502.1 428 501.8 430 501.3 432 501.8 434 501.2 436 501.2 438 501.3 440 501.0 442 501.1 444 501.4 446 501.9 448 501.2 450 501.0 452 501.4 454 501.7 456 502.0 458 502.2 460 501.8 462 501.8 464 501.5 466 502.0 468 501.8 470 501.7 472 501.9 474 501.4 476 502.2 478 502.1 480 501.6 482 501.7 484 501.0 486 501.2 488 501.7 490 501.9 492 500.8 494 501.3 496 501.6 498 502.0 500 500.9 502 501.2 504 501.3 506 501.7 508 502.1 510 502.2 512 501.2 514 501.8 516 502.1 518 501.4 520 501.5 522 501.4 524 501.3 526 502.1 528 501.5 530 501.4 532 501.9 534 503.2 536 503.2 538 503.2 540 503.2 542 503.2 544 503.2 546 503.2 548 503.2 550 503.2 552 503.2 554 503.2 556 503.2 558 503.2 560 501.4 562 501.6 564 502.0 566 502.2 568 501.5 570 501.5 572 501.8 574 502.2 576 501.3 578 501.3 580 501.5 582 501.6 584 501.4 586 501.6 588 501.2 590 501.5 592 501.8 594 501.3 596 501.3 598 501.7 600 501.6 602 502.0 604 501.4 606 501.7 608 501.4 610 501.8 612 501.1 614 501.5 616 501.4 618 501.5 620 501.9 620 504.3 618 504.6 616 504.7 614 504.6 612 505.0 610 504.4 608 504.7 606 504.5 604 504.7 602 504.2 600 504.6 598 504.5 596 504.8 594 504.8 592 504.4 590 504.7 588 504.9 586 504.5 584 504.7 582 504.5 580 504.7 578 504.8 576 504.8 574 504.1 572 504.4 570 504.7 568 504.7 566 504.0 564 504.2 562 504.5 560 504.7 558 503.2 556 503.2 554 503.2 552 503.2 550 503.2 548 503.2 546 503.2 544 503.2 542 503.2 540 503.2 538 503.2 536 503.2 534 503.2 532 504.3 530 504.8 528 504.6 526 504.1 524 504.8 522 504.7 520 504.7 518 504.7 516 504.2 514 504.4 512 504.9 510 504.0 508 504.2 506 504.4 504 504.8 502 504.9 500 505.1 498 504.2 496 504.5 494 504.8 492 505.3 490 504.3 488 504.5 486 504.9 484 505.1 482 504.5 480 504.6 478 504.1 476 504.0 474 504.8 472 504.3 470 504.5 468 504.4 466 504.3 464 504.6 462 504.4 460 504.4 458 504.0 456 504.2 454 504.5 452 504.7 450 505.1 448 504.9 446 504.3 444 504.8 442 504.9 440 505.1 438 504.8 436 504.9 434 504.9 432 504.4 430 504.8 428 504.4 426 504.1 424 504.3 422 505.2 420 504.5 418 505.0 416 504.4 414 504.8 412 504.7 410 504.3 408 504.4 406 504.8 404 505.4 402 504.8 400 504.5 398 504.2 396 504.7 394 504.6 392 504.7 390 504.6 388 504.7 386 504.4 384 504.5 382 504.2 380 504.3 378 504.4 376 504.4 374 504.6 372 504.7 370 504.4 368 504.5 366 504.8 364 504.0 362 504.3 360 504.8 358 504.8 356 503.2 354 503.2 352 503.2 350 503.2 348 503.2 346 503.2 344 503.2 342 503.2 340 503.2 338 503.2 336 503.2 334 503.2 332 503.2 330 504.3 328 504.1 326 504.0 324 504.0 322 504.5 320 504.6 318 504.6 316 504.5 314 504.1 312 504.3 310 504.5 308 504.4 306 504.1 304 504.1 302 504.6 300 504.7 298 504.1 296 504.2 294 504.7 292 504.9 290 504.2 288 504.6 286 504.8 284 504.2 282 504.9 280 504.4 278 504.7 276 504.5 274 504.7 272 504.1 270 504.5 268 504.4 266 504.8 264 505.1 262 504.7 260 504.6 258 504.9 256 505.0 254 504.2 252 504.5 250 504.8Z" fill="#a42838"/><rect x="623.5" y="470.8" width="369.5" height="40.7" rx="1.8" fill="#e43a4b"/><path d="M623.5 472.6 Q623.5 470.8 625.3 470.8 L991.2 470.8 Q993 470.8 993 472.6 L993 482.9 L623.5 482.9 Z" fill="#c52f3e"/><rect x="623.5" y="507" width="369.5" height="3.5" fill="#ffffff" opacity="0.05"/><rect x="623.5" y="489.9" width="369.5" height="1" fill="#a42838" opacity="0.85"/><path d="M623.5 487.9 625.5 488.4 627.5 489.0 629.5 487.7 631.5 488.5 633.5 488.2 635.5 488.6 637.5 488.5 639.5 488.1 641.5 488.1 643.5 487.8 645.5 488.9 647.5 488.0 649.5 488.7 651.5 487.9 653.5 488.1 655.5 488.9 657.5 488.7 659.5 490.4 661.5 490.4 663.5 490.4 665.5 490.4 667.5 490.4 669.5 490.4 671.5 490.4 673.5 490.4 675.5 490.4 677.5 488.2 679.5 488.4 681.5 488.8 683.5 489.2 685.5 488.5 687.5 488.2 689.5 488.9 691.5 489.2 693.5 488.9 695.5 488.4 697.5 488.5 699.5 489.0 701.5 488.1 703.5 488.4 705.5 488.5 707.5 488.5 709.5 488.8 711.5 489.1 713.5 489.4 715.5 488.3 717.5 488.9 719.5 488.8 721.5 488.7 723.5 489.2 725.5 488.4 727.5 488.3 729.5 488.8 731.5 488.5 733.5 488.6 735.5 490.4 737.5 490.4 739.5 490.4 741.5 490.4 743.5 490.4 745.5 490.4 747.5 490.4 749.5 490.4 751.5 490.4 753.5 490.4 755.5 490.4 757.5 490.4 759.5 490.4 761.5 488.6 763.5 488.9 765.5 489.3 767.5 488.7 769.5 488.6 771.5 488.7 773.5 489.2 775.5 488.5 777.5 489.0 779.5 489.0 781.5 488.8 783.5 489.3 785.5 489.2 787.5 489.4 789.5 489.1 791.5 489.3 793.5 488.8 795.5 489.3 797.5 488.7 799.5 489.1 801.5 489.2 803.5 488.7 805.5 487.9 807.5 488.5 809.5 488.7 811.5 487.8 813.5 488.0 815.5 488.8 817.5 488.6 819.5 488.0 821.5 488.7 823.5 488.1 825.5 488.4 827.5 488.8 829.5 488.8 831.5 488.6 833.5 488.2 835.5 488.6 837.5 487.9 839.5 487.8 841.5 488.4 843.5 488.1 845.5 487.6 847.5 487.4 849.5 487.4 851.5 488.1 853.5 487.8 855.5 487.9 857.5 488.5 859.5 488.7 861.5 489.1 863.5 488.5 865.5 488.6 867.5 488.8 869.5 488.6 871.5 488.4 873.5 488.7 875.5 489.2 877.5 488.4 879.5 488.9 881.5 489.0 883.5 488.9 885.5 488.9 887.5 489.0 889.5 488.6 891.5 488.8 893.5 488.6 895.5 488.4 897.5 488.4 899.5 489.2 901.5 488.5 903.5 488.3 905.5 488.9 907.5 489.2 909.5 489.2 911.5 488.9 913.5 488.2 915.5 489.0 917.5 489.2 919.5 488.2 921.5 488.8 923.5 488.6 925.5 488.4 927.5 488.4 929.5 488.8 931.5 488.9 933.5 489.2 935.5 489.3 937.5 488.4 939.5 488.6 941.5 488.3 943.5 489.2 945.5 488.3 947.5 488.7 949.5 489.0 951.5 488.4 953.5 488.7 955.5 488.7 957.5 488.5 959.5 488.7 961.5 488.2 963.5 488.5 965.5 488.8 967.5 489.3 969.5 488.5 971.5 488.6 973.5 488.7 975.5 489.4 977.5 489.3 979.5 488.8 981.5 488.7 983.5 488.8 985.5 488.5 987.5 489.0 989.5 489.3 991.5 490.4 991.5 490.4 989.5 491.3 987.5 491.6 985.5 492.0 983.5 491.8 981.5 491.8 979.5 491.7 977.5 491.4 975.5 491.2 973.5 491.8 971.5 491.9 969.5 492.0 967.5 491.3 965.5 491.7 963.5 492.0 961.5 492.3 959.5 491.8 957.5 492.0 955.5 491.9 953.5 491.9 951.5 492.1 949.5 491.6 947.5 491.8 945.5 492.2 943.5 491.4 941.5 492.2 939.5 492.0 937.5 492.1 935.5 491.3 933.5 491.4 931.5 491.6 929.5 491.8 927.5 492.1 925.5 492.1 923.5 491.9 921.5 491.8 919.5 492.3 917.5 491.5 915.5 491.6 913.5 492.3 911.5 491.7 909.5 491.4 907.5 491.4 905.5 491.7 903.5 492.2 901.5 492.0 899.5 491.4 897.5 492.1 895.5 492.1 893.5 491.9 891.5 491.8 889.5 491.9 887.5 491.6 885.5 491.7 883.5 491.7 881.5 491.6 879.5 491.7 877.5 492.1 875.5 491.4 873.5 491.9 871.5 492.1 869.5 491.9 867.5 491.8 865.5 492.0 863.5 492.0 861.5 491.5 859.5 491.8 857.5 492.0 855.5 492.5 853.5 492.6 851.5 492.3 849.5 492.9 847.5 493.0 845.5 492.8 843.5 492.3 841.5 492.1 839.5 492.6 837.5 492.6 835.5 492.0 833.5 492.2 831.5 492.0 829.5 491.8 827.5 491.8 825.5 492.1 823.5 492.4 821.5 491.9 819.5 492.4 817.5 492.0 815.5 491.8 813.5 492.4 811.5 492.6 809.5 491.9 807.5 492.0 805.5 492.5 803.5 491.8 801.5 491.4 799.5 491.5 797.5 491.8 795.5 491.3 793.5 491.8 791.5 491.3 789.5 491.5 787.5 491.2 785.5 491.4 783.5 491.3 781.5 491.7 779.5 491.6 777.5 491.6 775.5 492.0 773.5 491.4 771.5 491.9 769.5 492.0 767.5 491.8 765.5 491.4 763.5 491.7 761.5 492.0 759.5 490.4 757.5 490.4 755.5 490.4 753.5 490.4 751.5 490.4 749.5 490.4 747.5 490.4 745.5 490.4 743.5 490.4 741.5 490.4 739.5 490.4 737.5 490.4 735.5 490.4 733.5 492.0 731.5 492.0 729.5 491.8 727.5 492.2 725.5 492.1 723.5 491.4 721.5 491.8 719.5 491.8 717.5 491.7 715.5 492.2 713.5 491.3 711.5 491.5 709.5 491.7 707.5 492.0 705.5 492.0 703.5 492.1 701.5 492.4 699.5 491.6 697.5 492.0 695.5 492.1 693.5 491.7 691.5 491.4 689.5 491.6 687.5 492.2 685.5 492.1 683.5 491.4 681.5 491.8 679.5 492.1 677.5 492.3 675.5 490.4 673.5 490.4 671.5 490.4 669.5 490.4 667.5 490.4 665.5 490.4 663.5 490.4 661.5 490.4 659.5 490.4 657.5 491.8 655.5 491.7 653.5 492.3 651.5 492.5 649.5 491.9 647.5 492.5 645.5 491.7 643.5 492.6 641.5 492.3 639.5 492.4 637.5 492.0 635.5 491.9 633.5 492.3 631.5 492.0 629.5 492.7 627.5 491.6 625.5 492.1 623.5 492.5Z" fill="#a42838"/><rect x="623.5" y="502.7" width="369.5" height="1" fill="#a42838" opacity="0.85"/><path d="M623.5 500.5 625.5 501.3 627.5 501.8 629.5 500.7 631.5 501.1 633.5 500.8 635.5 501.5 637.5 501.3 639.5 501.0 641.5 500.8 643.5 500.8 645.5 501.7 647.5 500.6 649.5 501.6 651.5 500.7 653.5 500.9 655.5 501.7 657.5 501.4 659.5 503.2 661.5 503.2 663.5 503.2 665.5 503.2 667.5 503.2 669.5 503.2 671.5 503.2 673.5 503.2 675.5 503.2 677.5 500.9 679.5 501.2 681.5 501.5 683.5 502.1 685.5 501.4 687.5 501.1 689.5 501.8 691.5 502.0 693.5 501.8 695.5 501.2 697.5 501.2 699.5 501.7 701.5 501.0 703.5 501.2 705.5 501.4 707.5 501.4 709.5 501.6 711.5 501.8 713.5 502.2 715.5 501.2 717.5 501.6 719.5 501.6 721.5 501.5 723.5 502.0 725.5 501.1 727.5 501.2 729.5 501.5 731.5 501.3 733.5 501.5 735.5 503.2 737.5 503.2 739.5 503.2 741.5 503.2 743.5 503.2 745.5 503.2 747.5 503.2 749.5 503.2 751.5 503.2 753.5 503.2 755.5 503.2 757.5 503.2 759.5 503.2 761.5 501.4 763.5 501.7 765.5 502.1 767.5 501.5 769.5 501.3 771.5 501.4 773.5 502.1 775.5 501.3 777.5 501.7 779.5 501.8 781.5 501.7 783.5 502.1 785.5 502.0 787.5 502.2 789.5 501.9 791.5 502.1 793.5 501.5 795.5 502.2 797.5 501.5 799.5 501.9 801.5 501.9 803.5 501.5 805.5 500.8 807.5 501.3 809.5 501.6 811.5 500.6 813.5 500.8 815.5 501.6 817.5 501.2 819.5 500.9 821.5 501.6 823.5 501.1 825.5 501.3 827.5 501.7 829.5 501.5 831.5 501.4 833.5 501.2 835.5 501.3 837.5 500.5 839.5 500.8 841.5 501.1 843.5 500.8 845.5 500.5 847.5 500.3 849.5 500.3 851.5 500.9 853.5 500.5 855.5 500.6 857.5 501.1 859.5 501.5 861.5 501.9 863.5 501.2 865.5 501.4 867.5 501.6 869.5 501.5 871.5 501.4 873.5 501.5 875.5 502.0 877.5 501.2 879.5 501.5 881.5 501.7 883.5 501.5 885.5 501.8 887.5 501.8 889.5 501.5 891.5 501.6 893.5 501.4 895.5 501.1 897.5 501.3 899.5 502.0 901.5 501.3 903.5 501.0 905.5 501.8 907.5 501.8 909.5 502.0 911.5 501.6 913.5 501.0 915.5 501.8 917.5 501.9 919.5 501.0 921.5 501.6 923.5 501.4 925.5 501.3 927.5 501.2 929.5 501.5 931.5 501.8 933.5 502.1 935.5 502.1 937.5 501.2 939.5 501.4 941.5 501.1 943.5 502.0 945.5 501.1 947.5 501.5 949.5 501.9 951.5 501.2 953.5 501.5 955.5 501.5 957.5 501.3 959.5 501.4 961.5 501.1 963.5 501.4 965.5 501.6 967.5 502.1 969.5 501.3 971.5 501.3 973.5 501.6 975.5 502.1 977.5 502.0 979.5 501.6 981.5 501.4 983.5 501.5 985.5 501.3 987.5 501.7 989.5 502.1 991.5 503.2 991.5 503.2 989.5 504.1 987.5 504.5 985.5 504.8 983.5 504.7 981.5 504.7 979.5 504.6 977.5 504.2 975.5 504.1 973.5 504.6 971.5 504.8 969.5 504.8 967.5 504.1 965.5 504.6 963.5 504.8 961.5 505.0 959.5 504.8 957.5 504.8 955.5 504.7 953.5 504.7 951.5 504.9 949.5 504.3 947.5 504.6 945.5 505.0 943.5 504.2 941.5 505.0 939.5 504.7 937.5 504.9 935.5 504.1 933.5 504.2 931.5 504.4 929.5 504.6 927.5 504.9 925.5 504.8 923.5 504.7 921.5 504.6 919.5 505.0 917.5 504.3 915.5 504.4 913.5 505.1 911.5 504.6 909.5 504.2 907.5 504.4 905.5 504.4 903.5 505.0 901.5 504.8 899.5 504.2 897.5 504.8 895.5 504.9 893.5 504.7 891.5 504.6 889.5 504.7 887.5 504.4 885.5 504.4 883.5 504.6 881.5 504.4 879.5 504.6 877.5 504.9 875.5 504.2 873.5 504.6 871.5 504.8 869.5 504.7 867.5 504.6 865.5 504.7 863.5 504.9 861.5 504.3 859.5 504.6 857.5 505.0 855.5 505.4 853.5 505.5 851.5 505.2 849.5 505.7 847.5 505.6 845.5 505.5 843.5 505.2 841.5 505.0 839.5 505.3 837.5 505.5 835.5 504.8 833.5 504.9 831.5 504.8 829.5 504.6 827.5 504.5 825.5 504.8 823.5 505.0 821.5 504.6 819.5 505.1 817.5 504.9 815.5 504.6 813.5 505.2 811.5 505.4 809.5 504.6 807.5 504.8 805.5 505.2 803.5 504.7 801.5 504.3 799.5 504.3 797.5 504.6 795.5 504.1 793.5 504.7 791.5 504.1 789.5 504.3 787.5 504.0 785.5 504.2 783.5 504.1 781.5 504.4 779.5 504.4 777.5 504.5 775.5 504.9 773.5 504.1 771.5 504.7 769.5 504.8 767.5 504.6 765.5 504.2 763.5 504.4 761.5 504.7 759.5 503.2 757.5 503.2 755.5 503.2 753.5 503.2 751.5 503.2 749.5 503.2 747.5 503.2 745.5 503.2 743.5 503.2 741.5 503.2 739.5 503.2 737.5 503.2 735.5 503.2 733.5 504.7 731.5 504.8 729.5 504.6 727.5 504.9 725.5 505.0 723.5 504.2 721.5 504.6 719.5 504.6 717.5 504.5 715.5 504.9 713.5 504.1 711.5 504.4 709.5 504.5 707.5 504.8 705.5 504.7 703.5 504.9 701.5 505.1 699.5 504.4 697.5 504.9 695.5 504.9 693.5 504.4 691.5 504.2 689.5 504.4 687.5 505.0 685.5 504.7 683.5 504.2 681.5 504.6 679.5 504.9 677.5 505.1 675.5 503.2 673.5 503.2 671.5 503.2 669.5 503.2 667.5 503.2 665.5 503.2 663.5 503.2 661.5 503.2 659.5 503.2 657.5 504.7 655.5 504.4 653.5 505.2 651.5 505.3 649.5 504.6 647.5 505.4 645.5 504.5 643.5 505.2 641.5 505.2 639.5 505.1 637.5 504.8 635.5 504.7 633.5 505.3 631.5 505.0 629.5 505.4 627.5 504.4 625.5 504.8 623.5 505.5Z" fill="#a42838"/><rect x="250" y="513.8" width="371.5" height="40.7" rx="1.8" fill="#5252da"/><path d="M250 515.6 Q250 513.8 251.8 513.8 L619.7 513.8 Q621.5 513.8 621.5 515.6 L621.5 525.9 L250 525.9 Z" fill="#4646bd"/><rect x="250" y="550" width="371.5" height="3.5" fill="#ffffff" opacity="0.05"/><rect x="250" y="532.9" width="371.5" height="1" fill="#3939a2" opacity="0.85"/><path d="M250 530.7 252 531.5 254 532.3 256 533.0 258 533.4 260 533.4 262 530.4 264 531.2 266 532.1 268 533.0 270 533.4 272 533.4 274 530.7 276 531.4 278 532.2 280 533.0 282 533.4 284 533.4 286 533.4 288 533.4 290 533.4 292 533.4 294 533.4 296 533.4 298 530.5 300 531.2 302 532.1 304 533.0 306 533.4 308 533.4 310 533.4 312 533.4 314 533.4 316 533.4 318 533.4 320 533.4 322 530.4 324 531.2 326 532.1 328 533.0 330 533.4 332 533.4 334 530.7 336 531.6 338 532.3 340 533.0 342 533.4 344 533.4 346 533.4 348 533.4 350 533.4 352 533.4 354 533.4 356 530.5 358 531.0 360 531.9 362 532.6 364 533.4 366 533.4 368 530.8 370 531.1 372 531.9 374 532.6 376 533.4 378 533.4 380 530.8 382 531.1 384 531.9 386 532.6 388 533.4 390 533.4 392 530.8 394 531.1 396 532.0 398 532.6 400 533.4 402 533.4 404 533.4 406 533.4 408 533.4 410 533.4 412 533.4 414 533.4 416 530.5 418 531.3 420 532.1 422 533.0 424 533.4 426 533.4 428 530.5 430 531.3 432 532.1 434 533.0 436 533.4 438 533.4 440 533.4 442 533.4 444 533.4 446 533.4 448 533.4 450 533.4 452 530.5 454 531.3 456 532.1 458 533.0 460 533.4 462 533.4 464 533.4 466 533.4 468 533.4 470 533.4 472 533.4 474 530.7 476 531.1 478 531.8 480 532.6 482 533.4 484 533.4 486 530.3 488 531.2 490 532.2 492 533.0 494 533.4 496 533.4 498 533.4 500 533.4 502 533.4 504 533.4 506 533.4 508 533.4 510 530.5 512 531.5 514 532.2 516 533.0 518 533.4 520 533.4 522 533.4 524 533.4 526 533.4 528 533.4 530 533.4 532 533.4 534 532.4 536 532.7 538 533.0 540 533.4 542 533.4 544 533.4 546 533.4 548 533.4 550 533.4 552 533.4 554 533.4 556 533.4 558 530.4 560 531.3 562 532.1 564 533.0 566 533.4 568 533.4 570 533.4 572 533.4 574 533.4 576 533.4 578 533.4 580 530.7 582 531.0 584 531.9 586 532.6 588 533.4 590 533.4 592 530.8 594 531.3 596 531.9 598 532.6 600 533.4 602 533.4 604 530.4 606 530.9 608 531.7 610 532.5 612 533.4 614 533.4 616 530.3 618 530.8 620 531.7 620 534.8 618 535.6 616 536.0 614 533.4 612 533.4 610 534.1 608 534.9 606 535.5 604 535.9 602 533.4 600 533.4 598 534.0 596 534.7 594 535.2 592 535.6 590 533.4 588 533.4 586 534.1 584 534.7 582 535.4 580 535.7 578 533.4 576 533.4 574 533.4 572 533.4 570 533.4 568 533.4 566 533.4 564 533.8 562 534.5 560 535.2 558 536.0 556 533.4 554 533.4 552 533.4 550 533.4 548 533.4 546 533.4 544 533.4 542 533.4 540 533.4 538 533.8 536 534.0 534 534.3 532 533.4 530 533.4 528 533.4 526 533.4 524 533.4 522 533.4 520 533.4 518 533.4 516 533.8 514 534.4 512 535.0 510 535.9 508 533.4 506 533.4 504 533.4 502 533.4 500 533.4 498 533.4 496 533.4 494 533.4 492 533.8 490 534.5 488 535.2 486 536.0 484 533.4 482 533.4 480 534.1 478 534.8 476 535.4 474 535.7 472 533.4 470 533.4 468 533.4 466 533.4 464 533.4 462 533.4 460 533.4 458 533.8 456 534.5 454 535.2 452 535.9 450 533.4 448 533.4 446 533.4 444 533.4 442 533.4 440 533.4 438 533.4 436 533.4 434 533.8 432 534.5 430 535.2 428 535.8 426 533.4 424 533.4 422 533.8 420 534.5 418 535.2 416 535.9 414 533.4 412 533.4 410 533.4 408 533.4 406 533.4 404 533.4 402 533.4 400 533.4 398 534.0 396 534.6 394 535.4 392 535.6 390 533.4 388 533.4 386 534.0 384 534.7 382 535.4 380 535.6 378 533.4 376 533.4 374 534.1 372 534.7 370 535.4 368 535.6 366 533.4 364 533.4 362 534.1 360 534.7 358 535.5 356 535.8 354 533.4 352 533.4 350 533.4 348 533.4 346 533.4 344 533.4 342 533.4 340 533.7 338 534.3 336 534.9 334 535.7 332 533.4 330 533.4 328 533.8 326 534.5 324 535.2 322 535.9 320 533.4 318 533.4 316 533.4 314 533.4 312 533.4 310 533.4 308 533.4 306 533.4 304 533.8 302 534.5 300 535.3 298 535.8 296 533.4 294 533.4 292 533.4 290 533.4 288 533.4 286 533.4 284 533.4 282 533.4 280 533.7 278 534.4 276 535.1 274 535.7 272 533.4 270 533.4 268 533.8 266 534.5 264 535.2 262 535.9 260 533.4 258 533.4 256 533.7 254 534.3 252 535.0 250 535.7Z" fill="#3939a2"/><rect x="250" y="545.7" width="371.5" height="1" fill="#3939a2" opacity="0.85"/><path d="M250 543.5 252 544.3 254 545.1 256 545.8 258 546.2 260 546.2 262 543.2 264 544.0 266 544.9 268 545.8 270 546.2 272 546.2 274 543.4 276 544.2 278 545.0 280 545.8 282 546.2 284 546.2 286 546.2 288 546.2 290 546.2 292 546.2 294 546.2 296 546.2 298 543.3 300 544.0 302 545.0 304 545.8 306 546.2 308 546.2 310 546.2 312 546.2 314 546.2 316 546.2 318 546.2 320 546.2 322 543.1 324 544.1 326 544.9 328 545.8 330 546.2 332 546.2 334 543.5 336 544.3 338 545.1 340 545.8 342 546.2 344 546.2 346 546.2 348 546.2 350 546.2 352 546.2 354 546.2 356 543.3 358 543.7 360 544.5 362 545.4 364 546.2 366 546.2 368 543.5 370 543.9 372 544.6 374 545.4 376 546.2 378 546.2 380 543.6 382 543.9 384 544.8 386 545.5 388 546.2 390 546.2 392 543.6 394 543.9 396 544.7 398 545.4 400 546.2 402 546.2 404 546.2 406 546.2 408 546.2 410 546.2 412 546.2 414 546.2 416 543.2 418 544.1 420 544.9 422 545.8 424 546.2 426 546.2 428 543.3 430 544.0 432 544.9 434 545.8 436 546.2 438 546.2 440 546.2 442 546.2 444 546.2 446 546.2 448 546.2 450 546.2 452 543.3 454 544.1 456 544.9 458 545.8 460 546.2 462 546.2 464 546.2 466 546.2 468 546.2 470 546.2 472 546.2 474 543.3 476 543.9 478 544.6 480 545.4 482 546.2 484 546.2 486 543.2 488 544.0 490 544.9 492 545.8 494 546.2 496 546.2 498 546.2 500 546.2 502 546.2 504 546.2 506 546.2 508 546.2 510 543.5 512 544.3 514 545.0 516 545.8 518 546.2 520 546.2 522 546.2 524 546.2 526 546.2 528 546.2 530 546.2 532 546.2 534 545.2 536 545.5 538 545.8 540 546.2 542 546.2 544 546.2 546 546.2 548 546.2 550 546.2 552 546.2 554 546.2 556 546.2 558 543.1 560 544.1 562 545.0 564 545.8 566 546.2 568 546.2 570 546.2 572 546.2 574 546.2 576 546.2 578 546.2 580 543.5 582 543.7 584 544.6 586 545.4 588 546.2 590 546.2 592 543.6 594 544.1 596 544.8 598 545.4 600 546.2 602 546.2 604 543.3 606 543.5 608 544.5 610 545.3 612 546.2 614 546.2 616 543.1 618 543.5 620 544.4 620 547.7 618 548.5 616 548.8 614 546.2 612 546.2 610 546.9 608 547.6 606 548.5 604 548.6 602 546.2 600 546.2 598 546.8 596 547.4 594 548.0 592 548.4 590 546.2 588 546.2 586 546.9 584 547.6 582 548.3 580 548.5 578 546.2 576 546.2 574 546.2 572 546.2 570 546.2 568 546.2 566 546.2 564 546.5 562 547.2 560 548.0 558 548.9 556 546.2 554 546.2 552 546.2 550 546.2 548 546.2 546 546.2 544 546.2 542 546.2 540 546.2 538 546.6 536 546.8 534 547.0 532 546.2 530 546.2 528 546.2 526 546.2 524 546.2 522 546.2 520 546.2 518 546.2 516 546.6 514 547.2 512 547.8 510 548.5 508 546.2 506 546.2 504 546.2 502 546.2 500 546.2 498 546.2 496 546.2 494 546.2 492 546.6 490 547.3 488 548.1 486 548.7 484 546.2 482 546.2 480 546.9 478 547.5 476 548.2 474 548.7 472 546.2 470 546.2 468 546.2 466 546.2 464 546.2 462 546.2 460 546.2 458 546.6 456 547.3 454 548.0 452 548.6 450 546.2 448 546.2 446 546.2 444 546.2 442 546.2 440 546.2 438 546.2 436 546.2 434 546.6 432 547.3 430 548.1 428 548.7 426 546.2 424 546.2 422 546.6 420 547.3 418 548.0 416 548.7 414 546.2 412 546.2 410 546.2 408 546.2 406 546.2 404 546.2 402 546.2 400 546.2 398 546.9 396 547.5 394 548.2 392 548.4 390 546.2 388 546.2 386 546.8 384 547.4 382 548.2 380 548.4 378 546.2 376 546.2 374 546.9 372 547.5 370 548.2 368 548.5 366 546.2 364 546.2 362 546.9 360 547.6 358 548.3 356 548.7 354 546.2 352 546.2 350 546.2 348 546.2 346 546.2 344 546.2 342 546.2 340 546.5 338 547.2 336 547.8 334 548.5 332 546.2 330 546.2 328 546.6 326 547.3 324 548.0 322 548.8 320 546.2 318 546.2 316 546.2 314 546.2 312 546.2 310 546.2 308 546.2 306 546.2 304 546.6 302 547.2 300 548.1 298 548.6 296 546.2 294 546.2 292 546.2 290 546.2 288 546.2 286 546.2 284 546.2 282 546.2 280 546.5 278 547.2 276 547.9 274 548.6 272 546.2 270 546.2 268 546.6 266 547.3 264 548.1 262 548.8 260 546.2 258 546.2 256 546.5 254 547.1 252 547.8 250 548.5Z" fill="#3939a2"/><rect x="623.5" y="513.8" width="369.5" height="40.7" rx="1.8" fill="#5252da"/><path d="M623.5 515.6 Q623.5 513.8 625.3 513.8 L991.2 513.8 Q993 513.8 993 515.6 L993 525.9 L623.5 525.9 Z" fill="#4646bd"/><rect x="623.5" y="550" width="369.5" height="3.5" fill="#ffffff" opacity="0.05"/><rect x="623.5" y="532.9" width="369.5" height="1" fill="#3939a2" opacity="0.85"/><path d="M623.5 530.3 625.5 531.3 627.5 532.1 629.5 533.0 631.5 533.4 633.5 533.4 635.5 530.7 637.5 531.5 639.5 532.2 641.5 533.0 643.5 533.4 645.5 533.4 647.5 533.4 649.5 533.4 651.5 533.4 653.5 533.4 655.5 533.4 657.5 530.7 659.5 531.2 661.5 531.9 663.5 532.6 665.5 533.4 667.5 533.4 669.5 532.4 671.5 532.5 673.5 532.8 675.5 533.1 677.5 533.4 679.5 533.4 681.5 533.4 683.5 533.4 685.5 533.4 687.5 533.4 689.5 533.4 691.5 533.4 693.5 530.5 695.5 531.1 697.5 531.9 699.5 532.6 701.5 533.4 703.5 533.4 705.5 533.4 707.5 533.4 709.5 533.4 711.5 533.4 713.5 533.4 715.5 533.4 717.5 530.5 719.5 531.4 721.5 532.2 723.5 533.0 725.5 533.4 727.5 533.4 729.5 533.4 731.5 533.4 733.5 533.4 735.5 533.4 737.5 533.4 739.5 533.4 741.5 530.3 743.5 531.3 745.5 532.1 747.5 533.0 749.5 533.4 751.5 533.4 753.5 530.9 755.5 531.5 757.5 532.3 759.5 533.0 761.5 533.4 763.5 533.4 765.5 532.4 767.5 532.7 769.5 533.0 771.5 533.4 773.5 533.4 775.5 533.4 777.5 533.4 779.5 533.4 781.5 533.4 783.5 533.4 785.5 533.4 787.5 530.7 789.5 530.9 791.5 531.8 793.5 532.6 795.5 533.4 797.5 533.4 799.5 533.4 801.5 533.4 803.5 533.4 805.5 533.4 807.5 533.4 809.5 533.4 811.5 530.7 813.5 531.0 815.5 531.8 817.5 532.6 819.5 533.4 821.5 533.4 823.5 532.4 825.5 532.6 827.5 532.9 829.5 533.1 831.5 533.4 833.5 533.4 835.5 530.7 837.5 531.5 839.5 532.3 841.5 533.0 843.5 533.4 845.5 533.4 847.5 533.4 849.5 533.4 851.5 533.4 853.5 533.4 855.5 533.4 857.5 530.4 859.5 530.9 861.5 531.7 863.5 532.6 865.5 533.4 867.5 533.4 869.5 530.8 871.5 531.3 873.5 531.9 875.5 532.7 877.5 533.4 879.5 533.4 881.5 533.4 883.5 533.4 885.5 533.4 887.5 533.4 889.5 533.4 891.5 533.4 893.5 530.5 895.5 531.5 897.5 532.2 899.5 533.0 901.5 533.4 903.5 533.4 905.5 533.4 907.5 533.4 909.5 533.4 911.5 533.4 913.5 533.4 915.5 530.6 917.5 531.0 919.5 531.8 921.5 532.6 923.5 533.4 925.5 533.4 927.5 533.4 929.5 533.4 931.5 533.4 933.5 533.4 935.5 533.4 937.5 533.4 939.5 530.8 941.5 531.1 943.5 531.9 945.5 532.6 947.5 533.4 949.5 533.4 951.5 533.4 953.5 533.4 955.5 533.4 957.5 533.4 959.5 533.4 961.5 533.4 963.5 530.6 965.5 531.4 967.5 532.2 969.5 533.0 971.5 533.4 973.5 533.4 975.5 533.4 977.5 533.4 979.5 533.4 981.5 533.4 983.5 533.4 985.5 530.7 987.5 531.0 989.5 531.8 991.5 532.6 991.5 534.1 989.5 534.8 987.5 535.4 985.5 535.7 983.5 533.4 981.5 533.4 979.5 533.4 977.5 533.4 975.5 533.4 973.5 533.4 971.5 533.4 969.5 533.7 967.5 534.4 965.5 535.1 963.5 535.8 961.5 533.4 959.5 533.4 957.5 533.4 955.5 533.4 953.5 533.4 951.5 533.4 949.5 533.4 947.5 533.4 945.5 534.0 943.5 534.6 941.5 535.4 939.5 535.6 937.5 533.4 935.5 533.4 933.5 533.4 931.5 533.4 929.5 533.4 927.5 533.4 925.5 533.4 923.5 533.4 921.5 534.1 919.5 534.8 917.5 535.4 915.5 535.8 913.5 533.4 911.5 533.4 909.5 533.4 907.5 533.4 905.5 533.4 903.5 533.4 901.5 533.4 899.5 533.7 897.5 534.5 895.5 535.0 893.5 535.8 891.5 533.4 889.5 533.4 887.5 533.4 885.5 533.4 883.5 533.4 881.5 533.4 879.5 533.4 877.5 533.4 875.5 534.0 873.5 534.7 871.5 535.2 869.5 535.6 867.5 533.4 865.5 533.4 863.5 534.1 861.5 534.8 859.5 535.5 857.5 535.9 855.5 533.4 853.5 533.4 851.5 533.4 849.5 533.4 847.5 533.4 845.5 533.4 843.5 533.4 841.5 533.7 839.5 534.4 837.5 535.0 835.5 535.7 833.5 533.4 831.5 533.4 829.5 533.7 827.5 533.9 825.5 534.1 823.5 534.2 821.5 533.4 819.5 533.4 817.5 534.1 815.5 534.8 813.5 535.4 811.5 535.7 809.5 533.4 807.5 533.4 805.5 533.4 803.5 533.4 801.5 533.4 799.5 533.4 797.5 533.4 795.5 533.4 793.5 534.1 791.5 534.8 789.5 535.5 787.5 535.7 785.5 533.4 783.5 533.4 781.5 533.4 779.5 533.4 777.5 533.4 775.5 533.4 773.5 533.4 771.5 533.4 769.5 533.8 767.5 534.0 765.5 534.2 763.5 533.4 761.5 533.4 759.5 533.7 757.5 534.3 755.5 535.0 753.5 535.6 751.5 533.4 749.5 533.4 747.5 533.8 745.5 534.5 743.5 535.2 741.5 536.0 739.5 533.4 737.5 533.4 735.5 533.4 733.5 533.4 731.5 533.4 729.5 533.4 727.5 533.4 725.5 533.4 723.5 533.7 721.5 534.4 719.5 535.1 717.5 535.9 715.5 533.4 713.5 533.4 711.5 533.4 709.5 533.4 707.5 533.4 705.5 533.4 703.5 533.4 701.5 533.4 699.5 534.1 697.5 534.7 695.5 535.3 693.5 535.9 691.5 533.4 689.5 533.4 687.5 533.4 685.5 533.4 683.5 533.4 681.5 533.4 679.5 533.4 677.5 533.4 675.5 533.6 673.5 533.9 671.5 534.2 669.5 534.3 667.5 533.4 665.5 533.4 663.5 534.0 661.5 534.7 659.5 535.3 657.5 535.7 655.5 533.4 653.5 533.4 651.5 533.4 649.5 533.4 647.5 533.4 645.5 533.4 643.5 533.4 641.5 533.7 639.5 534.4 637.5 535.0 635.5 535.7 633.5 533.4 631.5 533.4 629.5 533.8 627.5 534.5 625.5 535.2 623.5 536.0Z" fill="#3939a2"/><rect x="623.5" y="545.7" width="369.5" height="1" fill="#3939a2" opacity="0.85"/><path d="M623.5 543.3 625.5 544.0 627.5 544.9 629.5 545.8 631.5 546.2 633.5 546.2 635.5 543.5 637.5 544.2 639.5 545.0 641.5 545.8 643.5 546.2 645.5 546.2 647.5 546.2 649.5 546.2 651.5 546.2 653.5 546.2 655.5 546.2 657.5 543.6 659.5 543.9 661.5 544.7 663.5 545.5 665.5 546.2 667.5 546.2 669.5 545.2 671.5 545.4 673.5 545.6 675.5 545.9 677.5 546.2 679.5 546.2 681.5 546.2 683.5 546.2 685.5 546.2 687.5 546.2 689.5 546.2 691.5 546.2 693.5 543.3 695.5 543.7 697.5 544.6 699.5 545.4 701.5 546.2 703.5 546.2 705.5 546.2 707.5 546.2 709.5 546.2 711.5 546.2 713.5 546.2 715.5 546.2 717.5 543.3 719.5 544.3 721.5 545.0 723.5 545.8 725.5 546.2 727.5 546.2 729.5 546.2 731.5 546.2 733.5 546.2 735.5 546.2 737.5 546.2 739.5 546.2 741.5 543.2 743.5 544.1 745.5 545.0 747.5 545.8 749.5 546.2 751.5 546.2 753.5 543.6 755.5 544.3 757.5 545.0 759.5 545.8 761.5 546.2 763.5 546.2 765.5 545.2 767.5 545.5 769.5 545.8 771.5 546.2 773.5 546.2 775.5 546.2 777.5 546.2 779.5 546.2 781.5 546.2 783.5 546.2 785.5 546.2 787.5 543.5 789.5 543.9 791.5 544.5 793.5 545.4 795.5 546.2 797.5 546.2 799.5 546.2 801.5 546.2 803.5 546.2 805.5 546.2 807.5 546.2 809.5 546.2 811.5 543.5 813.5 543.7 815.5 544.6 817.5 545.4 819.5 546.2 821.5 546.2 823.5 545.2 825.5 545.4 827.5 545.6 829.5 545.9 831.5 546.2 833.5 546.2 835.5 543.7 837.5 544.4 839.5 545.1 841.5 545.8 843.5 546.2 845.5 546.2 847.5 546.2 849.5 546.2 851.5 546.2 853.5 546.2 855.5 546.2 857.5 543.2 859.5 543.5 861.5 544.5 863.5 545.3 865.5 546.2 867.5 546.2 869.5 543.7 871.5 544.0 873.5 544.7 875.5 545.4 877.5 546.2 879.5 546.2 881.5 546.2 883.5 546.2 885.5 546.2 887.5 546.2 889.5 546.2 891.5 546.2 893.5 543.3 895.5 544.2 897.5 545.0 899.5 545.8 901.5 546.2 903.5 546.2 905.5 546.2 907.5 546.2 909.5 546.2 911.5 546.2 913.5 546.2 915.5 543.5 917.5 543.9 919.5 544.6 921.5 545.4 923.5 546.2 925.5 546.2 927.5 546.2 929.5 546.2 931.5 546.2 933.5 546.2 935.5 546.2 937.5 546.2 939.5 543.5 941.5 544.0 943.5 544.6 945.5 545.5 947.5 546.2 949.5 546.2 951.5 546.2 953.5 546.2 955.5 546.2 957.5 546.2 959.5 546.2 961.5 546.2 963.5 543.5 965.5 544.3 967.5 545.0 969.5 545.8 971.5 546.2 973.5 546.2 975.5 546.2 977.5 546.2 979.5 546.2 981.5 546.2 983.5 546.2 985.5 543.5 987.5 543.7 989.5 544.6 991.5 545.4 991.5 546.8 989.5 547.5 987.5 548.3 985.5 548.5 983.5 546.2 981.5 546.2 979.5 546.2 977.5 546.2 975.5 546.2 973.5 546.2 971.5 546.2 969.5 546.6 967.5 547.2 965.5 547.9 963.5 548.5 961.5 546.2 959.5 546.2 957.5 546.2 955.5 546.2 953.5 546.2 951.5 546.2 949.5 546.2 947.5 546.2 945.5 546.8 943.5 547.5 941.5 548.1 939.5 548.5 937.5 546.2 935.5 546.2 933.5 546.2 931.5 546.2 929.5 546.2 927.5 546.2 925.5 546.2 923.5 546.2 921.5 546.9 919.5 547.6 917.5 548.2 915.5 548.5 913.5 546.2 911.5 546.2 909.5 546.2 907.5 546.2 905.5 546.2 903.5 546.2 901.5 546.2 899.5 546.5 897.5 547.2 895.5 547.9 893.5 548.7 891.5 546.2 889.5 546.2 887.5 546.2 885.5 546.2 883.5 546.2 881.5 546.2 879.5 546.2 877.5 546.2 875.5 546.9 873.5 547.5 871.5 548.1 869.5 548.3 867.5 546.2 865.5 546.2 863.5 547.0 861.5 547.7 859.5 548.5 857.5 548.8 855.5 546.2 853.5 546.2 851.5 546.2 849.5 546.2 847.5 546.2 845.5 546.2 843.5 546.2 841.5 546.5 839.5 547.1 837.5 547.8 835.5 548.3 833.5 546.2 831.5 546.2 829.5 546.5 827.5 546.7 825.5 546.9 823.5 547.1 821.5 546.2 819.5 546.2 817.5 546.9 815.5 547.6 813.5 548.3 811.5 548.5 809.5 546.2 807.5 546.2 805.5 546.2 803.5 546.2 801.5 546.2 799.5 546.2 797.5 546.2 795.5 546.2 793.5 546.9 791.5 547.6 789.5 548.2 787.5 548.5 785.5 546.2 783.5 546.2 781.5 546.2 779.5 546.2 777.5 546.2 775.5 546.2 773.5 546.2 771.5 546.2 769.5 546.6 767.5 546.8 765.5 547.1 763.5 546.2 761.5 546.2 759.5 546.5 757.5 547.2 755.5 547.9 753.5 548.4 751.5 546.2 749.5 546.2 747.5 546.5 745.5 547.3 743.5 548.0 741.5 548.7 739.5 546.2 737.5 546.2 735.5 546.2 733.5 546.2 731.5 546.2 729.5 546.2 727.5 546.2 725.5 546.2 723.5 546.5 721.5 547.2 719.5 547.8 717.5 548.7 715.5 546.2 713.5 546.2 711.5 546.2 709.5 546.2 707.5 546.2 705.5 546.2 703.5 546.2 701.5 546.2 699.5 546.9 697.5 547.5 695.5 548.3 693.5 548.6 691.5 546.2 689.5 546.2 687.5 546.2 685.5 546.2 683.5 546.2 681.5 546.2 679.5 546.2 677.5 546.2 675.5 546.5 673.5 546.7 671.5 546.9 669.5 547.1 667.5 546.2 665.5 546.2 663.5 546.8 661.5 547.5 659.5 548.1 657.5 548.4 655.5 546.2 653.5 546.2 651.5 546.2 649.5 546.2 647.5 546.2 645.5 546.2 643.5 546.2 641.5 546.5 639.5 547.2 637.5 547.9 635.5 548.5 633.5 546.2 631.5 546.2 629.5 546.6 627.5 547.3 625.5 548.1 623.5 548.7Z" fill="#3939a2"/><rect x="253" y="81.8" width="736" height="2" fill="#161718"/><rect x="253" y="124.8" width="736" height="2" fill="#161718"/><rect x="253" y="167.8" width="736" height="2" fill="#161718"/><rect x="253" y="210.8" width="736" height="2" fill="#161718"/><rect x="253" y="253.8" width="736" height="2" fill="#161718"/><rect x="253" y="296.8" width="736" height="2" fill="#161718"/><rect x="253" y="339.8" width="736" height="2" fill="#161718"/><rect x="253" y="382.8" width="736" height="2" fill="#161718"/><rect x="253" y="425.8" width="736" height="2" fill="#161718"/><rect x="253" y="468.8" width="736" height="2" fill="#161718"/><rect x="253" y="511.8" width="736" height="2" fill="#161718"/><rect x="253" y="554.8" width="736" height="2" fill="#161718"/><rect x="253" y="38" width="736" height="21" fill="#1f2022"/><rect x="253" y="59" width="736" height="1" fill="#7a7b7d"/><rect x="253" y="60" width="736" height="6" fill="#222325"/><rect x="254" y="50" width="1" height="9" fill="#7a7b7d"/><text x="257.5" y="54.8" font-size="6.2" fill="#a4a5a7" font-family="Liberation Sans">1:1:000</text><rect x="346" y="50" width="1" height="9" fill="#7a7b7d"/><text x="349.5" y="54.8" font-size="6.2" fill="#a4a5a7" font-family="Liberation Sans">2:1:000</text><rect x="438" y="50" width="1" height="9" fill="#7a7b7d"/><text x="441.5" y="54.8" font-size="6.2" fill="#a4a5a7" font-family="Liberation Sans">3:1:000</text><rect x="530" y="50" width="1" height="9" fill="#7a7b7d"/><text x="533.5" y="54.8" font-size="6.2" fill="#a4a5a7" font-family="Liberation Sans">4:1:000</text><rect x="622" y="50" width="1" height="9" fill="#7a7b7d"/><text x="625.5" y="54.8" font-size="6.2" fill="#a4a5a7" font-family="Liberation Sans">5:1:000</text><rect x="714" y="50" width="1" height="9" fill="#7a7b7d"/><text x="717.5" y="54.8" font-size="6.2" fill="#a4a5a7" font-family="Liberation Sans">6:1:000</text><rect x="806" y="50" width="1" height="9" fill="#7a7b7d"/><text x="809.5" y="54.8" font-size="6.2" fill="#a4a5a7" font-family="Liberation Sans">7:1:000</text><rect x="898" y="50" width="1" height="9" fill="#7a7b7d"/><text x="901.5" y="54.8" font-size="6.2" fill="#a4a5a7" font-family="Liberation Sans">8:1:000</text><rect x="622" y="384" width="1.1" height="42" fill="#161616"/><circle cx="622.5" cy="426" r="2.2" fill="#161616"/><ellipse cx="622.6" cy="405" rx="4.6" ry="3.3" fill="none" stroke="#e6e6e6" stroke-width="1"/><circle cx="621" cy="405" r="1.5" fill="none" stroke="#1a1a1a" stroke-width="1"/><circle cx="624.2" cy="405" r="1.5" fill="none" stroke="#1a1a1a" stroke-width="1"/><rect x="622" y="470" width="1.1" height="42" fill="#161616"/><circle cx="622.5" cy="512" r="2.2" fill="#161616"/><ellipse cx="622.6" cy="491" rx="4.6" ry="3.3" fill="none" stroke="#e6e6e6" stroke-width="1"/><circle cx="621" cy="491" r="1.5" fill="none" stroke="#1a1a1a" stroke-width="1"/><circle cx="624.2" cy="491" r="1.5" fill="none" stroke="#1a1a1a" stroke-width="1"/><rect x="622" y="513" width="1.1" height="42" fill="#161616"/><circle cx="622.5" cy="555" r="2.2" fill="#161616"/><ellipse cx="622.6" cy="534" rx="4.6" ry="3.3" fill="none" stroke="#e6e6e6" stroke-width="1"/><circle cx="621" cy="534" r="1.5" fill="none" stroke="#1a1a1a" stroke-width="1"/><circle cx="624.2" cy="534" r="1.5" fill="none" stroke="#1a1a1a" stroke-width="1"/><rect x="253.4" y="40" width="1.2" height="531" fill="#c8a45c"/><path d="M254 38 L263.5 38 L254 47.5 Z" fill="#f2b63c"/><rect x="253" y="569" width="736" height="13" fill="#2b2c2e"/><rect x="254" y="572.3" width="709" height="7.7" rx="2" fill="#899093"/><rect x="256.5" y="574" width="1.3" height="4.5" fill="#2a2a2a"/><rect x="958.5" y="574" width="1.3" height="4.5" fill="#2a2a2a"/><rect x="989" y="38" width="11" height="531" fill="#38393b"/><rect x="991" y="123" width="7" height="402" rx="2" fill="#7d8386"/><rect x="992.5" y="126" width="4" height="1.2" fill="#2a2a2a"/><rect x="992.5" y="521" width="4" height="1.2" fill="#2a2a2a"/><rect x="991.5" y="553.5" width="5" height="1.2" fill="#9a9c9e"/><rect x="991.5" y="563.5" width="5" height="1.2" fill="#9a9c9e"/><rect x="993.4" y="561.6" width="1.2" height="5" fill="#9a9c9e"/><rect x="969.5" y="575.5" width="5" height="1.2" fill="#9a9c9e"/><rect x="979.5" y="575.5" width="6" height="1.2" fill="#9a9c9e"/><rect x="981.9" y="573.1" width="1.2" height="6" fill="#9a9c9e"/><path d="M990 571 L993 571 M990 571 L990 574 M990 571 L993 574 M999 571 L996 571 M999 571 L999 574 M999 571 L996 574 M990 581 L993 581 M990 581 L990 578 M990 581 L993 578 M999 581 L996 581 M999 581 L999 578 M999 581 L996 578" stroke="#9a9c9e" stroke-width="1.1" fill="none"/><path d="M990.5 49.5 L990.5 58.5 M999.5 49.5 L999.5 58.5 M992 54 L998 54 M993.5 52.3 L992 54 L993.5 55.7 M996.5 52.3 L998 54 L996.5 55.7" stroke="#a8aaac" stroke-width="1" fill="none"/></svg><div class="a" style="left:0;top:0;width:1000px;height:37px;background:#3b3c3e"></div><div class="a" style="left:0;top:37px;width:1000px;height:1.5px;background:#1d1e20"></div><div class="a" style="left:15px;top:6px;width:24px;height:19px;background:#56585a;border-radius:1px;box-shadow:0 0 0 0.6px #2e2f31"></div><div class="a" style="left:46px;top:6px;width:23px;height:19px;background:#2c2e30;border-radius:1px;box-shadow:0 0 0 0.6px #2e2f31"></div><div class="a" style="left:76px;top:6px;width:24px;height:19px;background:#56585a;border-radius:1px;box-shadow:0 0 0 0.6px #2e2f31"></div><div class="a" style="left:909px;top:6px;width:24px;height:19px;background:#56585a;border-radius:1px;box-shadow:0 0 0 0.6px #2e2f31"></div><div class="a" style="left:940px;top:6px;width:24px;height:19px;background:#56585a;border-radius:1px;box-shadow:0 0 0 0.6px #2e2f31"></div><svg class="a" style="left:15px;top:6px" width="24" height="19" viewBox="0 0 24 19">
<g fill="#dfe6ea"><path d="M12 2.5 L14.3 5.3 L9.7 5.3 Z"/><path d="M12 16.5 L14.3 13.7 L9.7 13.7 Z"/><path d="M5 9.5 L7.8 7.2 L7.8 11.8 Z"/><path d="M19 9.5 L16.2 7.2 L16.2 11.8 Z"/>
<rect x="11" y="5" width="2" height="9"/><rect x="7.5" y="8.5" width="9" height="2"/><circle cx="12" cy="9.5" r="1.6"/></g></svg><svg class="a" style="left:46px;top:6px" width="23" height="19" viewBox="0 0 23 19">
<path d="M9 5 L9 15.5 L11.4 13.2 L13.2 16.8 L14.8 16 L13 12.6 L16.3 12.4 Z" fill="#cfe0e8"/></svg><svg class="a" style="left:76px;top:6px" width="24" height="19" viewBox="0 0 24 19">
<path d="M5 15.5 L13.5 9 L19.5 5 L19.5 15.5 Z" fill="none" stroke="#cfe0e8" stroke-width="1.2"/><path d="M5 15.5 L13.5 9 L13.5 15.5 Z" fill="#cfe0e8"/></svg><svg class="a" style="left:909px;top:6px" width="24" height="19" viewBox="0 0 24 19">
<g fill="#eef3f4"><circle cx="8.1" cy="10.4" r="1.5"/><circle cx="9.4" cy="6.9" r="1.5"/><circle cx="12.5" cy="5.2" r="1.5"/><circle cx="15.7" cy="6.9" r="1.5"/><circle cx="17.2" cy="10.4" r="1.5"/><circle cx="12.6" cy="14.6" r="1.2"/></g>
<circle cx="12.6" cy="10.3" r="2" fill="#2a2c2e" stroke="#dfe6e8" stroke-width="1.1"/><rect x="12" y="12" width="1.2" height="2.6" fill="#dfe6e8"/></svg><svg class="a" style="left:940px;top:6px" width="24" height="19" viewBox="0 0 24 19">
<path d="M9.3 8.5 L7.3 8.5 L7.3 15.8 L16.7 15.8 L16.7 8.5 L14.7 8.5" fill="none" stroke="#22a6c8" stroke-width="1.4"/><path d="M12 5 L12 12.5" stroke="#22a6c8" stroke-width="1.4"/><path d="M8.8 7.6 L12 3.6 L15.2 7.6 Z" fill="#22a6c8"/></svg><svg class="a" style="left:980px;top:7px" width="20" height="20" viewBox="980 7 20 20"><path d="M994.50,16.00 L994.41,16.92 L992.93,17.30 L992.61,17.88 L993.12,19.32 L992.41,19.91 L991.10,19.13 L990.46,19.32 L989.80,20.70 L988.88,20.61 L988.50,19.13 L987.92,18.81 L986.48,19.32 L985.89,18.61 L986.67,17.30 L986.48,16.66 L985.10,16.00 L985.19,15.08 L986.67,14.70 L986.99,14.12 L986.48,12.68 L987.19,12.09 L988.50,12.87 L989.14,12.68 L989.80,11.30 L990.72,11.39 L991.10,12.87 L991.68,13.19 L993.12,12.68 L993.71,13.39 L992.93,14.70 L993.12,15.34Z" fill="#f2f2f2"/><circle cx="989.8" cy="16" r="1.50" fill="#3b3c3e"/></svg><div class="a" style="left:0;top:38.5px;width:69px;height:544px;background:#2f3133"></div><div class="a" style="left:69px;top:38.5px;width:1.5px;height:544px;background:#1e1f21"></div><div class="a" style="left:0;top:39px;width:68px;height:11.5px;background:#454749;color:#dcdcdc;font:7.8px 'Liberation Sans', sans-serif;line-height:13.3px;text-align:center">Master</div><svg class="a" style="left:29px;top:58px" width="11" height="15" viewBox="0 0 11 15">
<rect x="1" y="1" width="9" height="13" rx="1" fill="#cfd3d6"/><circle cx="5.5" cy="4" r="1.2" fill="#333"/><circle cx="5.5" cy="9.5" r="2.6" fill="#333"/><circle cx="5.5" cy="9.5" r="1.2" fill="#cfd3d6"/></svg><div class="a" style="left:8px;top:82px;width:53px;height:5px;background:#535557;border-radius:1px"></div><div class="a" style="left:0;top:114.5px;width:69px;height:1px;background:#27292b"></div><div class="a" style="left:7.5px;top:120px;width:53.5px;height:16px;background:#4a4c4e;border-radius:1px;color:#f2f2f2;font:bold 7.5px 'Liberation Sans', sans-serif;line-height:16px;text-align:center">EQ</div><div class="a" style="left:0;top:147.0px;width:60px;height:10px;color:#ececec;font:6.9px 'Liberation Sans', sans-serif;line-height:10px;text-align:center;-webkit-text-stroke:0.2px #ececec">Dynamic EQ</div><svg class="a" style="left:50.5px;top:146.7px" width="9" height="9" viewBox="0 0 9 9"><circle cx="4.5" cy="4.7" r="3.3" fill="#2f4d38" stroke="#5cbd6c" stroke-width="1.4"/><line x1="4.5" y1="0.8" x2="4.5" y2="3.6" stroke="#6fd07e" stroke-width="1.3"/></svg><div class="a" style="left:0;top:161.10000000000002px;width:60px;height:10px;color:#ececec;font:6.9px 'Liberation Sans', sans-serif;line-height:10px;text-align:center;-webkit-text-stroke:0.2px #ececec">n-Tube</div><svg class="a" style="left:50.5px;top:160.8px" width="9" height="9" viewBox="0 0 9 9"><circle cx="4.5" cy="4.7" r="3.3" fill="#2f4d38" stroke="#5cbd6c" stroke-width="1.4"/><line x1="4.5" y1="0.8" x2="4.5" y2="3.6" stroke="#6fd07e" stroke-width="1.3"/></svg><div class="a" style="left:0;top:174.70000000000002px;width:60px;height:10px;color:#ececec;font:6.9px 'Liberation Sans', sans-serif;line-height:10px;text-align:center;-webkit-text-stroke:0.2px #ececec">Limiter</div><svg class="a" style="left:50.5px;top:174.4px" width="9" height="9" viewBox="0 0 9 9"><circle cx="4.5" cy="4.7" r="3.3" fill="#2f4d38" stroke="#5cbd6c" stroke-width="1.4"/><line x1="4.5" y1="0.8" x2="4.5" y2="3.6" stroke="#6fd07e" stroke-width="1.3"/></svg><div class="a" style="left:0;top:188.60000000000002px;width:60px;height:10px;color:#ececec;font:6.9px 'Liberation Sans', sans-serif;line-height:10px;text-align:center;-webkit-text-stroke:0.2px #ececec">Meter</div><svg class="a" style="left:50.5px;top:188.3px" width="9" height="9" viewBox="0 0 9 9"><circle cx="4.5" cy="4.7" r="3.3" fill="#2f4d38" stroke="#5cbd6c" stroke-width="1.4"/><line x1="4.5" y1="0.8" x2="4.5" y2="3.6" stroke="#6fd07e" stroke-width="1.3"/></svg><div class="a" style="left:8.5px;top:199px;width:53px;height:27px;border:1px solid #3e4042;border-radius:2px;background:#2e3032"></div><div class="a" style="left:30px;top:213.2px;width:9px;height:1.6px;background:#f0f0f0"></div><div class="a" style="left:33.7px;top:209.5px;width:1.6px;height:9px;background:#f0f0f0"></div><div class="a" style="left:0;top:233px;width:69px;height:1px;background:#27292b"></div><div class="a" style="left:8px;top:241px;width:15px;height:14.5px;background:#4f5153;color:#f0f0f0;font:bold 8px 'Liberation Sans', sans-serif;line-height:14.5px;text-align:center">M</div><div class="a" style="left:24px;top:241px;width:15px;height:14.5px;background:#4f5153;color:#f0f0f0;font:bold 8px 'Liberation Sans', sans-serif;line-height:14.5px;text-align:center">S</div><div class="a" style="left:15px;top:272.5px;width:38px;height:1.2px;background:#1c1d1f"></div><div class="a" style="left:31px;top:265px;width:7px;height:15px;background:#a9abad;border-radius:1.5px;border:0.5px solid #222"></div><div class="a" style="left:25px;top:281px;width:22px;height:11px;background:#4a4c4e;color:#eee;font:bold 7px 'Liberation Sans', sans-serif;line-height:11px;text-align:center">0</div><div class="a" style="left:20px;top:299px;width:13px;height:213px;background:#262729"></div><div class="a" style="left:33px;top:299px;width:9px;height:213px;background:#2b2d2f"></div><div class="a" style="left:45.5px;top:312px;width:1.5px;height:202px;background:#1b1c1e"></div><div class="a" style="left:4px;top:297px;width:14px;height:6px;color:#77797b;font:4.5px 'Liberation Sans', sans-serif;line-height:6px;text-align:right">0</div><div class="a" style="left:4px;top:309px;width:14px;height:6px;color:#77797b;font:4.5px 'Liberation Sans', sans-serif;line-height:6px;text-align:right">-3</div><div class="a" style="left:4px;top:319px;width:14px;height:6px;color:#77797b;font:4.5px 'Liberation Sans', sans-serif;line-height:6px;text-align:right">-6</div><div class="a" style="left:4px;top:341px;width:14px;height:6px;color:#77797b;font:4.5px 'Liberation Sans', sans-serif;line-height:6px;text-align:right">-12</div><div class="a" style="left:4px;top:370px;width:14px;height:6px;color:#77797b;font:4.5px 'Liberation Sans', sans-serif;line-height:6px;text-align:right">-20</div><div class="a" style="left:4px;top:405px;width:14px;height:6px;color:#77797b;font:4.5px 'Liberation Sans', sans-serif;line-height:6px;text-align:right">-30</div><div class="a" style="left:4px;top:441px;width:14px;height:6px;color:#77797b;font:4.5px 'Liberation Sans', sans-serif;line-height:6px;text-align:right">-40</div><div class="a" style="left:4px;top:476px;width:14px;height:6px;color:#77797b;font:4.5px 'Liberation Sans', sans-serif;line-height:6px;text-align:right">-50</div><div class="a" style="left:4px;top:507px;width:14px;height:6px;color:#77797b;font:4.5px 'Liberation Sans', sans-serif;line-height:6px;text-align:right">L-INF</div><div class="a" style="left:41px;top:380px;width:11px;height:24px;background:linear-gradient(#6a6c6e,#9a9c9e 50%,#6a6c6e);border-radius:1px;border:0.5px solid #1a1a1a"></div><div class="a" style="left:20px;top:520px;width:12px;height:13px;background:#4a4c4e"></div><svg class="a" style="left:20px;top:520px" width="12" height="13" viewBox="0 0 12 13"><circle cx="5" cy="6.5" r="2.6" fill="none" stroke="#ddd" stroke-width="1.2"/><path d="M8 4 A3 3 0 0 1 8 9" fill="none" stroke="#ddd" stroke-width="1.1"/></svg><div class="a" style="left:35.5px;top:520px;width:20.5px;height:13px;background:#4a4c4e;color:#eee;font:7px 'Liberation Sans', sans-serif;line-height:13px;text-align:center">+0.0</div><div class="a" style="left:70.5px;top:38.5px;width:174.5px;height:544px;background:#3d3e40"></div><div class="a" style="left:70.5px;top:38.5px;width:174.5px;height:25.5px;background:#2e3032"></div><div class="a" style="left:245px;top:38.5px;width:8px;height:544px;background:#2a2b2d"></div><div class="a" style="left:75px;top:44px;width:22px;height:15px;background:#4e5052;border-radius:1px"></div><svg class="a" style="left:75px;top:44px" width="22" height="15" viewBox="0 0 22 15"><rect x="7" y="4" width="8.5" height="4.5" fill="#d8d8d8"/><path d="M8.8 8.5 L13.7 8.5 L11.25 11 Z" fill="#d8d8d8"/></svg><svg class="a" style="left:108px;top:42px" width="22" height="20" viewBox="0 0 22 20"><polyline points="3,5 6.6,11.3 14.3,5" fill="none" stroke="#e8e8e8" stroke-width="1.4"/><circle cx="3" cy="5" r="1.5" fill="#e8e8e8"/><circle cx="14.3" cy="5" r="1.5" fill="#e8e8e8"/><circle cx="6.6" cy="11.3" r="1.4" fill="#e8e8e8"/><circle cx="13.4" cy="12.2" r="3.1" fill="#2e3032" stroke="#dcdcdc" stroke-width="1.1"/><circle cx="13.4" cy="12.2" r="1.3" fill="#e8e8e8"/></svg><svg class="a" style="left:133px;top:41px" width="20" height="20" viewBox="133 41 20 20"><path d="M147.80,51.50 L147.71,52.44 L146.19,52.82 L145.87,53.42 L146.39,54.89 L145.67,55.49 L144.32,54.69 L143.67,54.89 L143.00,56.30 L142.06,56.21 L141.68,54.69 L141.08,54.37 L139.61,54.89 L139.01,54.17 L139.81,52.82 L139.61,52.17 L138.20,51.50 L138.29,50.56 L139.81,50.18 L140.13,49.58 L139.61,48.11 L140.33,47.51 L141.68,48.31 L142.33,48.11 L143.00,46.70 L143.94,46.79 L144.32,48.31 L144.92,48.63 L146.39,48.11 L146.99,48.83 L146.19,50.18 L146.39,50.83Z" fill="#e8e8e8"/><circle cx="143" cy="51.5" r="1.54" fill="#2e3032"/></svg><div class="a" style="left:229px;top:44px;width:18px;height:15px;background:#4e5052;border-radius:1px"></div><svg class="a" style="left:229px;top:44px" width="18" height="15" viewBox="0 0 18 15"><circle cx="9" cy="7.5" r="5" fill="#e8e8e8"/><rect x="6.2" y="6.9" width="5.6" height="1.3" fill="#3a3a3a"/><rect x="8.35" y="4.7" width="1.3" height="5.6" fill="#3a3a3a"/></svg><div class="a" style="left:70.5px;top:64px;width:175px;height:518.5px;overflow:hidden"><div class="a" style="left:0;top:-25px;width:174.5px;height:1px;background:#333436"></div><div class="a" style="left:0.5px;top:-25px;width:9px;height:43px;background:#5a9fc4"></div><svg class="a" style="left:2px;top:-22.5px" width="7" height="5" viewBox="0 0 7 5"><path d="M0.5 0.5 L6.5 0.5 L3.5 3.5 Z" fill="#1a1a1a"/></svg><div class="a" style="left:16.5px;top:-2px;width:14px;height:14px;background:#515355;border-radius:1px;color:#f4f4f4;font:bold 8.5px 'Liberation Sans', sans-serif;line-height:14px;text-align:center;-webkit-text-stroke:0.3px #f4f4f4">M</div><div class="a" style="left:32.5px;top:-2px;width:14px;height:14px;background:#515355;border-radius:1px;color:#f4f4f4;font:bold 8.5px 'Liberation Sans', sans-serif;line-height:14px;text-align:center;-webkit-text-stroke:0.3px #f4f4f4">S</div><div class="a" style="left:53.6px;top:-1.5px;width:13.5px;height:13.5px;border-radius:50%;background:#555658;border:0.8px solid #38393b"></div><div class="a" style="left:56.6px;top:1.5px;width:7px;height:7px;border-radius:50%;background:#b0b1b2"></div><svg class="a" style="left:10px;top:11px" width="6" height="5" viewBox="0 0 6 5"><path d="M0.5 1 L5.5 1 L3 4 Z" fill="#8d8f91"/></svg><div class="a" style="left:0;top:18px;width:174.5px;height:1px;background:#333436"></div><div class="a" style="left:0.5px;top:18px;width:9px;height:43px;background:#1ea6e0"></div><svg class="a" style="left:2px;top:20.5px" width="7" height="5" viewBox="0 0 7 5"><path d="M0.5 0.5 L6.5 0.5 L3.5 3.5 Z" fill="#1a1a1a"/></svg><svg class="a" style="left:15px;top:21.8px" width="12" height="10" viewBox="0 0 12 10"><g stroke="#9a9c9e" stroke-width="1"><line x1="0.5" y1="4.4" x2="0.5" y2="5.6"/><line x1="1.5" y1="3.8" x2="1.5" y2="6.2"/><line x1="2.5" y1="2.8" x2="2.5" y2="7.2"/><line x1="3.5" y1="1.6" x2="3.5" y2="8.4"/><line x1="4.5" y1="0.0" x2="4.5" y2="10.0"/><line x1="5.5" y1="2.4" x2="5.5" y2="7.6"/><line x1="6.5" y1="3.4" x2="6.5" y2="6.6"/><line x1="7.5" y1="2.6" x2="7.5" y2="7.4"/><line x1="8.5" y1="1.8" x2="8.5" y2="8.2"/><line x1="9.5" y1="0.2" x2="9.5" y2="9.8"/><line x1="10.5" y1="2.8" x2="10.5" y2="7.2"/><line x1="11.5" y1="4.1" x2="11.5" y2="5.9"/></g></svg><div class="a" style="left:34px;top:22.3px;height:10px;color:#e2e2e2;font:8px 'Liberation Sans', sans-serif;line-height:10px;white-space:nowrap;-webkit-text-stroke:0.12px #e2e2e2;letter-spacing:-0.05px">3 - Trumpet</div><div class="a" style="left:16.5px;top:41px;width:14px;height:14px;background:#515355;border-radius:1px;color:#f4f4f4;font:bold 8.5px 'Liberation Sans', sans-serif;line-height:14px;text-align:center;-webkit-text-stroke:0.3px #f4f4f4">M</div><div class="a" style="left:32.5px;top:41px;width:14px;height:14px;background:#515355;border-radius:1px;color:#f4f4f4;font:bold 8.5px 'Liberation Sans', sans-serif;line-height:14px;text-align:center;-webkit-text-stroke:0.3px #f4f4f4">S</div><div class="a" style="left:53.6px;top:41.5px;width:13.5px;height:13.5px;border-radius:50%;background:#555658;border:0.8px solid #38393b"></div><div class="a" style="left:56.6px;top:44.5px;width:7px;height:7px;border-radius:50%;background:#b0b1b2"></div><svg class="a" style="left:10px;top:54px" width="6" height="5" viewBox="0 0 6 5"><path d="M0.5 1 L5.5 1 L3 4 Z" fill="#8d8f91"/></svg><div class="a" style="left:0;top:61px;width:174.5px;height:1px;background:#333436"></div><div class="a" style="left:0.5px;top:61px;width:9px;height:43px;background:#1ea6e0"></div><svg class="a" style="left:2px;top:63.5px" width="7" height="5" viewBox="0 0 7 5"><path d="M0.5 0.5 L6.5 0.5 L3.5 3.5 Z" fill="#1a1a1a"/></svg><svg class="a" style="left:15px;top:64.8px" width="12" height="10" viewBox="0 0 12 10"><g stroke="#9a9c9e" stroke-width="1"><line x1="0.5" y1="4.4" x2="0.5" y2="5.6"/><line x1="1.5" y1="3.8" x2="1.5" y2="6.2"/><line x1="2.5" y1="2.8" x2="2.5" y2="7.2"/><line x1="3.5" y1="1.6" x2="3.5" y2="8.4"/><line x1="4.5" y1="0.0" x2="4.5" y2="10.0"/><line x1="5.5" y1="2.4" x2="5.5" y2="7.6"/><line x1="6.5" y1="3.4" x2="6.5" y2="6.6"/><line x1="7.5" y1="2.6" x2="7.5" y2="7.4"/><line x1="8.5" y1="1.8" x2="8.5" y2="8.2"/><line x1="9.5" y1="0.2" x2="9.5" y2="9.8"/><line x1="10.5" y1="2.8" x2="10.5" y2="7.2"/><line x1="11.5" y1="4.1" x2="11.5" y2="5.9"/></g></svg><div class="a" style="left:34px;top:65.3px;height:10px;color:#e2e2e2;font:8px 'Liberation Sans', sans-serif;line-height:10px;white-space:nowrap;-webkit-text-stroke:0.12px #e2e2e2;letter-spacing:-0.05px">4 - Trumpet</div><div class="a" style="left:16.5px;top:84px;width:14px;height:14px;background:#515355;border-radius:1px;color:#f4f4f4;font:bold 8.5px 'Liberation Sans', sans-serif;line-height:14px;text-align:center;-webkit-text-stroke:0.3px #f4f4f4">M</div><div class="a" style="left:32.5px;top:84px;width:14px;height:14px;background:#515355;border-radius:1px;color:#f4f4f4;font:bold 8.5px 'Liberation Sans', sans-serif;line-height:14px;text-align:center;-webkit-text-stroke:0.3px #f4f4f4">S</div><div class="a" style="left:53.6px;top:84.5px;width:13.5px;height:13.5px;border-radius:50%;background:#555658;border:0.8px solid #38393b"></div><div class="a" style="left:56.6px;top:87.5px;width:7px;height:7px;border-radius:50%;background:#b0b1b2"></div><svg class="a" style="left:10px;top:97px" width="6" height="5" viewBox="0 0 6 5"><path d="M0.5 1 L5.5 1 L3 4 Z" fill="#8d8f91"/></svg><div class="a" style="left:0;top:104px;width:174.5px;height:1px;background:#333436"></div><div class="a" style="left:0.5px;top:104px;width:9px;height:43px;background:#1ea6e0"></div><svg class="a" style="left:2px;top:106.5px" width="7" height="5" viewBox="0 0 7 5"><path d="M0.5 0.5 L6.5 0.5 L3.5 3.5 Z" fill="#1a1a1a"/></svg><svg class="a" style="left:15px;top:107.8px" width="12" height="10" viewBox="0 0 12 10"><g stroke="#9a9c9e" stroke-width="1"><line x1="0.5" y1="4.4" x2="0.5" y2="5.6"/><line x1="1.5" y1="3.8" x2="1.5" y2="6.2"/><line x1="2.5" y1="2.8" x2="2.5" y2="7.2"/><line x1="3.5" y1="1.6" x2="3.5" y2="8.4"/><line x1="4.5" y1="0.0" x2="4.5" y2="10.0"/><line x1="5.5" y1="2.4" x2="5.5" y2="7.6"/><line x1="6.5" y1="3.4" x2="6.5" y2="6.6"/><line x1="7.5" y1="2.6" x2="7.5" y2="7.4"/><line x1="8.5" y1="1.8" x2="8.5" y2="8.2"/><line x1="9.5" y1="0.2" x2="9.5" y2="9.8"/><line x1="10.5" y1="2.8" x2="10.5" y2="7.2"/><line x1="11.5" y1="4.1" x2="11.5" y2="5.9"/></g></svg><div class="a" style="left:34px;top:108.3px;height:10px;color:#e2e2e2;font:8px 'Liberation Sans', sans-serif;line-height:10px;white-space:nowrap;-webkit-text-stroke:0.12px #e2e2e2;letter-spacing:-0.05px">5 - Flugel Horn</div><div class="a" style="left:16.5px;top:127px;width:14px;height:14px;background:#515355;border-radius:1px;color:#f4f4f4;font:bold 8.5px 'Liberation Sans', sans-serif;line-height:14px;text-align:center;-webkit-text-stroke:0.3px #f4f4f4">M</div><div class="a" style="left:32.5px;top:127px;width:14px;height:14px;background:#515355;border-radius:1px;color:#f4f4f4;font:bold 8.5px 'Liberation Sans', sans-serif;line-height:14px;text-align:center;-webkit-text-stroke:0.3px #f4f4f4">S</div><div class="a" style="left:53.6px;top:127.5px;width:13.5px;height:13.5px;border-radius:50%;background:#555658;border:0.8px solid #38393b"></div><div class="a" style="left:56.6px;top:130.5px;width:7px;height:7px;border-radius:50%;background:#b0b1b2"></div><svg class="a" style="left:10px;top:140px" width="6" height="5" viewBox="0 0 6 5"><path d="M0.5 1 L5.5 1 L3 4 Z" fill="#8d8f91"/></svg><div class="a" style="left:0;top:147px;width:174.5px;height:1px;background:#333436"></div><div class="a" style="left:0.5px;top:147px;width:9px;height:43px;background:#a6d65c"></div><svg class="a" style="left:2px;top:149.5px" width="7" height="5" viewBox="0 0 7 5"><path d="M0.5 0.5 L6.5 0.5 L3.5 3.5 Z" fill="#1a1a1a"/></svg><svg class="a" style="left:15px;top:150.8px" width="12" height="10" viewBox="0 0 12 10"><g stroke="#9a9c9e" stroke-width="1"><line x1="0.5" y1="4.4" x2="0.5" y2="5.6"/><line x1="1.5" y1="3.8" x2="1.5" y2="6.2"/><line x1="2.5" y1="2.8" x2="2.5" y2="7.2"/><line x1="3.5" y1="1.6" x2="3.5" y2="8.4"/><line x1="4.5" y1="0.0" x2="4.5" y2="10.0"/><line x1="5.5" y1="2.4" x2="5.5" y2="7.6"/><line x1="6.5" y1="3.4" x2="6.5" y2="6.6"/><line x1="7.5" y1="2.6" x2="7.5" y2="7.4"/><line x1="8.5" y1="1.8" x2="8.5" y2="8.2"/><line x1="9.5" y1="0.2" x2="9.5" y2="9.8"/><line x1="10.5" y1="2.8" x2="10.5" y2="7.2"/><line x1="11.5" y1="4.1" x2="11.5" y2="5.9"/></g></svg><div class="a" style="left:34px;top:151.3px;height:10px;color:#e2e2e2;font:8px 'Liberation Sans', sans-serif;line-height:10px;white-space:nowrap;-webkit-text-stroke:0.12px #e2e2e2;letter-spacing:-0.05px">6 - Synth 1</div><div class="a" style="left:16.5px;top:170px;width:14px;height:14px;background:#515355;border-radius:1px;color:#f4f4f4;font:bold 8.5px 'Liberation Sans', sans-serif;line-height:14px;text-align:center;-webkit-text-stroke:0.3px #f4f4f4">M</div><div class="a" style="left:32.5px;top:170px;width:14px;height:14px;background:#515355;border-radius:1px;color:#f4f4f4;font:bold 8.5px 'Liberation Sans', sans-serif;line-height:14px;text-align:center;-webkit-text-stroke:0.3px #f4f4f4">S</div><div class="a" style="left:53.6px;top:170.5px;width:13.5px;height:13.5px;border-radius:50%;background:#555658;border:0.8px solid #38393b"></div><div class="a" style="left:56.6px;top:173.5px;width:7px;height:7px;border-radius:50%;background:#b0b1b2"></div><svg class="a" style="left:10px;top:183px" width="6" height="5" viewBox="0 0 6 5"><path d="M0.5 1 L5.5 1 L3 4 Z" fill="#8d8f91"/></svg><div class="a" style="left:0;top:190px;width:174.5px;height:1px;background:#333436"></div><div class="a" style="left:0.5px;top:190px;width:9px;height:43px;background:#e2bc52"></div><svg class="a" style="left:2px;top:192.5px" width="7" height="5" viewBox="0 0 7 5"><path d="M0.5 0.5 L6.5 0.5 L3.5 3.5 Z" fill="#1a1a1a"/></svg><svg class="a" style="left:15px;top:193.8px" width="12" height="10" viewBox="0 0 12 10"><g stroke="#9a9c9e" stroke-width="1"><line x1="0.5" y1="4.4" x2="0.5" y2="5.6"/><line x1="1.5" y1="3.8" x2="1.5" y2="6.2"/><line x1="2.5" y1="2.8" x2="2.5" y2="7.2"/><line x1="3.5" y1="1.6" x2="3.5" y2="8.4"/><line x1="4.5" y1="0.0" x2="4.5" y2="10.0"/><line x1="5.5" y1="2.4" x2="5.5" y2="7.6"/><line x1="6.5" y1="3.4" x2="6.5" y2="6.6"/><line x1="7.5" y1="2.6" x2="7.5" y2="7.4"/><line x1="8.5" y1="1.8" x2="8.5" y2="8.2"/><line x1="9.5" y1="0.2" x2="9.5" y2="9.8"/><line x1="10.5" y1="2.8" x2="10.5" y2="7.2"/><line x1="11.5" y1="4.1" x2="11.5" y2="5.9"/></g></svg><div class="a" style="left:34px;top:194.3px;height:10px;color:#e2e2e2;font:8px 'Liberation Sans', sans-serif;line-height:10px;white-space:nowrap;-webkit-text-stroke:0.12px #e2e2e2;letter-spacing:-0.05px">7 - Guitar</div><div class="a" style="left:16.5px;top:213px;width:14px;height:14px;background:#515355;border-radius:1px;color:#f4f4f4;font:bold 8.5px 'Liberation Sans', sans-serif;line-height:14px;text-align:center;-webkit-text-stroke:0.3px #f4f4f4">M</div><div class="a" style="left:32.5px;top:213px;width:14px;height:14px;background:#515355;border-radius:1px;color:#f4f4f4;font:bold 8.5px 'Liberation Sans', sans-serif;line-height:14px;text-align:center;-webkit-text-stroke:0.3px #f4f4f4">S</div><div class="a" style="left:53.6px;top:213.5px;width:13.5px;height:13.5px;border-radius:50%;background:#555658;border:0.8px solid #38393b"></div><div class="a" style="left:56.6px;top:216.5px;width:7px;height:7px;border-radius:50%;background:#b0b1b2"></div><svg class="a" style="left:10px;top:226px" width="6" height="5" viewBox="0 0 6 5"><path d="M0.5 1 L5.5 1 L3 4 Z" fill="#8d8f91"/></svg><div class="a" style="left:0;top:233px;width:174.5px;height:1px;background:#333436"></div><div class="a" style="left:0.5px;top:233px;width:9px;height:43px;background:#e2bc52"></div><svg class="a" style="left:2px;top:235.5px" width="7" height="5" viewBox="0 0 7 5"><path d="M0.5 0.5 L6.5 0.5 L3.5 3.5 Z" fill="#1a1a1a"/></svg><svg class="a" style="left:15px;top:236.8px" width="12" height="10" viewBox="0 0 12 10"><g stroke="#9a9c9e" stroke-width="1"><line x1="0.5" y1="4.4" x2="0.5" y2="5.6"/><line x1="1.5" y1="3.8" x2="1.5" y2="6.2"/><line x1="2.5" y1="2.8" x2="2.5" y2="7.2"/><line x1="3.5" y1="1.6" x2="3.5" y2="8.4"/><line x1="4.5" y1="0.0" x2="4.5" y2="10.0"/><line x1="5.5" y1="2.4" x2="5.5" y2="7.6"/><line x1="6.5" y1="3.4" x2="6.5" y2="6.6"/><line x1="7.5" y1="2.6" x2="7.5" y2="7.4"/><line x1="8.5" y1="1.8" x2="8.5" y2="8.2"/><line x1="9.5" y1="0.2" x2="9.5" y2="9.8"/><line x1="10.5" y1="2.8" x2="10.5" y2="7.2"/><line x1="11.5" y1="4.1" x2="11.5" y2="5.9"/></g></svg><div class="a" style="left:34px;top:237.3px;height:10px;color:#e2e2e2;font:8px 'Liberation Sans', sans-serif;line-height:10px;white-space:nowrap;-webkit-text-stroke:0.12px #e2e2e2;letter-spacing:-0.05px">8 - Guitar</div><div class="a" style="left:16.5px;top:256px;width:14px;height:14px;background:#515355;border-radius:1px;color:#f4f4f4;font:bold 8.5px 'Liberation Sans', sans-serif;line-height:14px;text-align:center;-webkit-text-stroke:0.3px #f4f4f4">M</div><div class="a" style="left:32.5px;top:256px;width:14px;height:14px;background:#515355;border-radius:1px;color:#f4f4f4;font:bold 8.5px 'Liberation Sans', sans-serif;line-height:14px;text-align:center;-webkit-text-stroke:0.3px #f4f4f4">S</div><div class="a" style="left:53.6px;top:256.5px;width:13.5px;height:13.5px;border-radius:50%;background:#555658;border:0.8px solid #38393b"></div><div class="a" style="left:56.6px;top:259.5px;width:7px;height:7px;border-radius:50%;background:#b0b1b2"></div><svg class="a" style="left:10px;top:269px" width="6" height="5" viewBox="0 0 6 5"><path d="M0.5 1 L5.5 1 L3 4 Z" fill="#8d8f91"/></svg><div class="a" style="left:0;top:276px;width:174.5px;height:1px;background:#333436"></div><div class="a" style="left:0.5px;top:276px;width:9px;height:43px;background:#14cc14"></div><svg class="a" style="left:2px;top:278.5px" width="7" height="5" viewBox="0 0 7 5"><path d="M0.5 0.5 L6.5 0.5 L3.5 3.5 Z" fill="#1a1a1a"/></svg><svg class="a" style="left:15px;top:279.8px" width="12" height="10" viewBox="0 0 12 10"><g stroke="#9a9c9e" stroke-width="1"><line x1="0.5" y1="4.4" x2="0.5" y2="5.6"/><line x1="1.5" y1="3.8" x2="1.5" y2="6.2"/><line x1="2.5" y1="2.8" x2="2.5" y2="7.2"/><line x1="3.5" y1="1.6" x2="3.5" y2="8.4"/><line x1="4.5" y1="0.0" x2="4.5" y2="10.0"/><line x1="5.5" y1="2.4" x2="5.5" y2="7.6"/><line x1="6.5" y1="3.4" x2="6.5" y2="6.6"/><line x1="7.5" y1="2.6" x2="7.5" y2="7.4"/><line x1="8.5" y1="1.8" x2="8.5" y2="8.2"/><line x1="9.5" y1="0.2" x2="9.5" y2="9.8"/><line x1="10.5" y1="2.8" x2="10.5" y2="7.2"/><line x1="11.5" y1="4.1" x2="11.5" y2="5.9"/></g></svg><div class="a" style="left:34px;top:280.3px;height:10px;color:#e2e2e2;font:8px 'Liberation Sans', sans-serif;line-height:10px;white-space:nowrap;-webkit-text-stroke:0.12px #e2e2e2;letter-spacing:-0.05px">9 - Felt Piano</div><div class="a" style="left:16.5px;top:299px;width:14px;height:14px;background:#515355;border-radius:1px;color:#f4f4f4;font:bold 8.5px 'Liberation Sans', sans-serif;line-height:14px;text-align:center;-webkit-text-stroke:0.3px #f4f4f4">M</div><div class="a" style="left:32.5px;top:299px;width:14px;height:14px;background:#515355;border-radius:1px;color:#f4f4f4;font:bold 8.5px 'Liberation Sans', sans-serif;line-height:14px;text-align:center;-webkit-text-stroke:0.3px #f4f4f4">S</div><div class="a" style="left:53.6px;top:299.5px;width:13.5px;height:13.5px;border-radius:50%;background:#555658;border:0.8px solid #38393b"></div><div class="a" style="left:56.6px;top:302.5px;width:7px;height:7px;border-radius:50%;background:#b0b1b2"></div><svg class="a" style="left:10px;top:312px" width="6" height="5" viewBox="0 0 6 5"><path d="M0.5 1 L5.5 1 L3 4 Z" fill="#8d8f91"/></svg><div class="a" style="left:0;top:319px;width:174.5px;height:1px;background:#333436"></div><div class="a" style="left:0.5px;top:319px;width:9px;height:43px;background:#14cc14"></div><svg class="a" style="left:2px;top:321.5px" width="7" height="5" viewBox="0 0 7 5"><path d="M0.5 0.5 L6.5 0.5 L3.5 3.5 Z" fill="#1a1a1a"/></svg><svg class="a" style="left:15px;top:322.8px" width="12" height="10" viewBox="0 0 12 10"><g stroke="#9a9c9e" stroke-width="1"><line x1="0.5" y1="4.4" x2="0.5" y2="5.6"/><line x1="1.5" y1="3.8" x2="1.5" y2="6.2"/><line x1="2.5" y1="2.8" x2="2.5" y2="7.2"/><line x1="3.5" y1="1.6" x2="3.5" y2="8.4"/><line x1="4.5" y1="0.0" x2="4.5" y2="10.0"/><line x1="5.5" y1="2.4" x2="5.5" y2="7.6"/><line x1="6.5" y1="3.4" x2="6.5" y2="6.6"/><line x1="7.5" y1="2.6" x2="7.5" y2="7.4"/><line x1="8.5" y1="1.8" x2="8.5" y2="8.2"/><line x1="9.5" y1="0.2" x2="9.5" y2="9.8"/><line x1="10.5" y1="2.8" x2="10.5" y2="7.2"/><line x1="11.5" y1="4.1" x2="11.5" y2="5.9"/></g></svg><div class="a" style="left:34px;top:323.3px;height:10px;color:#e2e2e2;font:8px 'Liberation Sans', sans-serif;line-height:10px;white-space:nowrap;-webkit-text-stroke:0.12px #e2e2e2;letter-spacing:-0.05px">10 - Rhodes</div><div class="a" style="left:16.5px;top:342px;width:14px;height:14px;background:#515355;border-radius:1px;color:#f4f4f4;font:bold 8.5px 'Liberation Sans', sans-serif;line-height:14px;text-align:center;-webkit-text-stroke:0.3px #f4f4f4">M</div><div class="a" style="left:32.5px;top:342px;width:14px;height:14px;background:#515355;border-radius:1px;color:#f4f4f4;font:bold 8.5px 'Liberation Sans', sans-serif;line-height:14px;text-align:center;-webkit-text-stroke:0.3px #f4f4f4">S</div><div class="a" style="left:53.6px;top:342.5px;width:13.5px;height:13.5px;border-radius:50%;background:#555658;border:0.8px solid #38393b"></div><div class="a" style="left:56.6px;top:345.5px;width:7px;height:7px;border-radius:50%;background:#b0b1b2"></div><svg class="a" style="left:10px;top:355px" width="6" height="5" viewBox="0 0 6 5"><path d="M0.5 1 L5.5 1 L3 4 Z" fill="#8d8f91"/></svg><div class="a" style="left:0;top:362px;width:174.5px;height:1px;background:#333436"></div><div class="a" style="left:0.5px;top:362px;width:9px;height:43px;background:#14cc14"></div><svg class="a" style="left:2px;top:364.5px" width="7" height="5" viewBox="0 0 7 5"><path d="M0.5 0.5 L6.5 0.5 L3.5 3.5 Z" fill="#1a1a1a"/></svg><svg class="a" style="left:15px;top:365.8px" width="12" height="10" viewBox="0 0 12 10"><g stroke="#9a9c9e" stroke-width="1"><line x1="0.5" y1="4.4" x2="0.5" y2="5.6"/><line x1="1.5" y1="3.8" x2="1.5" y2="6.2"/><line x1="2.5" y1="2.8" x2="2.5" y2="7.2"/><line x1="3.5" y1="1.6" x2="3.5" y2="8.4"/><line x1="4.5" y1="0.0" x2="4.5" y2="10.0"/><line x1="5.5" y1="2.4" x2="5.5" y2="7.6"/><line x1="6.5" y1="3.4" x2="6.5" y2="6.6"/><line x1="7.5" y1="2.6" x2="7.5" y2="7.4"/><line x1="8.5" y1="1.8" x2="8.5" y2="8.2"/><line x1="9.5" y1="0.2" x2="9.5" y2="9.8"/><line x1="10.5" y1="2.8" x2="10.5" y2="7.2"/><line x1="11.5" y1="4.1" x2="11.5" y2="5.9"/></g></svg><div class="a" style="left:34px;top:366.3px;height:10px;color:#e2e2e2;font:8px 'Liberation Sans', sans-serif;line-height:10px;white-space:nowrap;-webkit-text-stroke:0.12px #e2e2e2;letter-spacing:-0.05px">11 - Rhodes</div><div class="a" style="left:16.5px;top:385px;width:14px;height:14px;background:#515355;border-radius:1px;color:#f4f4f4;font:bold 8.5px 'Liberation Sans', sans-serif;line-height:14px;text-align:center;-webkit-text-stroke:0.3px #f4f4f4">M</div><div class="a" style="left:32.5px;top:385px;width:14px;height:14px;background:#515355;border-radius:1px;color:#f4f4f4;font:bold 8.5px 'Liberation Sans', sans-serif;line-height:14px;text-align:center;-webkit-text-stroke:0.3px #f4f4f4">S</div><div class="a" style="left:53.6px;top:385.5px;width:13.5px;height:13.5px;border-radius:50%;background:#555658;border:0.8px solid #38393b"></div><div class="a" style="left:56.6px;top:388.5px;width:7px;height:7px;border-radius:50%;background:#b0b1b2"></div><svg class="a" style="left:10px;top:398px" width="6" height="5" viewBox="0 0 6 5"><path d="M0.5 1 L5.5 1 L3 4 Z" fill="#8d8f91"/></svg><div class="a" style="left:0;top:405px;width:174.5px;height:1px;background:#333436"></div><div class="a" style="left:0.5px;top:405px;width:9px;height:43px;background:#e03a4b"></div><svg class="a" style="left:2px;top:407.5px" width="7" height="5" viewBox="0 0 7 5"><path d="M0.5 0.5 L6.5 0.5 L3.5 3.5 Z" fill="#1a1a1a"/></svg><svg class="a" style="left:15px;top:408.8px" width="12" height="10" viewBox="0 0 12 10"><g stroke="#9a9c9e" stroke-width="1"><line x1="0.5" y1="4.4" x2="0.5" y2="5.6"/><line x1="1.5" y1="3.8" x2="1.5" y2="6.2"/><line x1="2.5" y1="2.8" x2="2.5" y2="7.2"/><line x1="3.5" y1="1.6" x2="3.5" y2="8.4"/><line x1="4.5" y1="0.0" x2="4.5" y2="10.0"/><line x1="5.5" y1="2.4" x2="5.5" y2="7.6"/><line x1="6.5" y1="3.4" x2="6.5" y2="6.6"/><line x1="7.5" y1="2.6" x2="7.5" y2="7.4"/><line x1="8.5" y1="1.8" x2="8.5" y2="8.2"/><line x1="9.5" y1="0.2" x2="9.5" y2="9.8"/><line x1="10.5" y1="2.8" x2="10.5" y2="7.2"/><line x1="11.5" y1="4.1" x2="11.5" y2="5.9"/></g></svg><div class="a" style="left:34px;top:409.3px;height:10px;color:#e2e2e2;font:8px 'Liberation Sans', sans-serif;line-height:10px;white-space:nowrap;-webkit-text-stroke:0.12px #e2e2e2;letter-spacing:-0.05px">12 - Bass</div><div class="a" style="left:16.5px;top:428px;width:14px;height:14px;background:#515355;border-radius:1px;color:#f4f4f4;font:bold 8.5px 'Liberation Sans', sans-serif;line-height:14px;text-align:center;-webkit-text-stroke:0.3px #f4f4f4">M</div><div class="a" style="left:32.5px;top:428px;width:14px;height:14px;background:#515355;border-radius:1px;color:#f4f4f4;font:bold 8.5px 'Liberation Sans', sans-serif;line-height:14px;text-align:center;-webkit-text-stroke:0.3px #f4f4f4">S</div><div class="a" style="left:53.6px;top:428.5px;width:13.5px;height:13.5px;border-radius:50%;background:#555658;border:0.8px solid #38393b"></div><div class="a" style="left:56.6px;top:431.5px;width:7px;height:7px;border-radius:50%;background:#b0b1b2"></div><svg class="a" style="left:10px;top:441px" width="6" height="5" viewBox="0 0 6 5"><path d="M0.5 1 L5.5 1 L3 4 Z" fill="#8d8f91"/></svg><div class="a" style="left:0;top:448px;width:174.5px;height:1px;background:#333436"></div><div class="a" style="left:0.5px;top:448px;width:9px;height:43px;background:#5252de"></div><svg class="a" style="left:2px;top:450.5px" width="7" height="5" viewBox="0 0 7 5"><path d="M0.5 0.5 L6.5 0.5 L3.5 3.5 Z" fill="#1a1a1a"/></svg><svg class="a" style="left:15px;top:451.8px" width="12" height="10" viewBox="0 0 12 10"><g stroke="#9a9c9e" stroke-width="1"><line x1="0.5" y1="4.4" x2="0.5" y2="5.6"/><line x1="1.5" y1="3.8" x2="1.5" y2="6.2"/><line x1="2.5" y1="2.8" x2="2.5" y2="7.2"/><line x1="3.5" y1="1.6" x2="3.5" y2="8.4"/><line x1="4.5" y1="0.0" x2="4.5" y2="10.0"/><line x1="5.5" y1="2.4" x2="5.5" y2="7.6"/><line x1="6.5" y1="3.4" x2="6.5" y2="6.6"/><line x1="7.5" y1="2.6" x2="7.5" y2="7.4"/><line x1="8.5" y1="1.8" x2="8.5" y2="8.2"/><line x1="9.5" y1="0.2" x2="9.5" y2="9.8"/><line x1="10.5" y1="2.8" x2="10.5" y2="7.2"/><line x1="11.5" y1="4.1" x2="11.5" y2="5.9"/></g></svg><div class="a" style="left:34px;top:452.3px;height:10px;color:#e2e2e2;font:8px 'Liberation Sans', sans-serif;line-height:10px;white-space:nowrap;-webkit-text-stroke:0.12px #e2e2e2;letter-spacing:-0.05px">13 - Drums</div><div class="a" style="left:16.5px;top:471px;width:14px;height:14px;background:#515355;border-radius:1px;color:#f4f4f4;font:bold 8.5px 'Liberation Sans', sans-serif;line-height:14px;text-align:center;-webkit-text-stroke:0.3px #f4f4f4">M</div><div class="a" style="left:32.5px;top:471px;width:14px;height:14px;background:#515355;border-radius:1px;color:#f4f4f4;font:bold 8.5px 'Liberation Sans', sans-serif;line-height:14px;text-align:center;-webkit-text-stroke:0.3px #f4f4f4">S</div><div class="a" style="left:53.6px;top:471.5px;width:13.5px;height:13.5px;border-radius:50%;background:#555658;border:0.8px solid #38393b"></div><div class="a" style="left:56.6px;top:474.5px;width:7px;height:7px;border-radius:50%;background:#b0b1b2"></div><svg class="a" style="left:10px;top:484px" width="6" height="5" viewBox="0 0 6 5"><path d="M0.5 1 L5.5 1 L3 4 Z" fill="#8d8f91"/></svg><div class="a" style="left:0;top:491.5px;width:174.5px;height:30px;background:#313234"></div><div class="a" style="left:0.5px;top:491.5px;width:9px;height:30px;background:#5a5b5d"></div><svg class="a" style="left:2px;top:494.0px" width="7" height="5" viewBox="0 0 7 5"><path d="M0.5 0.5 L6.5 0.5 L3.5 3.5 Z" fill="#1a1a1a"/></svg><svg class="a" style="left:17.5px;top:496.5px" width="7" height="9" viewBox="0 0 7 9"><rect x="0.5" y="0.5" width="6" height="8" rx="0.8" fill="#bfc3c6"/><circle cx="3.5" cy="2.5" r="0.8" fill="#333"/><circle cx="3.5" cy="6" r="1.6" fill="#333"/></svg><div class="a" style="left:34.5px;top:495.5px;height:10px;color:#e4e4e4;font:8.3px 'Liberation Sans', sans-serif;line-height:10px;white-space:nowrap">Master</div><div class="a" style="left:16.5px;top:514.0px;width:14px;height:14px;background:#4a4c4e;border-radius:2px"></div><div class="a" style="left:32.5px;top:514.0px;width:14px;height:14px;background:#4a4c4e;border-radius:2px"></div></div><div class="a" style="left:0;top:582px;width:1000px;height:43px;background:#3a3b3d"></div><div class="a" style="left:0;top:582px;width:1000px;height:1.5px;background:#232426"></div><div class="a" style="left:0;top:583px;width:7px;height:42px;background:#343537"></div><div class="a" style="left:7px;top:590.5px;width:229px;height:26.5px;background:#47494b"></div><div class="a" style="left:44.5px;top:590.5px;width:1px;height:26.5px;background:#3c3e40"></div><div class="a" style="left:83px;top:590.5px;width:1px;height:26.5px;background:#3c3e40"></div><div class="a" style="left:122px;top:590.5px;width:1px;height:26.5px;background:#3c3e40"></div><div class="a" style="left:159.5px;top:590.5px;width:1px;height:26.5px;background:#3c3e40"></div><div class="a" style="left:197.5px;top:590.5px;width:1px;height:26.5px;background:#3c3e40"></div><div class="a" style="left:19.5px;top:597.5px;width:13px;height:13px;border-radius:50%;background:#d4e0e6"></div><svg class="a" style="left:55px;top:595px" width="20" height="19" viewBox="0 0 20 19"><path d="M3 1.8 L17 9.4 L3 17 Z" fill="#d4e0e6"/></svg><svg class="a" style="left:92px;top:596px" width="22" height="17" viewBox="0 0 22 17"><path d="M10 1.5 L1.5 8.5 L10 15.5 Z M19 1.5 L10.5 8.5 L19 15.5 Z" fill="#d4e0e6"/></svg><div class="a" style="left:134.5px;top:597.5px;width:13px;height:13px;background:#d4e0e6;border-radius:1px"></div><svg class="a" style="left:167.5px;top:595px" width="22" height="19" viewBox="0 0 22 19" style="overflow:visible"><g transform="translate(11 9.5) scale(1.12) translate(-11 -9.5)"><path d="M4 10.5 A6 5 0 0 1 10 5 L15 5" fill="none" stroke="#d4e0e6" stroke-width="2.2"/><path d="M14 1.8 L18 5 L14 8.2Z" fill="#d4e0e6"/><path d="M18 8.5 A6 5 0 0 1 12 14 L7 14" fill="none" stroke="#d4e0e6" stroke-width="2.2"/><path d="M8 10.8 L4 14 L8 17.2Z" fill="#d4e0e6"/></g></svg><div class="a" style="left:212px;top:593.3px;width:11px;height:11px;border-radius:50%;background:#d4e0e6"></div><div class="a" style="left:203px;top:605.5px;width:29px;height:12px;color:#d4e0e6;font:bold 11.2px 'Liberation Sans', sans-serif;line-height:12px;text-align:center;letter-spacing:0.2px"><span style="font-size:8.5px">1</span>234</div><div class="a" style="left:298.5px;top:588.5px;width:540.5px;height:31.5px;background:#323335"></div><div class="a" style="left:299px;top:589px;width:13px;height:31px;background:#2e2f31"></div><div class="a" style="left:300px;top:592px;width:11px;height:26px;color:#b8c8cc;font:bold 5.5px 'Liberation Sans', sans-serif;line-height:6.3px;text-align:center">L<br>I<br>V<br>E</div><div class="a" style="left:326px;top:597px;height:20px;color:#f0f0f0;font:16.4px 'Liberation Mono', monospace;line-height:20px;white-space:nowrap;transform:scaleY(1.1);transform-origin:0 0">1:1:000</div><div class="a" style="left:423.5px;top:589px;width:1px;height:31px;background:#2d2e30"></div><div class="a" style="left:424.5px;top:605.5px;width:96px;height:1px;background:#3d3e40"></div><div class="a" style="left:473.5px;top:589px;width:1px;height:31px;background:#2d2e30"></div><div class="a" style="left:520px;top:589px;width:1px;height:31px;background:#2d2e30"></div><div class="a" style="left:425px;top:593px;width:48px;height:10px;color:#e6e6e6;font:9.6px 'Liberation Sans', sans-serif;line-height:10px;text-align:center">Start</div><div class="a" style="left:425px;top:609px;width:48px;height:10px;color:#e6e6e6;font:9.6px 'Liberation Sans', sans-serif;line-height:10px;text-align:center">End</div><div class="a" style="left:474px;top:593px;width:46px;height:10px;color:#dcdcdc;font:8.8px 'Liberation Sans', sans-serif;line-height:10px;text-align:center;letter-spacing:-0.2px">1:1:000</div><div class="a" style="left:474px;top:609px;width:46px;height:10px;color:#dcdcdc;font:8.8px 'Liberation Sans', sans-serif;line-height:10px;text-align:center;letter-spacing:-0.2px">1:1:000</div><div class="a" style="left:521px;top:598px;width:67px;height:14px;color:#f4f4f4;font:bold 13.3px 'Liberation Sans', sans-serif;line-height:14px;text-align:center">Grid</div><div class="a" style="left:587px;top:589px;width:1px;height:31px;background:#2d2e30"></div><div class="a" style="left:590px;top:603px;width:118px;height:1px;background:#3d3e40"></div><div class="a" style="left:590px;top:592px;width:40px;height:10px;color:#c8c8c8;font:9.6px 'Liberation Sans', sans-serif;line-height:10px;text-align:center">Bpm</div><div class="a" style="left:590px;top:608px;width:40px;height:10px;color:#e8e8e8;font:bold 9px 'Liberation Sans', sans-serif;line-height:10px;text-align:center">80</div><div class="a" style="left:645px;top:592px;width:40px;height:10px;color:#c8c8c8;font:9.6px 'Liberation Sans', sans-serif;line-height:10px;text-align:center">Key</div><div class="a" style="left:645px;top:608px;width:40px;height:10px;color:#e8e8e8;font:bold 9px 'Liberation Sans', sans-serif;line-height:10px;text-align:center">G</div><svg class="a" style="left:633.5px;top:594px" width="8" height="5" viewBox="0 0 8 5"><path d="M0.5 4.6 L7.5 4.6 L4 0.6 Z" fill="#e4e4e4"/></svg><svg class="a" style="left:633.5px;top:609.5px" width="8" height="5" viewBox="0 0 8 5"><path d="M0.5 0.4 L7.5 0.4 L4 4.4 Z" fill="#e4e4e4"/></svg><svg class="a" style="left:689px;top:594px" width="8" height="5" viewBox="0 0 8 5"><path d="M0.5 4.6 L7.5 4.6 L4 0.6 Z" fill="#e4e4e4"/></svg><svg class="a" style="left:689px;top:609.5px" width="8" height="5" viewBox="0 0 8 5"><path d="M0.5 0.4 L7.5 0.4 L4 4.4 Z" fill="#e4e4e4"/></svg><svg class="a" style="left:716px;top:594px" width="20" height="20" viewBox="0 0 20 20"><path d="M6.5 2.5 L12.5 2.5 L17 17.5 L2 17.5 Z" fill="none" stroke="#d8e2e6" stroke-width="1.4"/><path d="M5 14 A4.5 4 0 0 1 14 14" fill="#d8e2e6"/><line x1="9" y1="13" x2="17" y2="2" stroke="#d8e2e6" stroke-width="1.3"/><rect x="2" y="15" width="15" height="2.5" fill="#d8e2e6"/></svg><svg class="a" style="left:753px;top:602px" width="8" height="5" viewBox="0 0 8 5"><path d="M0.5 0.4 L7.5 0.4 L4 4.4 Z" fill="#e4e4e4"/></svg><div class="a" style="left:765px;top:603.5px;width:28px;height:1px;background:#3d3e40"></div><div class="a" style="left:767px;top:592px;width:21px;height:10px;color:#e0e0e0;font:bold 9.6px 'Liberation Sans', sans-serif;line-height:10px;text-align:center">4</div><div class="a" style="left:767px;top:608px;width:21px;height:10px;color:#e0e0e0;font:bold 9.6px 'Liberation Sans', sans-serif;line-height:10px;text-align:center">4</div><svg class="a" style="left:806px;top:594px" width="20" height="20" viewBox="0 0 20 20"><ellipse cx="5" cy="15.5" rx="3.3" ry="2.5" fill="#d8e2e6"/><rect x="7.2" y="2.5" width="1.4" height="13" fill="#d8e2e6"/><circle cx="13.5" cy="8.5" r="4" fill="none" stroke="#d8e2e6" stroke-width="1.3"/><path d="M13.5 8.5 L13.5 6 M13.5 8.5 L15.3 9.5" stroke="#d8e2e6" stroke-width="1"/></svg><div class="a" style="left:265.3px;top:-2.5px;width:469.3px;height:399.7px;background:linear-gradient(#fafafa 0,#fafafa 20.5px,#f3f3f3 20.5px);border:1px solid #141414;border-radius:8px;overflow:hidden;box-shadow:0 0 0 0.5px rgba(0,0,0,0.4)"></div><div class="a" style="left:266.5px;top:19px;width:467px;height:1px;background:#a6a6a6"></div><div class="a" style="left:266.5px;top:20px;width:467px;height:1px;background:#fbfbfb"></div><svg class="a" style="left:270px;top:4px" width="40" height="12" viewBox="270 4 40 12"><circle cx="275.8" cy="9.5" r="4" fill="#fb1f1c" stroke="#c81410" stroke-width="0.8"/><circle cx="289.7" cy="9.5" r="4" fill="#b58310" stroke="#7e5806" stroke-width="0.8"/><circle cx="303.4" cy="9.5" r="4" fill="#dddddd" stroke="#bdbdbd" stroke-width="0.8"/><circle cx="303.4" cy="9.5" r="2" fill="none" stroke="#cfcfcf" stroke-width="0.6"/></svg><div class="a" style="left:400px;top:3.5px;width:200px;height:12px;line-height:12px;text-align:center;color:#262626;font:bold 9px 'Liberation Sans', sans-serif">Mixdown Song</div><div class="a" style="left:276px;top:26.2px;height:12px;line-height:12px;white-space:nowrap;color:#3a3a3a;font:normal 7.6px 'Liberation Sans', sans-serif;">Output file:</div><div class="a" style="left:323.3px;top:25.2px;width:342.3px;height:12.3px;background:#ffffff;border:1px solid #8a8a8a;border-radius:1px;"></div><div class="a" style="left:325.5px;top:26.4px;height:12px;line-height:12px;white-space:nowrap;color:#2a2a2a;font:normal 7.55px 'Liberation Sans', sans-serif;">/Users/mattthurtell/Desktop/Mastering Song/Exported Audio/Song Master.wav</div><div class="a" style="left:673.3px;top:26.4px;width:53.5px;height:11.5px;background:#fafafa;border:1px solid #8c8c8c;border-radius:3px;color:#222;font:7.6px 'Liberation Sans', sans-serif;line-height:9.5px;text-align:center;white-space:nowrap">Browse</div><div class="a" style="left:672px;top:46.3px;width:53.60000000000002px;height:12.0px;background:#fafafa;border:1px solid #8c8c8c;border-radius:3px;color:#222;font:7.6px 'Liberation Sans', sans-serif;line-height:10.0px;text-align:center;white-space:nowrap">Help</div><div class="a" style="left:672px;top:66.7px;width:53.60000000000002px;height:11.799999999999997px;background:#fafafa;border:1px solid #8c8c8c;border-radius:3px;color:#222;font:7.6px 'Liberation Sans', sans-serif;line-height:9.799999999999997px;text-align:center;white-space:nowrap">Cancel</div><div class="a" style="left:672px;top:87.6px;width:53.60000000000002px;height:11.5px;background:#fafafa;border:1px solid #8c8c8c;border-radius:3px;color:#222;font:7.6px 'Liberation Sans', sans-serif;line-height:9.5px;text-align:center;white-space:nowrap">Start</div><div class="a" style="left:282.8px;top:38.5px;height:12px;line-height:12px;white-space:nowrap;color:#222;font:normal 8.3px 'Liberation Sans', sans-serif;">Mode</div><div class="a" style="left:275.2px;top:48.4px;width:388.8px;height:15.200000000000003px;background:#ebebeb;border:1px solid #c4c4c4;border-radius:3px;"></div><svg class="a" style="left:278.8px;top:49.6px" width="12" height="12" viewBox="0 0 12 12"><circle cx="6" cy="6" r="4.5" fill="#a8eea0" stroke="#86e07c" stroke-width="1"/><circle cx="6" cy="6" r="1.6" fill="#5ccc52"/></svg><div class="a" style="left:291px;top:51.0px;height:12px;line-height:12px;white-space:nowrap;color:#3a3a3a;font:normal 7.6px 'Liberation Sans', sans-serif;">Offline mixdown</div><svg class="a" style="left:393.4px;top:49.2px" width="12" height="12" viewBox="0 0 12 12"><circle cx="6" cy="6" r="4.3" fill="#f4f4f4" stroke="#555" stroke-width="1.1"/></svg><div class="a" style="left:405.4px;top:50.5px;height:12px;line-height:12px;white-space:nowrap;color:#3a3a3a;font:normal 7.6px 'Liberation Sans', sans-serif;">Mixdown while playing</div><div class="a" style="left:281.3px;top:72px;width:9.699999999999989px;height:9.299999999999997px;background:#fafafa;border:1px solid #7a7a7a;border-radius:2px"></div><div class="a" style="left:295px;top:71.8px;height:12px;line-height:12px;white-space:nowrap;color:#2a2a2a;font:normal 7.6px 'Liberation Sans', sans-serif;">Burn audio CD track</div><div class="a" style="left:279.4px;top:87.6px;width:96.0px;height:11.300000000000011px;background:#fafafa;border:1px solid #8c8c8c;border-radius:3px;color:#222;font:7.6px 'Liberation Sans', sans-serif;line-height:9.300000000000011px;text-align:center;white-space:nowrap">Less options &lt;&lt;</div><div class="a" style="left:274px;top:117px;width:447.29999999999995px;height:10.200000000000003px;background:#7a7a7a;border:none;border-radius:2px;"></div><div class="a" style="left:274px;top:132.6px;height:12px;line-height:12px;white-space:nowrap;color:#4a4a4a;font:normal 7.6px 'Liberation Sans', sans-serif;">Progress</div><div class="a" style="left:281.8px;top:152.79999999999998px;height:12px;line-height:12px;white-space:nowrap;color:#2a2a2a;font:normal 8.3px 'Liberation Sans', sans-serif;">Interval to mixdown</div><div class="a" style="left:274.6px;top:162.8px;width:351.5px;height:20.399999999999977px;background:#ebebeb;border:1px solid #c4c4c4;border-radius:3px;"></div><svg class="a" style="left:279.4px;top:167px" width="12" height="12" viewBox="0 0 12 12"><circle cx="6" cy="6" r="4.5" fill="#a8eea0" stroke="#86e07c" stroke-width="1"/><circle cx="6" cy="6" r="1.6" fill="#5ccc52"/></svg><div class="a" style="left:291px;top:168.39999999999998px;height:12px;line-height:12px;white-space:nowrap;color:#3a3a3a;font:normal 7.6px 'Liberation Sans', sans-serif;">Entire song</div><svg class="a" style="left:367px;top:167.2px" width="12" height="12" viewBox="0 0 12 12"><circle cx="6" cy="6" r="4.3" fill="#f4f4f4" stroke="#555" stroke-width="1.1"/></svg><div class="a" style="left:379px;top:168.39999999999998px;height:12px;line-height:12px;white-space:nowrap;color:#3a3a3a;font:normal 7.6px 'Liberation Sans', sans-serif;">From:</div><div class="a" style="left:409.5px;top:165.2px;width:39.10000000000002px;height:12.5px;background:#f6f6f6;border:1px solid #b4b4b4;border-radius:0px;"></div><div class="a" style="left:411.5px;top:166.79999999999998px;height:12px;line-height:12px;white-space:nowrap;color:#8a8a8a;font:normal 7.4px 'Liberation Sans', sans-serif;">1:1:000</div><div class="a" style="left:458px;top:167.5px;height:12px;line-height:12px;white-space:nowrap;color:#3a3a3a;font:normal 7.6px 'Liberation Sans', sans-serif;">to:</div><div class="a" style="left:472.6px;top:165.2px;width:38.599999999999966px;height:12.5px;background:#f6f6f6;border:1px solid #b4b4b4;border-radius:0px;"></div><div class="a" style="left:474.6px;top:166.79999999999998px;height:12px;line-height:12px;white-space:nowrap;color:#8a8a8a;font:normal 7.4px 'Liberation Sans', sans-serif;">9:1:000</div><div class="a" style="left:565.8px;top:167.39999999999998px;height:12px;line-height:12px;white-space:nowrap;color:#3a3a3a;font:normal 7.6px 'Liberation Sans', sans-serif;">Loops:</div><div class="a" style="left:593px;top:165.2px;width:17.5px;height:12.5px;background:#fafafa;border:1px solid #9a9a9a;border-radius:0px;"></div><div class="a" style="left:596px;top:166.6px;height:12px;line-height:12px;white-space:nowrap;color:#333;font:normal 7.4px 'Liberation Sans', sans-serif;">1</div><div class="a" style="left:636.8px;top:151.39999999999998px;height:12px;line-height:12px;white-space:nowrap;color:#3a3a3a;font:normal 7.9px 'Liberation Sans', sans-serif;">Tracks to mixdown:</div><div class="a" style="left:635.5px;top:163.4px;width:88.89999999999998px;height:67.1px;background:#ffffff;border:none;border-radius:0px;"></div><div class="a" style="left:642.5px;top:170.3px;width:81.5px;height:60.2px;overflow:hidden;background:#d9d9d9"><div class="a" style="left:0;top:0.0px;width:81.5px;height:15.8px;color:#262626;font:9.7px 'Liberation Sans', sans-serif;line-height:13.5px;padding-left:5px;white-space:nowrap">1 - Audio</div><div class="a" style="left:0;top:15.8px;width:81.5px;height:1px;background:#e2e2e2"></div><div class="a" style="left:0;top:16.3px;width:81.5px;height:15.8px;color:#262626;font:9.7px 'Liberation Sans', sans-serif;line-height:13.5px;padding-left:5px;white-space:nowrap">2 - Audio</div><div class="a" style="left:0;top:32.1px;width:81.5px;height:1px;background:#e2e2e2"></div><div class="a" style="left:0;top:32.6px;width:81.5px;height:15.8px;color:#262626;font:9.7px 'Liberation Sans', sans-serif;line-height:13.5px;padding-left:5px;white-space:nowrap">Trumpet</div><div class="a" style="left:0;top:48.400000000000006px;width:81.5px;height:1px;background:#e2e2e2"></div><div class="a" style="left:0;top:48.900000000000006px;width:81.5px;height:15.8px;color:#262626;font:9.7px 'Liberation Sans', sans-serif;line-height:13.5px;padding-left:5px;white-space:nowrap">Trumpet</div></div><div class="a" style="left:654.2px;top:236.2px;width:70.79999999999995px;height:11.200000000000017px;background:#fafafa;border:1px solid #8c8c8c;border-radius:3px;color:#222;font:7.6px 'Liberation Sans', sans-serif;line-height:9.200000000000017px;text-align:center;white-space:nowrap">Select all</div><div class="a" style="left:491.7px;top:194px;width:9.600000000000023px;height:9.699999999999989px;background:#0c46a6;border-radius:2px"></div><svg class="a" style="left:491.7px;top:194px" width="9.600000000000023" height="9.699999999999989" viewBox="0 0 10 10"><path d="M2 5.2 L4.2 7.5 L8.2 2.5" fill="none" stroke="#fff" stroke-width="1.5"/></svg><div class="a" style="left:505.5px;top:194.29999999999998px;height:12px;line-height:12px;white-space:nowrap;color:#3a3a3a;font:normal 7.6px 'Liberation Sans', sans-serif;">Process master channel</div><div class="a" style="left:491.7px;top:213.8px;width:9.600000000000023px;height:9.699999999999989px;background:#fafafa;border:1px solid #7a7a7a;border-radius:2px"></div><div class="a" style="left:505.5px;top:213.89999999999998px;height:12px;line-height:12px;white-space:nowrap;color:#3a3a3a;font:normal 7.6px 'Liberation Sans', sans-serif;">Export markers</div><div class="a" style="left:491.7px;top:234.7px;width:9.600000000000023px;height:9.700000000000017px;background:#fafafa;border:1px solid #7a7a7a;border-radius:2px"></div><div class="a" style="left:505.5px;top:234.7px;height:12px;line-height:12px;white-space:nowrap;color:#3a3a3a;font:normal 7.6px 'Liberation Sans', sans-serif;">Show file in Folder</div><div class="a" style="left:491.7px;top:256.2px;width:9.600000000000023px;height:9.699999999999989px;background:#fafafa;border:1px solid #7a7a7a;border-radius:2px"></div><div class="a" style="left:505.5px;top:256.2px;height:12px;line-height:12px;white-space:nowrap;color:#3a3a3a;font:normal 7.6px 'Liberation Sans', sans-serif;">Insert mixdown result into song</div><div class="a" style="left:281.8px;top:186.2px;height:12px;line-height:12px;white-space:nowrap;color:#2a2a2a;font:normal 8.3px 'Liberation Sans', sans-serif;">File format</div><div class="a" style="left:274.6px;top:196.4px;width:209.29999999999995px;height:94.29999999999998px;background:#ebebeb;border:1px solid #c4c4c4;border-radius:3px;"></div><div class="a" style="left:287.8px;top:195.39999999999998px;height:12px;line-height:12px;white-space:nowrap;color:#2a2a2a;font:normal 8.3px 'Liberation Sans', sans-serif;">Bits</div><div class="a" style="left:279.9px;top:205.3px;width:197.5px;height:60.69999999999999px;background:#e6e6e6;border:1px solid #bcbcbc;border-radius:3px;"></div><svg class="a" style="left:282.3px;top:206px" width="12" height="12" viewBox="0 0 12 12"><circle cx="6" cy="6" r="4.3" fill="#f4f4f4" stroke="#555" stroke-width="1.1"/></svg><div class="a" style="left:294.3px;top:207.39999999999998px;height:12px;line-height:12px;white-space:nowrap;color:#3a3a3a;font:normal 7.6px 'Liberation Sans', sans-serif;">Use soundcards settings</div><svg class="a" style="left:282.3px;top:217.6px" width="12" height="12" viewBox="0 0 12 12"><circle cx="6" cy="6" r="4.3" fill="#f4f4f4" stroke="#555" stroke-width="1.1"/></svg><div class="a" style="left:294.3px;top:218.99999999999997px;height:12px;line-height:12px;white-space:nowrap;color:#3a3a3a;font:normal 7.6px 'Liberation Sans', sans-serif;">16 bit</div><svg class="a" style="left:282.3px;top:229.3px" width="12" height="12" viewBox="0 0 12 12"><circle cx="6" cy="6" r="4.5" fill="#a8eea0" stroke="#86e07c" stroke-width="1"/><circle cx="6" cy="6" r="1.6" fill="#5ccc52"/></svg><div class="a" style="left:294.3px;top:230.7px;height:12px;line-height:12px;white-space:nowrap;color:#3a3a3a;font:normal 7.6px 'Liberation Sans', sans-serif;">24 bit</div><svg class="a" style="left:282.3px;top:240.4px" width="12" height="12" viewBox="0 0 12 12"><circle cx="6" cy="6" r="4.3" fill="#f4f4f4" stroke="#555" stroke-width="1.1"/></svg><div class="a" style="left:294.3px;top:241.79999999999998px;height:12px;line-height:12px;white-space:nowrap;color:#3a3a3a;font:normal 7.6px 'Liberation Sans', sans-serif;">32 bit float</div><svg class="a" style="left:282.3px;top:252px" width="12" height="12" viewBox="0 0 12 12"><circle cx="6" cy="6" r="4.3" fill="#f4f4f4" stroke="#555" stroke-width="1.1"/></svg><div class="a" style="left:294.3px;top:253.39999999999998px;height:12px;line-height:12px;white-space:nowrap;color:#3a3a3a;font:normal 7.6px 'Liberation Sans', sans-serif;">64 bit float</div><div class="a" style="left:338.7px;top:274.0px;height:12px;line-height:12px;white-space:nowrap;color:#3a3a3a;font:normal 7.6px 'Liberation Sans', sans-serif;">Sampling frequency:</div><div class="a" style="left:409px;top:272px;width:69px;height:13.5px;background:#505050;border:none;border-radius:3px;"></div><div class="a" style="left:281.9px;top:297.2px;height:12px;line-height:12px;white-space:nowrap;color:#2a2a2a;font:normal 8.3px 'Liberation Sans', sans-serif;">Dither</div><div class="a" style="left:274.4px;top:307.4px;width:213.90000000000003px;height:28.900000000000034px;background:#ebebeb;border:1px solid #c4c4c4;border-radius:3px;"></div><div class="a" style="left:280.5px;top:310px;width:9.600000000000023px;height:9.5px;background:#fafafa;border:1px solid #7a7a7a;border-radius:2px"></div><div class="a" style="left:294.4px;top:309.9px;height:12px;line-height:12px;white-space:nowrap;color:#2a2a2a;font:normal 7.6px 'Liberation Sans', sans-serif;">Use dither</div><div class="a" style="left:387.2px;top:309.4px;height:12px;line-height:12px;white-space:nowrap;color:#3a3a3a;font:normal 7.6px 'Liberation Sans', sans-serif;">Dither</div><div class="a" style="left:280.5px;top:322px;width:9.600000000000023px;height:9px;background:#fafafa;border:1px solid #cfcfcf;border-radius:2px"></div><div class="a" style="left:294.4px;top:321.5px;height:12px;line-height:12px;white-space:nowrap;color:#a8a8a8;font:normal 7.6px 'Liberation Sans', sans-serif;">Noise shaping</div><div class="a" style="left:280.7px;top:345.8px;height:12px;line-height:12px;white-space:nowrap;color:#3a3a3a;font:normal 7.6px 'Liberation Sans', sans-serif;">Effects tails length:</div><div class="a" style="left:377.8px;top:345.3px;width:47.69999999999999px;height:12.300000000000011px;background:#ffffff;border:1px solid #7e7e7e;border-radius:0px;"></div><div class="a" style="left:380px;top:346.5px;height:12px;line-height:12px;white-space:nowrap;color:#333;font:normal 7.4px 'Liberation Sans', sans-serif;">1:1:000</div><div class="a" style="left:280.5px;top:363.4px;width:9.600000000000023px;height:9.400000000000034px;background:#fafafa;border:1px solid #7a7a7a;border-radius:2px"></div><div class="a" style="left:294.4px;top:363.4px;height:12px;line-height:12px;white-space:nowrap;color:#2a2a2a;font:normal 7.6px 'Liberation Sans', sans-serif;">Shift mixdown file according to plugins latency</div><div class="a" style="left:280.5px;top:380px;width:9.600000000000023px;height:9.300000000000011px;background:#fafafa;border:1px solid #7a7a7a;border-radius:2px"></div><div class="a" style="left:294.4px;top:380.0px;height:12px;line-height:12px;white-space:nowrap;color:#2a2a2a;font:normal 7.6px 'Liberation Sans', sans-serif;">Trim initial silence</div><div class="a" style="left:498.7px;top:296px;width:221.8px;height:13.399999999999977px;background:#ffffff;border:1px solid #a4a4a4;border-radius:4px;box-shadow:0 0.5px 1px rgba(0,0,0,0.15)"></div><div class="a" style="left:504.7px;top:297.9px;height:12px;line-height:12px;white-space:nowrap;color:#2e2e2e;font:normal 7.6px 'Liberation Sans', sans-serif;">Stereo wave file for each output</div><div class="a" style="left:706.7px;top:297.2px;width:13.299999999999955px;height:11.100000000000023px;background:#1d5fd0;border:none;border-radius:3px;"></div><svg class="a" style="left:706.7px;top:297.2px" width="13.3" height="11.1" viewBox="0 0 13.3 11.1"><path d="M4.3 4.3 L6.65 2 L9 4.3 M4.3 6.8 L6.65 9.1 L9 6.8" fill="none" stroke="#fff" stroke-width="1.2"/></svg><div class="a" style="left:496px;top:314.3px;width:227px;height:43.69999999999999px;background:#ffffff;border:none;border-radius:0px;"></div><div class="a" style="left:504px;top:321.6px;width:219px;height:16.1px;background:#dadada;color:#262626;font:9.4px 'Liberation Sans', sans-serif;line-height:13.5px;padding-left:5px;white-space:nowrap">1 - External Headphones</div><div class="a" style="left:410px;top:191.1px;width:65px;height:140px;background:#f1f1f1;border:1px solid #9c9c9c;border-radius:5px;box-shadow:0 2px 6px rgba(0,0,0,0.25)"></div><div class="a" style="left:413.8px;top:274.7px;width:57.19999999999999px;height:12.600000000000023px;background:#0c1eaa;border:none;border-radius:2px;"></div><div class="a" style="left:425.1px;top:196.89999999999998px;height:12px;line-height:12px;white-space:nowrap;color:#333;font:normal 7.5px 'Liberation Sans', sans-serif;">8000</div><div class="a" style="left:425.1px;top:210.1px;height:12px;line-height:12px;white-space:nowrap;color:#333;font:normal 7.5px 'Liberation Sans', sans-serif;">11025</div><div class="a" style="left:425.1px;top:223.2px;height:12px;line-height:12px;white-space:nowrap;color:#333;font:normal 7.5px 'Liberation Sans', sans-serif;">16000</div><div class="a" style="left:425.1px;top:236.29999999999998px;height:12px;line-height:12px;white-space:nowrap;color:#333;font:normal 7.5px 'Liberation Sans', sans-serif;">22050</div><div class="a" style="left:425.1px;top:249.5px;height:12px;line-height:12px;white-space:nowrap;color:#333;font:normal 7.5px 'Liberation Sans', sans-serif;">32000</div><div class="a" style="left:425.1px;top:262.59999999999997px;height:12px;line-height:12px;white-space:nowrap;color:#333;font:normal 7.5px 'Liberation Sans', sans-serif;">44100</div><div class="a" style="left:425.1px;top:276.0px;height:12px;line-height:12px;white-space:nowrap;color:#ffffff;font:bold 7.5px 'Liberation Sans', sans-serif;">48000</div><div class="a" style="left:425.1px;top:289.3px;height:12px;line-height:12px;white-space:nowrap;color:#333;font:normal 7.5px 'Liberation Sans', sans-serif;">88200</div><div class="a" style="left:425.1px;top:302.4px;height:12px;line-height:12px;white-space:nowrap;color:#333;font:normal 7.5px 'Liberation Sans', sans-serif;">96000</div><div class="a" style="left:425.1px;top:315.59999999999997px;height:12px;line-height:12px;white-space:nowrap;color:#333;font:normal 7.5px 'Liberation Sans', sans-serif;">192000</div><svg class="a" style="left:416.5px;top:277px" width="7" height="8" viewBox="0 0 7 8"><path d="M1 4.2 L2.8 6.4 L6 1.2" fill="none" stroke="#fff" stroke-width="1.3"/></svg><svg class="a" style="left:468px;top:281px" width="10" height="14" viewBox="0 0 10 14"><path d="M1 1 L1 11 L3.4 8.8 L5 12.4 L6.6 11.7 L5.1 8.2 L8.3 8.1 Z" fill="#111" stroke="#fff" stroke-width="0.8"/></svg>
</body></html>
